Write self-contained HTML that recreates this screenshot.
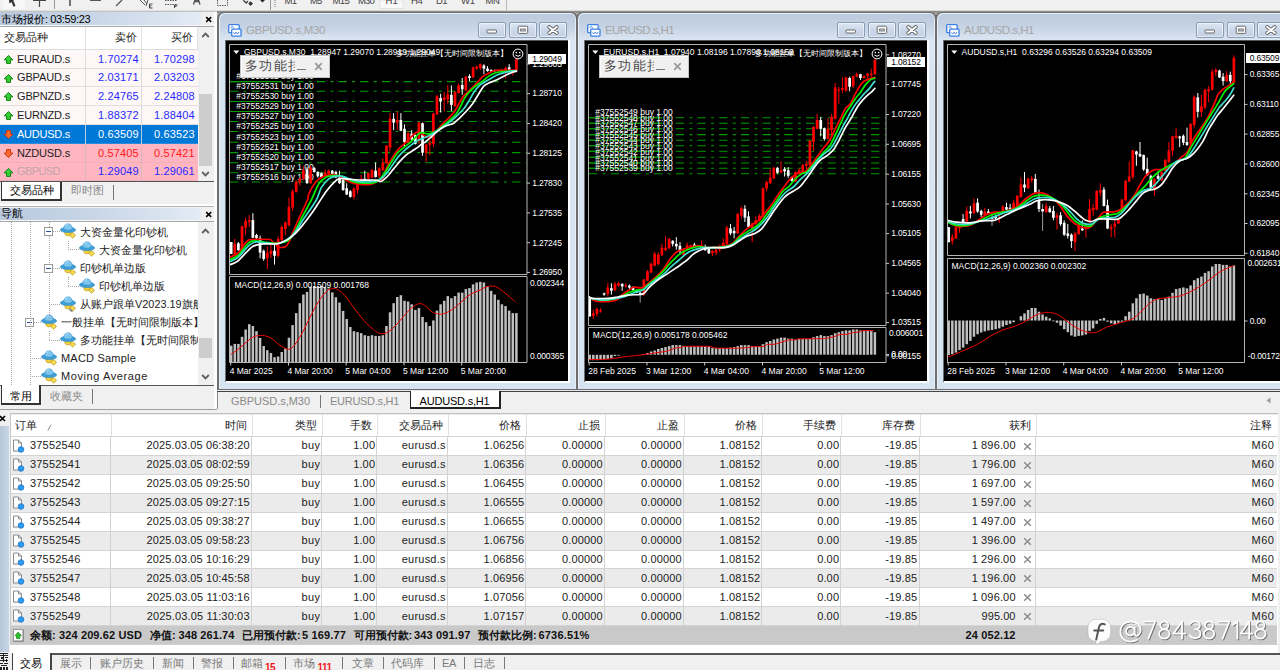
<!DOCTYPE html>
<html><head><meta charset="utf-8"><title>MT4</title>
<style>
html,body{margin:0;padding:0;background:#f0f0f0;}
#r{position:absolute;left:0;top:0;width:1280px;height:670px;overflow:hidden;background:#f0f0f0;font-family:"Liberation Sans",sans-serif;}
#r div,#r span.t,#r svg{position:absolute;}
#r span.t{white-space:pre;}
</style></head><body><div id="r">

<div style="left:0px;top:0px;width:1280px;height:11px;background:#f0f0f0;"></div>
<div style="left:0px;top:10px;width:217px;height:1px;background:#e0e0e0;"></div>
<div style="left:0px;top:11px;width:217px;height:1px;background:#c2c2c2;"></div>
<div style="left:217px;top:10px;width:1063px;height:1px;background:#d8d8d8;"></div>
<div style="left:217px;top:11px;width:1063px;height:2px;background:#8e8e8e;"></div>
<svg style="left:0;top:0" width="520" height="11" viewBox="0 0 520 11">
<rect x="3" y="0" width="22" height="9" fill="#f8f8f8"/>
<path d="M9 0 L13.5 0 L13.5 1 L15.5 6 L13.5 6.8 L11.5 2 L9.5 3.5 Z" fill="#333"/>
<path d="M39.5 0 V7 M33 0.5 H46" stroke="#444" stroke-width="1.2" fill="none"/>
<path d="M54.5 0 V9" stroke="#999" stroke-width="1"/>
<path d="M70 0 V6" stroke="#555" stroke-width="1.6"/>
<path d="M90 0.3 H101" stroke="#555" stroke-width="1.4"/>
<path d="M116 6 L122 0" stroke="#555" stroke-width="1.3"/>
<path d="M140 0 L145 5 M144 0 L147 4 M148 0 L146 6" stroke="#555" stroke-width="1" fill="none"/>
<path d="M149.5 4 V8 H152.5 M149.5 6 H151.5 M149.5 4 H152.5" stroke="#333" stroke-width="0.9" fill="none"/>
<path d="M165 0.5 H177 M165 4.5 H177" stroke="#555" stroke-width="1" stroke-dasharray="1.5 1"/>
<path d="M174.5 5 V8 M174.5 5 H177.5 M174.5 6.5 H176.5" stroke="#333" stroke-width="0.9" fill="none"/>
<path d="M193.5 4.5 L195 0 H198.5 L200 4.5 M194 1.5 H199.5" stroke="#555" stroke-width="1.4" fill="none"/>
<path d="M217.5 0 V5.5 H227.5 V0" stroke="#555" stroke-width="1" stroke-dasharray="1.5 1" fill="none"/>
<path d="M243.3 0.3 L246.2 3 L248 1" stroke="#444" stroke-width="1.3" fill="none"/><path d="M250.6 1.2 L253 3.6 L250.6 6 L248.2 3.6 Z" fill="#333"/>
<path d="M260 0 H265 L262.5 2.5 Z" fill="#222"/>
<path d="M270.5 0 V10" stroke="#999" stroke-width="1"/>
<path d="M275 0 V8" stroke="#bbb" stroke-width="2.5" stroke-dasharray="1 1"/>
<rect x="380" y="0" width="23" height="8.5" fill="#f9f9f9" stroke="#e2e2e2" stroke-width="1"/>
<path d="M506.5 0 V10" stroke="#b8b8b8" stroke-width="1"/>
</svg>
<span class="t" style="top:-5.24px;font-size:9.5px;line-height:11.5px;color:#444;letter-spacing:-0.60px;left:284.5px;">M1</span>
<span class="t" style="top:-5.24px;font-size:9.5px;line-height:11.5px;color:#444;letter-spacing:-0.85px;left:310px;">M5</span>
<span class="t" style="top:-5.24px;font-size:9.5px;line-height:11.5px;color:#444;letter-spacing:-0.66px;left:332.5px;">M15</span>
<span class="t" style="top:-5.24px;font-size:9.5px;line-height:11.5px;color:#444;letter-spacing:-0.83px;left:358px;">M30</span>
<span class="t" style="top:-5.24px;font-size:9.5px;line-height:11.5px;color:#444;letter-spacing:0.13px;left:385.6px;">H1</span>
<span class="t" style="top:-5.24px;font-size:9.5px;line-height:11.5px;color:#444;letter-spacing:-0.32px;left:411px;">H4</span>
<span class="t" style="top:-5.24px;font-size:9.5px;line-height:11.5px;color:#444;letter-spacing:-0.57px;left:436px;">D1</span>
<span class="t" style="top:-5.24px;font-size:9.5px;line-height:11.5px;color:#444;letter-spacing:-0.12px;left:461px;">W1</span>
<span class="t" style="top:-5.24px;font-size:9.5px;line-height:11.5px;color:#444;letter-spacing:-0.39px;left:485.6px;">MN</span>
<div style="left:0px;top:12px;width:217px;height:400px;background:#f0f0f0;"></div>
<div style="left:0px;top:12px;width:201px;height:14px;background:linear-gradient(90deg,#b9c9de 0%,#c9d7e8 50%,#e3ebf5 100%);"></div>
<span class="t" style="top:12.77px;font-size:10.9px;line-height:12.9px;color:#000;left:1px;">市场报价:</span>
<span class="t" style="top:12.69px;font-size:11px;line-height:13px;color:#000;letter-spacing:-0.35px;left:50.3px;">03:59:23</span>
<svg style="left:205px;top:16px" width="8" height="7" viewBox="0 0 8 7"><path d="M1.2 1.2 L6.2 5.8 M6.2 1.2 L1.2 5.8" stroke="#000" stroke-width="1.6"/></svg>
<div style="left:0px;top:25px;width:214px;height:1px;background:#f6f6f6;"></div>
<div style="left:0px;top:26px;width:214px;height:1px;background:#a8a8a8;"></div>
<div style="left:0px;top:27px;width:198px;height:155px;background:#fff;"></div>
<div style="left:0px;top:49px;width:198px;height:1px;background:#dcdcdc;"></div>
<div style="left:85px;top:27px;width:1px;height:22px;background:#e3e3e3;"></div>
<div style="left:141px;top:27px;width:1px;height:22px;background:#e3e3e3;"></div>
<div style="left:197px;top:27px;width:1px;height:22px;background:#e3e3e3;"></div>
<span class="t" style="top:30.77px;font-size:10.9px;line-height:12.9px;color:#222;left:4px;">交易品种</span>
<span class="t" style="top:30.77px;font-size:10.9px;line-height:12.9px;color:#222;right:1143.00px;">卖价</span>
<span class="t" style="top:30.77px;font-size:10.9px;line-height:12.9px;color:#222;right:1087.00px;">买价</span>
<div style="left:0px;top:49.6px;width:198px;height:19.5px;background:#fdf8f7;"></div>
<div style="left:0px;top:68.4px;width:198px;height:19.5px;background:#fdf8f7;"></div>
<div style="left:0px;top:87.2px;width:198px;height:19.5px;background:#fdf8f7;"></div>
<div style="left:0px;top:106.0px;width:198px;height:19.5px;background:#fdf8f7;"></div>
<div style="left:0px;top:124.8px;width:198px;height:19.5px;background:#0078d7;"></div>
<div style="left:0px;top:143.6px;width:198px;height:19.5px;background:#ffb6c1;"></div>
<div style="left:0px;top:162.4px;width:198px;height:18.8px;background:#ffb6c1;"></div>
<div style="left:0px;top:67.5px;width:198px;height:1px;background:#e2dede;"></div>
<div style="left:85px;top:49.6px;width:1px;height:18.8px;background:#dcdcdc;"></div>
<div style="left:141px;top:49.6px;width:1px;height:18.8px;background:#dcdcdc;"></div>
<svg style="left:2.7px;top:53.8px" width="11" height="11" viewBox="0 0 11 11"><path d="M5.5 1.4 L9.9 5.9 H7.5 V9.4 H3.5 V5.9 H1.1 Z" fill="#36cc36" stroke="#128612" stroke-width="1"/></svg>
<span class="t" style="top:52.69px;font-size:11px;line-height:13px;color:#222;letter-spacing:-0.25px;left:17px;">EURAUD.s</span>
<span class="t" style="top:52.69px;font-size:11px;line-height:13px;color:#2828ff;letter-spacing:0.11px;right:1141.39px;">1.70274</span>
<span class="t" style="top:52.69px;font-size:11px;line-height:13px;color:#2828ff;letter-spacing:0.11px;right:1085.39px;">1.70298</span>
<div style="left:0px;top:86.30000000000001px;width:198px;height:1px;background:#e2dede;"></div>
<div style="left:85px;top:68.4px;width:1px;height:18.8px;background:#dcdcdc;"></div>
<div style="left:141px;top:68.4px;width:1px;height:18.8px;background:#dcdcdc;"></div>
<svg style="left:2.7px;top:72.6px" width="11" height="11" viewBox="0 0 11 11"><path d="M5.5 1.4 L9.9 5.9 H7.5 V9.4 H3.5 V5.9 H1.1 Z" fill="#36cc36" stroke="#128612" stroke-width="1"/></svg>
<span class="t" style="top:71.49px;font-size:11px;line-height:13px;color:#222;letter-spacing:-0.15px;left:17px;">GBPAUD.s</span>
<span class="t" style="top:71.49px;font-size:11px;line-height:13px;color:#2828ff;letter-spacing:0.11px;right:1141.39px;">2.03171</span>
<span class="t" style="top:71.49px;font-size:11px;line-height:13px;color:#2828ff;letter-spacing:0.11px;right:1085.39px;">2.03203</span>
<div style="left:0px;top:105.1px;width:198px;height:1px;background:#e2dede;"></div>
<div style="left:85px;top:87.2px;width:1px;height:18.8px;background:#dcdcdc;"></div>
<div style="left:141px;top:87.2px;width:1px;height:18.8px;background:#dcdcdc;"></div>
<svg style="left:2.7px;top:91.4px" width="11" height="11" viewBox="0 0 11 11"><path d="M5.5 1.4 L9.9 5.9 H7.5 V9.4 H3.5 V5.9 H1.1 Z" fill="#36cc36" stroke="#128612" stroke-width="1"/></svg>
<span class="t" style="top:90.29px;font-size:11px;line-height:13px;color:#222;letter-spacing:-0.17px;left:17px;">GBPNZD.s</span>
<span class="t" style="top:90.29px;font-size:11px;line-height:13px;color:#2828ff;letter-spacing:0.11px;right:1141.39px;">2.24765</span>
<span class="t" style="top:90.29px;font-size:11px;line-height:13px;color:#2828ff;letter-spacing:0.11px;right:1085.39px;">2.24808</span>
<div style="left:0px;top:123.9px;width:198px;height:1px;background:#e2dede;"></div>
<div style="left:85px;top:106.0px;width:1px;height:18.8px;background:#dcdcdc;"></div>
<div style="left:141px;top:106.0px;width:1px;height:18.8px;background:#dcdcdc;"></div>
<svg style="left:2.7px;top:110.2px" width="11" height="11" viewBox="0 0 11 11"><path d="M5.5 1.4 L9.9 5.9 H7.5 V9.4 H3.5 V5.9 H1.1 Z" fill="#36cc36" stroke="#128612" stroke-width="1"/></svg>
<span class="t" style="top:109.09px;font-size:11px;line-height:13px;color:#222;letter-spacing:-0.17px;left:17px;">EURNZD.s</span>
<span class="t" style="top:109.09px;font-size:11px;line-height:13px;color:#2828ff;letter-spacing:0.11px;right:1141.39px;">1.88372</span>
<span class="t" style="top:109.09px;font-size:11px;line-height:13px;color:#2828ff;letter-spacing:0.11px;right:1085.39px;">1.88404</span>
<div style="left:0px;top:142.7px;width:198px;height:1px;background:#2a8ade;"></div>
<div style="left:85px;top:124.8px;width:1px;height:18.8px;background:#b8cde0;"></div>
<div style="left:141px;top:124.8px;width:1px;height:18.8px;background:#b8cde0;"></div>
<svg style="left:2.7px;top:129.0px" width="11" height="11" viewBox="0 0 11 11"><path d="M5.5 9.6 L9.9 5.1 H7.5 V1.6 H3.5 V5.1 H1.1 Z" fill="#ff6a30" stroke="#c8380c" stroke-width="1"/></svg>
<span class="t" style="top:127.89px;font-size:11px;line-height:13px;color:#fff;letter-spacing:-0.25px;left:17px;">AUDUSD.s</span>
<span class="t" style="top:127.89px;font-size:11px;line-height:13px;color:#fff;letter-spacing:0.11px;right:1141.39px;">0.63509</span>
<span class="t" style="top:127.89px;font-size:11px;line-height:13px;color:#fff;letter-spacing:0.11px;right:1085.39px;">0.63523</span>
<div style="left:0px;top:161.5px;width:198px;height:1px;background:#f2b0ba;"></div>
<div style="left:85px;top:143.6px;width:1px;height:18.8px;background:#dcb4bc;"></div>
<div style="left:141px;top:143.6px;width:1px;height:18.8px;background:#dcb4bc;"></div>
<svg style="left:2.7px;top:147.8px" width="11" height="11" viewBox="0 0 11 11"><path d="M5.5 9.6 L9.9 5.1 H7.5 V1.6 H3.5 V5.1 H1.1 Z" fill="#ff6a30" stroke="#c8380c" stroke-width="1"/></svg>
<span class="t" style="top:146.69px;font-size:11px;line-height:13px;color:#222;letter-spacing:-0.17px;left:17px;">NZDUSD.s</span>
<span class="t" style="top:146.69px;font-size:11px;line-height:13px;color:#ff1a1a;letter-spacing:0.11px;right:1141.39px;">0.57405</span>
<span class="t" style="top:146.69px;font-size:11px;line-height:13px;color:#ff1a1a;letter-spacing:0.11px;right:1085.39px;">0.57421</span>
<div style="left:0px;top:180.3px;width:198px;height:1px;background:#f2b0ba;"></div>
<div style="left:85px;top:162.4px;width:1px;height:18.8px;background:#dcb4bc;"></div>
<div style="left:141px;top:162.4px;width:1px;height:18.8px;background:#dcb4bc;"></div>
<svg style="left:2.7px;top:166.6px" width="11" height="11" viewBox="0 0 11 11"><path d="M5.5 1.4 L9.9 5.9 H7.5 V9.4 H3.5 V5.9 H1.1 Z" fill="#36cc36" stroke="#128612" stroke-width="1"/></svg>
<span class="t" style="top:165.49px;font-size:11px;line-height:13px;color:#bfa4ac;letter-spacing:-0.58px;left:17px;">GBPUSD</span>
<span class="t" style="top:165.49px;font-size:11px;line-height:13px;color:#2828ff;letter-spacing:0.11px;right:1141.39px;">1.29049</span>
<span class="t" style="top:165.49px;font-size:11px;line-height:13px;color:#2828ff;letter-spacing:0.11px;right:1085.39px;">1.29061</span>
<div style="left:198px;top:27px;width:17px;height:155px;background:#f0f0f0;"></div>
<svg style="left:201px;top:32px" width="9" height="6" viewBox="0 0 9 6"><path d="M1.2 5 L4.5 1.6 L7.8 5" stroke="#606060" stroke-width="1.8" fill="none"/></svg>
<svg style="left:201px;top:171px" width="9" height="6" viewBox="0 0 9 6"><path d="M1.2 1 L4.5 4.4 L7.8 1" stroke="#606060" stroke-width="1.8" fill="none"/></svg>
<div style="left:199px;top:94px;width:13px;height:72px;background:#cdcdcd;"></div>
<div style="left:0px;top:181px;width:214px;height:1px;background:#555;"></div>
<div style="left:1px;top:182px;width:61px;height:19px;background:#fff;border:1px solid #333;border-top:none;box-sizing:border-box;border-right:2px solid #333;border-bottom:2px solid #333;"></div>
<span class="t" style="top:184.37px;font-size:10.9px;line-height:12.9px;color:#000;left:10px;">交易品种</span>
<span class="t" style="top:184.37px;font-size:10.9px;line-height:12.9px;color:#8a8a8a;left:71px;">即时图</span>
<div style="left:113px;top:185px;width:1px;height:15px;background:#777;"></div>
<div style="left:0px;top:204px;width:217px;height:2px;background:#fff;"></div>
<div style="left:0px;top:206px;width:217px;height:1px;background:#b4b4b4;"></div>
<div style="left:0px;top:208px;width:201px;height:12px;background:linear-gradient(90deg,#b9c9de 0%,#c9d7e8 50%,#e3ebf5 100%);"></div>
<span class="t" style="top:207.27px;font-size:10.9px;line-height:12.9px;color:#000;left:1px;">导航</span>
<svg style="left:205px;top:211px" width="8" height="7" viewBox="0 0 8 7"><path d="M1.2 1.2 L6.2 5.8 M6.2 1.2 L1.2 5.8" stroke="#000" stroke-width="1.6"/></svg>
<div style="left:0px;top:220px;width:214px;height:1px;background:#f6f6f6;"></div>
<div style="left:0px;top:221px;width:214px;height:1px;background:#a8a8a8;"></div>
<div style="left:0px;top:222px;width:198px;height:163px;background:#fff;"></div>
<div style="left:198px;top:222px;width:17px;height:163px;background:#f0f0f0;"></div>
<svg style="left:201px;top:228px" width="9" height="6" viewBox="0 0 9 6"><path d="M1.2 5 L4.5 1.6 L7.8 5" stroke="#606060" stroke-width="1.8" fill="none"/></svg>
<svg style="left:201px;top:374px" width="9" height="6" viewBox="0 0 9 6"><path d="M1.2 1 L4.5 4.4 L7.8 1" stroke="#606060" stroke-width="1.8" fill="none"/></svg>
<div style="left:199px;top:338px;width:13px;height:20px;background:#cdcdcd;"></div>
<svg style="left:60px;top:223px" width="17" height="16" viewBox="0 0 17 16">
<circle cx="8" cy="9.6" r="3.3" fill="#f4d23e" stroke="#c39a14" stroke-width="0.7"/>
<path d="M12.4 9.3 L15.6 12.3 L12.6 15.2 L9.6 12.3 Z" fill="#f6da52" stroke="#b8921a" stroke-width="0.7"/>
<ellipse cx="8" cy="6.9" rx="7.6" ry="2.7" fill="#3f9fd8" stroke="#2a86c2" stroke-width="0.6"/>
<path d="M3.7 6.2 C3.9 2.4 5.6 0.9 8 0.9 C10.4 0.9 12.1 2.4 12.3 6.2 C10 7.6 6 7.6 3.7 6.2 Z" fill="#7fc6ee" stroke="#2f8fcb" stroke-width="0.7"/>
<path d="M5.2 3.2 C6 1.9 7.2 1.6 8.2 1.7" stroke="#c6e8fa" stroke-width="0.9" fill="none"/>
</svg>
<span class="t" style="top:225.67px;font-size:10.9px;line-height:12.9px;color:#222;left:80px;max-width:118px;overflow:hidden;">大资金量化印钞机</span>
<svg style="left:44px;top:227px" width="9" height="9" viewBox="0 0 9 9"><rect x="0.5" y="0.5" width="8" height="8" fill="#fff" stroke="#9a9a9a"/><path d="M2 4.5 H7" stroke="#3050a0" stroke-width="1"/></svg>
<svg style="left:79px;top:241px" width="17" height="16" viewBox="0 0 17 16">
<circle cx="8" cy="9.6" r="3.3" fill="#f4d23e" stroke="#c39a14" stroke-width="0.7"/>
<path d="M12.4 9.3 L15.6 12.3 L12.6 15.2 L9.6 12.3 Z" fill="#f6da52" stroke="#b8921a" stroke-width="0.7"/>
<ellipse cx="8" cy="6.9" rx="7.6" ry="2.7" fill="#3f9fd8" stroke="#2a86c2" stroke-width="0.6"/>
<path d="M3.7 6.2 C3.9 2.4 5.6 0.9 8 0.9 C10.4 0.9 12.1 2.4 12.3 6.2 C10 7.6 6 7.6 3.7 6.2 Z" fill="#7fc6ee" stroke="#2f8fcb" stroke-width="0.7"/>
<path d="M5.2 3.2 C6 1.9 7.2 1.6 8.2 1.7" stroke="#c6e8fa" stroke-width="0.9" fill="none"/>
</svg>
<span class="t" style="top:243.72px;font-size:10.9px;line-height:12.9px;color:#222;left:99px;max-width:99px;overflow:hidden;">大资金量化印钞机</span>
<svg style="left:60px;top:260px" width="17" height="16" viewBox="0 0 17 16">
<circle cx="8" cy="9.6" r="3.3" fill="#f4d23e" stroke="#c39a14" stroke-width="0.7"/>
<path d="M12.4 9.3 L15.6 12.3 L12.6 15.2 L9.6 12.3 Z" fill="#f6da52" stroke="#b8921a" stroke-width="0.7"/>
<ellipse cx="8" cy="6.9" rx="7.6" ry="2.7" fill="#3f9fd8" stroke="#2a86c2" stroke-width="0.6"/>
<path d="M3.7 6.2 C3.9 2.4 5.6 0.9 8 0.9 C10.4 0.9 12.1 2.4 12.3 6.2 C10 7.6 6 7.6 3.7 6.2 Z" fill="#7fc6ee" stroke="#2f8fcb" stroke-width="0.7"/>
<path d="M5.2 3.2 C6 1.9 7.2 1.6 8.2 1.7" stroke="#c6e8fa" stroke-width="0.9" fill="none"/>
</svg>
<span class="t" style="top:261.77px;font-size:10.9px;line-height:12.9px;color:#222;left:80px;max-width:118px;overflow:hidden;">印钞机单边版</span>
<svg style="left:44px;top:264px" width="9" height="9" viewBox="0 0 9 9"><rect x="0.5" y="0.5" width="8" height="8" fill="#fff" stroke="#9a9a9a"/><path d="M2 4.5 H7" stroke="#3050a0" stroke-width="1"/></svg>
<svg style="left:79px;top:278px" width="17" height="16" viewBox="0 0 17 16">
<circle cx="8" cy="9.6" r="3.3" fill="#f4d23e" stroke="#c39a14" stroke-width="0.7"/>
<path d="M12.4 9.3 L15.6 12.3 L12.6 15.2 L9.6 12.3 Z" fill="#f6da52" stroke="#b8921a" stroke-width="0.7"/>
<ellipse cx="8" cy="6.9" rx="7.6" ry="2.7" fill="#3f9fd8" stroke="#2a86c2" stroke-width="0.6"/>
<path d="M3.7 6.2 C3.9 2.4 5.6 0.9 8 0.9 C10.4 0.9 12.1 2.4 12.3 6.2 C10 7.6 6 7.6 3.7 6.2 Z" fill="#7fc6ee" stroke="#2f8fcb" stroke-width="0.7"/>
<path d="M5.2 3.2 C6 1.9 7.2 1.6 8.2 1.7" stroke="#c6e8fa" stroke-width="0.9" fill="none"/>
</svg>
<span class="t" style="top:279.82px;font-size:10.9px;line-height:12.9px;color:#222;left:99px;max-width:99px;overflow:hidden;">印钞机单边版</span>
<svg style="left:60px;top:296px" width="17" height="16" viewBox="0 0 17 16">
<circle cx="8" cy="9.6" r="3.3" fill="#f4d23e" stroke="#c39a14" stroke-width="0.7"/>
<path d="M12.4 9.3 L15.6 12.3 L12.6 15.2 L9.6 12.3 Z" fill="#f6da52" stroke="#b8921a" stroke-width="0.7"/>
<ellipse cx="8" cy="6.9" rx="7.6" ry="2.7" fill="#3f9fd8" stroke="#2a86c2" stroke-width="0.6"/>
<path d="M3.7 6.2 C3.9 2.4 5.6 0.9 8 0.9 C10.4 0.9 12.1 2.4 12.3 6.2 C10 7.6 6 7.6 3.7 6.2 Z" fill="#7fc6ee" stroke="#2f8fcb" stroke-width="0.7"/>
<path d="M5.2 3.2 C6 1.9 7.2 1.6 8.2 1.7" stroke="#c6e8fa" stroke-width="0.9" fill="none"/>
<path d="M10 12 L13 15 L11.5 16 L9 14 Z" fill="#888"/></svg>
<span class="t" style="top:297.87px;font-size:10.9px;line-height:12.9px;color:#222;left:80px;max-width:118px;overflow:hidden;">从账户跟单V2023.19旗舰</span>
<svg style="left:41px;top:314px" width="17" height="16" viewBox="0 0 17 16">
<circle cx="8" cy="9.6" r="3.3" fill="#f4d23e" stroke="#c39a14" stroke-width="0.7"/>
<path d="M12.4 9.3 L15.6 12.3 L12.6 15.2 L9.6 12.3 Z" fill="#f6da52" stroke="#b8921a" stroke-width="0.7"/>
<ellipse cx="8" cy="6.9" rx="7.6" ry="2.7" fill="#3f9fd8" stroke="#2a86c2" stroke-width="0.6"/>
<path d="M3.7 6.2 C3.9 2.4 5.6 0.9 8 0.9 C10.4 0.9 12.1 2.4 12.3 6.2 C10 7.6 6 7.6 3.7 6.2 Z" fill="#7fc6ee" stroke="#2f8fcb" stroke-width="0.7"/>
<path d="M5.2 3.2 C6 1.9 7.2 1.6 8.2 1.7" stroke="#c6e8fa" stroke-width="0.9" fill="none"/>
</svg>
<span class="t" style="top:315.92px;font-size:10.9px;line-height:12.9px;color:#222;left:61px;max-width:137px;overflow:hidden;">一般挂单【无时间限制版本】</span>
<svg style="left:25px;top:318px" width="9" height="9" viewBox="0 0 9 9"><rect x="0.5" y="0.5" width="8" height="8" fill="#fff" stroke="#9a9a9a"/><path d="M2 4.5 H7" stroke="#3050a0" stroke-width="1"/></svg>
<svg style="left:60px;top:332px" width="17" height="16" viewBox="0 0 17 16">
<circle cx="8" cy="9.6" r="3.3" fill="#f4d23e" stroke="#c39a14" stroke-width="0.7"/>
<path d="M12.4 9.3 L15.6 12.3 L12.6 15.2 L9.6 12.3 Z" fill="#f6da52" stroke="#b8921a" stroke-width="0.7"/>
<ellipse cx="8" cy="6.9" rx="7.6" ry="2.7" fill="#3f9fd8" stroke="#2a86c2" stroke-width="0.6"/>
<path d="M3.7 6.2 C3.9 2.4 5.6 0.9 8 0.9 C10.4 0.9 12.1 2.4 12.3 6.2 C10 7.6 6 7.6 3.7 6.2 Z" fill="#7fc6ee" stroke="#2f8fcb" stroke-width="0.7"/>
<path d="M5.2 3.2 C6 1.9 7.2 1.6 8.2 1.7" stroke="#c6e8fa" stroke-width="0.9" fill="none"/>
</svg>
<span class="t" style="top:333.97px;font-size:10.9px;line-height:12.9px;color:#222;left:80px;max-width:118px;overflow:hidden;">多功能挂单【无时间限制</span>
<svg style="left:41px;top:350px" width="17" height="16" viewBox="0 0 17 16">
<circle cx="8" cy="9.6" r="3.3" fill="#f4d23e" stroke="#c39a14" stroke-width="0.7"/>
<path d="M12.4 9.3 L15.6 12.3 L12.6 15.2 L9.6 12.3 Z" fill="#f6da52" stroke="#b8921a" stroke-width="0.7"/>
<ellipse cx="8" cy="6.9" rx="7.6" ry="2.7" fill="#3f9fd8" stroke="#2a86c2" stroke-width="0.6"/>
<path d="M3.7 6.2 C3.9 2.4 5.6 0.9 8 0.9 C10.4 0.9 12.1 2.4 12.3 6.2 C10 7.6 6 7.6 3.7 6.2 Z" fill="#7fc6ee" stroke="#2f8fcb" stroke-width="0.7"/>
<path d="M5.2 3.2 C6 1.9 7.2 1.6 8.2 1.7" stroke="#c6e8fa" stroke-width="0.9" fill="none"/>
</svg>
<span class="t" style="top:351.94px;font-size:11px;line-height:13px;color:#222;letter-spacing:0.21px;left:61px;">MACD Sample</span>
<svg style="left:41px;top:368px" width="17" height="16" viewBox="0 0 17 16">
<circle cx="8" cy="9.6" r="3.3" fill="#f4d23e" stroke="#c39a14" stroke-width="0.7"/>
<path d="M12.4 9.3 L15.6 12.3 L12.6 15.2 L9.6 12.3 Z" fill="#f6da52" stroke="#b8921a" stroke-width="0.7"/>
<ellipse cx="8" cy="6.9" rx="7.6" ry="2.7" fill="#3f9fd8" stroke="#2a86c2" stroke-width="0.6"/>
<path d="M3.7 6.2 C3.9 2.4 5.6 0.9 8 0.9 C10.4 0.9 12.1 2.4 12.3 6.2 C10 7.6 6 7.6 3.7 6.2 Z" fill="#7fc6ee" stroke="#2f8fcb" stroke-width="0.7"/>
<path d="M5.2 3.2 C6 1.9 7.2 1.6 8.2 1.7" stroke="#c6e8fa" stroke-width="0.9" fill="none"/>
</svg>
<span class="t" style="top:369.99px;font-size:11px;line-height:13px;color:#222;letter-spacing:0.59px;left:61px;">Moving Average</span>
<svg style="left:0;top:0" width="200" height="400" viewBox="0 0 200 400" stroke="#a8a8a8" stroke-width="1" stroke-dasharray="1 1" fill="none"><path d="M53 231.5 H60" /><path d="M68 249.5 H79" /><path d="M53 268.5 H60" /><path d="M68 286.5 H79" /><path d="M49 304.5 H60" /><path d="M34 322.5 H41" /><path d="M49 340.5 H60" /><path d="M30 358.5 H41" /><path d="M30 376.5 H41" /><path d="M11.5 222 V385" /><path d="M30.5 222 V385" /><path d="M49.5 222 V227" /><path d="M49.5 236 V263" /><path d="M49.5 272 V322" /><path d="M68.5 241 V250" /><path d="M68.5 277 V286" /><path d="M49.5 331 V340" /></svg>
<div style="left:0px;top:385px;width:214px;height:1px;background:#555;"></div>
<div style="left:1px;top:385px;width:40px;height:20px;background:#fff;border:1px solid #333;border-top:none;box-sizing:border-box;border-right:2px solid #333;border-bottom:2px solid #333;"></div>
<span class="t" style="top:389.77px;font-size:10.9px;line-height:12.9px;color:#000;left:10px;">常用</span>
<span class="t" style="top:389.77px;font-size:10.9px;line-height:12.9px;color:#8a8a8a;left:50px;">收藏夹</span>
<div style="left:92px;top:389px;width:1px;height:15px;background:#777;"></div>
<div style="left:214px;top:12px;width:3px;height:398px;background:#fdfdfd;"></div>
<div style="left:217px;top:13px;width:1063px;height:379px;background:#ababab;"></div>
<div style="left:217px;top:12px;width:361px;height:378px;box-sizing:border-box;border:2px solid #6e6e6e;border-bottom-width:1px;border-top-width:1px;border-radius:7px 7px 0 0;background:linear-gradient(180deg,#bac9dc 0px,#bfcee0 7px,#c8d5e6 16px,#d6e1ef 24px,#dee8f4 29px,#d8e4f2 60px,#d6e3f1 100%);box-shadow:inset 1px 1px 0 #e6eef8,inset -1px 0 0 #e6eef8;"></div>
<svg style="left:228px;top:24px" width="15" height="14" viewBox="0 0 15 14"><rect x="0.7" y="0.7" width="10.5" height="8" rx="1" fill="#fff" stroke="#3c7fe6" stroke-width="1.3"/><path d="M2.5 3.5 L4.5 2.5 L6 4.5" stroke="#3c7fe6" fill="none" stroke-width="0.9"/>
<rect x="3.7" y="5.2" width="9.3" height="7" rx="0.8" fill="#fff" stroke="#3c7fe6" stroke-width="1.3"/><path d="M5.3 8.4 L6.8 10 L8.2 8 L9.6 10 L11 8" stroke="#3c7fe6" fill="none" stroke-width="0.9"/></svg>
<span class="t" style="top:24.47px;font-size:11.5px;line-height:13.5px;color:#a6a6a6;letter-spacing:-0.34px;left:246px;">GBPUSD.s,M30</span>
<div style="left:478px;top:22px;width:28.2px;height:16px;box-sizing:border-box;border:1px solid #8b9cb6;border-radius:2px;background:linear-gradient(180deg,#dde7f3,#cbd8e9 50%,#c3d1e3);box-shadow:inset 0 0 0 1px rgba(255,255,255,.55);"></div>
<svg style="left:486px;top:29px" width="12" height="6" viewBox="0 0 12 6"><rect x="1" y="1" width="9.5" height="3" rx="0.8" fill="#fff" stroke="#5a5a5a" stroke-width="0.9"/></svg>
<div style="left:508.5px;top:22px;width:28.2px;height:16px;box-sizing:border-box;border:1px solid #8b9cb6;border-radius:2px;background:linear-gradient(180deg,#dde7f3,#cbd8e9 50%,#c3d1e3);box-shadow:inset 0 0 0 1px rgba(255,255,255,.55);"></div>
<svg style="left:516.5px;top:25px" width="12" height="10" viewBox="0 0 12 10"><rect x="1.2" y="1.2" width="9.5" height="7.2" rx="1" fill="#fff" stroke="#5a5a5a" stroke-width="0.9"/><rect x="3.6" y="4" width="4.7" height="2" fill="#c9d6e8" stroke="#5a5a5a" stroke-width="0.8"/></svg>
<div style="left:539px;top:22px;width:28.2px;height:16px;box-sizing:border-box;border:1px solid #8b9cb6;border-radius:2px;background:linear-gradient(180deg,#dde7f3,#cbd8e9 50%,#c3d1e3);box-shadow:inset 0 0 0 1px rgba(255,255,255,.55);"></div>
<svg style="left:547px;top:25px" width="12" height="10" viewBox="0 0 12 10"><path d="M2.2 2 L9.8 8 M9.8 2 L2.2 8" stroke="#555" stroke-width="3.6" stroke-linecap="round"/><path d="M2.2 2 L9.8 8 M9.8 2 L2.2 8" stroke="#fff" stroke-width="2.1" stroke-linecap="round"/></svg>
<div style="left:226px;top:40px;width:344px;height:343px;background:#fff;"></div>
<div style="left:225px;top:40px;width:1px;height:342px;background:#6a7078;"></div>
<div style="left:226px;top:40px;width:342px;height:341px;background:#000;"></div>
<div style="left:226px;top:40px;width:342px;height:1px;background:#50555c;"></div>
<svg style="left:226px;top:41px" width="343" height="340" viewBox="226 41 343 340"><g stroke="#009c00" stroke-width="1.05" stroke-dasharray="8.2 5.4 3 5.1" fill="none"><path d="M230 81.6 H527"/><path d="M230 91.2 H527"/><path d="M230 101.4 H527"/><path d="M230 111.5 H527"/><path d="M230 121.5 H527"/><path d="M230 131.5 H527"/><path d="M230 142.2 H527"/><path d="M230 152.6 H527"/><path d="M230 162.8 H527"/><path d="M230 172.7 H527"/><path d="M230 181.9 H527"/></g><g stroke="#009c00" stroke-width="1.05" fill="none"><path d="M230 81.6 H282"/><path d="M230 101.4 H282"/><path d="M230 111.5 H282"/></g>
</svg>
<span class="t" style="top:71.20px;font-size:8.5px;line-height:10.5px;color:#fff;left:236.3px;">#37552532 buy 1.00</span>
<span class="t" style="top:80.80px;font-size:8.5px;line-height:10.5px;color:#fff;left:236.3px;">#37552531 buy 1.00</span>
<span class="t" style="top:91.00px;font-size:8.5px;line-height:10.5px;color:#fff;left:236.3px;">#37552530 buy 1.00</span>
<span class="t" style="top:101.10px;font-size:8.5px;line-height:10.5px;color:#fff;left:236.3px;">#37552529 buy 1.00</span>
<span class="t" style="top:111.10px;font-size:8.5px;line-height:10.5px;color:#fff;left:236.3px;">#37552527 buy 1.00</span>
<span class="t" style="top:121.10px;font-size:8.5px;line-height:10.5px;color:#fff;left:236.3px;">#37552525 buy 1.00</span>
<span class="t" style="top:131.80px;font-size:8.5px;line-height:10.5px;color:#fff;left:236.3px;">#37552523 buy 1.00</span>
<span class="t" style="top:142.20px;font-size:8.5px;line-height:10.5px;color:#fff;left:236.3px;">#37552521 buy 1.00</span>
<span class="t" style="top:152.40px;font-size:8.5px;line-height:10.5px;color:#fff;left:236.3px;">#37552520 buy 1.00</span>
<span class="t" style="top:162.30px;font-size:8.5px;line-height:10.5px;color:#fff;left:236.3px;">#37552517 buy 1.00</span>
<span class="t" style="top:171.50px;font-size:8.5px;line-height:10.5px;color:#fff;left:236.3px;">#37552516 buy 1.00</span>
<svg style="left:226px;top:41px" width="343" height="340" viewBox="226 41 343 340"><g stroke-width="1" fill="none"><path d="M231.2 242.0 V253.9" stroke="#ffffff"/><path d="M234.8 238.9 V255.8" stroke="#ff0000"/><path d="M238.4 242.0 V250.8" stroke="#ffffff"/><path d="M242.0 225.7 V250.2" stroke="#ff0000"/><path d="M245.6 217.6 V234.5" stroke="#ff0000"/><path d="M249.2 215.0 V227.0" stroke="#ff0000"/><path d="M252.9 213.2 V238.2" stroke="#ffffff"/><path d="M256.5 233.9 V240.1" stroke="#ffffff"/><path d="M260.1 235.7 V258.3" stroke="#ffffff"/><path d="M263.7 249.5 V260.8" stroke="#ffffff"/><path d="M267.3 246.4 V269.0" stroke="#ff0000"/><path d="M270.9 243.3 V258.3" stroke="#ff0000"/><path d="M274.5 244.5 V264.6" stroke="#ffffff"/><path d="M278.1 236.4 V257.7" stroke="#ff0000"/><path d="M281.7 225.1 V241.4" stroke="#ff0000"/><path d="M285.3 221.3 V235.1" stroke="#ff0000"/><path d="M289.0 197.6 V226.5" stroke="#ff0000"/><path d="M292.6 189.5 V210.8" stroke="#ff0000"/><path d="M296.2 180.1 V192.6" stroke="#ff0000"/><path d="M299.8 177.6 V185.7" stroke="#ff0000"/><path d="M303.4 166.3 V180.1" stroke="#ff0000"/><path d="M307.0 166.9 V183.8" stroke="#ffffff"/><path d="M310.6 165.6 V183.8" stroke="#ff0000"/><path d="M314.2 166.9 V172.5" stroke="#ffffff"/><path d="M317.8 171.3 V177.6" stroke="#ffffff"/><path d="M321.4 172.5 V177.6" stroke="#ffffff"/><path d="M325.1 169.4 V176.3" stroke="#ff0000"/><path d="M328.7 169.4 V175.0" stroke="#ff0000"/><path d="M332.3 170.0 V174.4" stroke="#ffffff"/><path d="M335.9 170.7 V178.2" stroke="#ffffff"/><path d="M339.5 170.7 V183.8" stroke="#ffffff"/><path d="M343.1 178.8 V190.7" stroke="#ffffff"/><path d="M346.7 183.2 V195.1" stroke="#ffffff"/><path d="M350.3 190.1 V197.6" stroke="#ffffff"/><path d="M353.9 187.6 V199.5" stroke="#ff0000"/><path d="M357.5 183.8 V193.9" stroke="#ff0000"/><path d="M361.2 175.0 V183.2" stroke="#ff0000"/><path d="M364.8 170.7 V181.3" stroke="#ffffff"/><path d="M368.4 172.5 V179.4" stroke="#ff0000"/><path d="M372.0 168.8 V178.2" stroke="#ff0000"/><path d="M375.6 162.5 V177.6" stroke="#ffffff"/><path d="M379.2 167.1 V179.0" stroke="#ff0000"/><path d="M382.8 158.3 V170.8" stroke="#ff0000"/><path d="M386.4 145.1 V163.9" stroke="#ff0000"/><path d="M390.0 113.1 V151.4" stroke="#ff0000"/><path d="M393.6 113.1 V130.1" stroke="#ffffff"/><path d="M397.3 111.3 V130.1" stroke="#ff0000"/><path d="M400.9 113.1 V131.3" stroke="#ffffff"/><path d="M404.5 124.4 V147.6" stroke="#ffffff"/><path d="M408.1 131.3 V143.2" stroke="#ff0000"/><path d="M411.7 130.1 V141.3" stroke="#ffffff"/><path d="M415.3 134.5 V144.5" stroke="#ffffff"/><path d="M418.9 121.9 V143.9" stroke="#ff0000"/><path d="M422.5 122.5 V155.8" stroke="#ffffff"/><path d="M426.1 143.9 V162.0" stroke="#ff0000"/><path d="M429.8 140.1 V155.1" stroke="#ff0000"/><path d="M433.4 112.5 V147.0" stroke="#ff0000"/><path d="M437.0 94.9 V115.0" stroke="#ff0000"/><path d="M440.6 93.7 V112.5" stroke="#ffffff"/><path d="M444.2 91.8 V111.2" stroke="#ff0000"/><path d="M447.8 84.9 V104.3" stroke="#ff0000"/><path d="M451.4 85.5 V111.2" stroke="#ffffff"/><path d="M455.0 91.2 V106.8" stroke="#ff0000"/><path d="M458.6 83.6 V93.7" stroke="#ff0000"/><path d="M462.2 78.0 V94.9" stroke="#ffffff"/><path d="M465.9 76.1 V91.2" stroke="#ff0000"/><path d="M469.5 74.2 V81.1" stroke="#ffffff"/><path d="M473.1 66.7 V78.0" stroke="#ff0000"/><path d="M476.7 65.5 V69.8" stroke="#ff0000"/><path d="M480.3 63.6 V69.8" stroke="#ff0000"/><path d="M483.9 64.2 V74.2" stroke="#ffffff"/><path d="M487.5 66.1 V71.7" stroke="#ffffff"/><path d="M491.1 69.2 V71.7" stroke="#ffffff"/><path d="M494.7 69.6 V71.7" stroke="#ffffff"/><path d="M498.3 69.2 V71.7" stroke="#ff0000"/><path d="M501.9 68.8 V71.7" stroke="#ff0000"/><path d="M505.6 66.7 V78.6" stroke="#ff0000"/><path d="M509.2 64.2 V70.5" stroke="#ffffff"/><path d="M512.8 69.2 V75.5" stroke="#ff0000"/><path d="M516.4 58.6 V72.3" stroke="#ff0000"/></g><rect x="229.85" y="242.0" width="2.7" height="11.9" fill="#ffffff"/><rect x="233.46" y="243.9" width="2.7" height="11.3" fill="#ff0000"/><rect x="237.07" y="243.3" width="2.7" height="6.9" fill="#ffffff"/><rect x="240.68" y="226.3" width="2.7" height="23.8" fill="#ff0000"/><rect x="244.29" y="220.7" width="2.7" height="6.9" fill="#ff0000"/><rect x="247.90" y="220.1" width="2.7" height="1.9" fill="#ff0000"/><rect x="251.51" y="220.1" width="2.7" height="17.6" fill="#ffffff"/><rect x="255.12" y="235.1" width="2.7" height="3.1" fill="#ffffff"/><rect x="258.73" y="238.2" width="2.7" height="14.4" fill="#ffffff"/><rect x="262.34" y="250.8" width="2.7" height="8.2" fill="#ffffff"/><rect x="265.95" y="252.7" width="2.7" height="5.6" fill="#ff0000"/><rect x="269.56" y="250.8" width="2.7" height="3.1" fill="#ff0000"/><rect x="273.17" y="250.8" width="2.7" height="5.0" fill="#ffffff"/><rect x="276.78" y="238.9" width="2.7" height="16.9" fill="#ff0000"/><rect x="280.39" y="227.0" width="2.7" height="13.2" fill="#ff0000"/><rect x="284.00" y="222.6" width="2.7" height="6.3" fill="#ff0000"/><rect x="287.61" y="207.0" width="2.7" height="18.2" fill="#ff0000"/><rect x="291.22" y="191.3" width="2.7" height="16.3" fill="#ff0000"/><rect x="294.83" y="181.9" width="2.7" height="10.0" fill="#ff0000"/><rect x="298.44" y="178.8" width="2.7" height="3.8" fill="#ff0000"/><rect x="302.05" y="170.0" width="2.7" height="8.8" fill="#ff0000"/><rect x="305.66" y="170.0" width="2.7" height="13.2" fill="#ffffff"/><rect x="309.27" y="167.5" width="2.7" height="15.7" fill="#ff0000"/><rect x="312.88" y="168.2" width="2.7" height="3.8" fill="#ffffff"/><rect x="316.49" y="171.9" width="2.7" height="4.4" fill="#ffffff"/><rect x="320.10" y="173.2" width="2.7" height="3.8" fill="#ffffff"/><rect x="323.71" y="172.5" width="2.7" height="3.1" fill="#ff0000"/><rect x="327.32" y="170.7" width="2.7" height="3.8" fill="#ff0000"/><rect x="330.93" y="170.7" width="2.7" height="3.1" fill="#ffffff"/><rect x="334.54" y="171.9" width="2.7" height="5.6" fill="#ffffff"/><rect x="338.15" y="177.6" width="2.7" height="5.6" fill="#ffffff"/><rect x="341.76" y="180.1" width="2.7" height="10.0" fill="#ffffff"/><rect x="345.37" y="188.2" width="2.7" height="6.3" fill="#ffffff"/><rect x="348.98" y="191.3" width="2.7" height="5.6" fill="#ffffff"/><rect x="352.59" y="188.2" width="2.7" height="8.8" fill="#ff0000"/><rect x="356.20" y="184.5" width="2.7" height="5.6" fill="#ff0000"/><rect x="359.81" y="178.8" width="2.7" height="3.8" fill="#ff0000"/><rect x="363.42" y="178.8" width="2.7" height="1.9" fill="#ffffff"/><rect x="367.03" y="173.2" width="2.7" height="5.6" fill="#ff0000"/><rect x="370.64" y="170.0" width="2.7" height="7.5" fill="#ff0000"/><rect x="374.25" y="170.7" width="2.7" height="6.3" fill="#ffffff"/><rect x="377.86" y="168.3" width="2.7" height="7.5" fill="#ff0000"/><rect x="381.47" y="162.7" width="2.7" height="7.5" fill="#ff0000"/><rect x="385.08" y="145.7" width="2.7" height="17.6" fill="#ff0000"/><rect x="388.69" y="118.8" width="2.7" height="28.8" fill="#ff0000"/><rect x="392.30" y="118.8" width="2.7" height="3.8" fill="#ffffff"/><rect x="395.91" y="120.0" width="2.7" height="2.5" fill="#ff0000"/><rect x="399.52" y="120.0" width="2.7" height="10.7" fill="#ffffff"/><rect x="403.13" y="128.8" width="2.7" height="13.2" fill="#ffffff"/><rect x="406.74" y="133.2" width="2.7" height="9.4" fill="#ff0000"/><rect x="410.35" y="133.8" width="2.7" height="5.6" fill="#ffffff"/><rect x="413.96" y="135.1" width="2.7" height="8.8" fill="#ffffff"/><rect x="417.57" y="122.5" width="2.7" height="18.8" fill="#ff0000"/><rect x="421.18" y="123.2" width="2.7" height="29.5" fill="#ffffff"/><rect x="424.79" y="144.5" width="2.7" height="8.2" fill="#ff0000"/><rect x="428.40" y="142.6" width="2.7" height="2.5" fill="#ff0000"/><rect x="432.01" y="113.8" width="2.7" height="30.1" fill="#ff0000"/><rect x="435.62" y="96.2" width="2.7" height="18.2" fill="#ff0000"/><rect x="439.23" y="98.1" width="2.7" height="3.1" fill="#ffffff"/><rect x="442.84" y="97.4" width="2.7" height="2.5" fill="#ff0000"/><rect x="446.45" y="94.3" width="2.7" height="5.0" fill="#ff0000"/><rect x="450.06" y="94.9" width="2.7" height="10.0" fill="#ffffff"/><rect x="453.67" y="91.8" width="2.7" height="14.4" fill="#ff0000"/><rect x="457.28" y="85.5" width="2.7" height="7.5" fill="#ff0000"/><rect x="460.89" y="84.9" width="2.7" height="4.4" fill="#ffffff"/><rect x="464.50" y="76.7" width="2.7" height="13.8" fill="#ff0000"/><rect x="468.11" y="76.1" width="2.7" height="1.9" fill="#ffffff"/><rect x="471.72" y="67.3" width="2.7" height="10.0" fill="#ff0000"/><rect x="475.33" y="66.7" width="2.7" height="1.9" fill="#ff0000"/><rect x="478.94" y="64.2" width="2.7" height="3.8" fill="#ff0000"/><rect x="482.55" y="65.5" width="2.7" height="3.1" fill="#ffffff"/><rect x="486.16" y="68.6" width="2.7" height="2.5" fill="#ffffff"/><rect x="489.77" y="70.1" width="2.7" height="1.3" fill="#ffffff"/><rect x="493.38" y="70.2" width="2.7" height="1.0" fill="#ffffff"/><rect x="496.99" y="69.8" width="2.7" height="1.3" fill="#ff0000"/><rect x="500.60" y="69.6" width="2.7" height="1.3" fill="#ff0000"/><rect x="504.21" y="68.0" width="2.7" height="2.5" fill="#ff0000"/><rect x="507.82" y="67.3" width="2.7" height="2.5" fill="#ffffff"/><rect x="511.43" y="70.5" width="2.7" height="1.3" fill="#ff0000"/><rect x="515.04" y="59.2" width="2.7" height="11.3" fill="#ff0000"/><path d="M230.4 257.1 C231.7 256.4 236.4 254.6 238.5 252.7 C240.6 250.8 241.9 247.1 243.6 245.1 C245.2 243.1 247.0 241.0 248.6 240.1 C250.2 239.2 250.2 239.6 253.6 239.5 C257.0 239.4 266.8 239.0 269.9 239.5 C273.0 240.0 272.0 242.0 273.0 242.6 C274.0 243.2 275.5 242.6 276.2 243.3 C276.9 244.0 276.0 246.4 277.4 247.0 C278.8 247.6 283.1 247.7 284.9 247.0 C286.7 246.3 287.5 244.8 288.7 242.6 C289.9 240.4 290.9 237.0 292.5 233.2 C294.1 229.4 296.3 224.1 298.7 218.8 C301.1 213.5 305.9 204.0 307.5 200.0 C309.1 196.0 307.4 196.8 308.8 193.9 C310.2 190.9 313.9 184.1 316.3 181.3 C318.7 178.5 321.6 177.3 323.8 176.3 C326.0 175.3 328.1 175.2 330.1 175.0 C332.1 174.8 334.1 174.4 336.3 175.0 C338.6 175.6 341.5 177.6 343.9 178.8 C346.3 180.0 348.6 181.7 351.4 182.6 C354.2 183.5 358.4 184.2 361.4 184.5 C364.4 184.8 367.8 184.9 370.2 184.5 C372.6 184.1 374.5 182.8 376.5 181.9 C378.5 181.0 381.2 180.9 382.7 178.8 C384.3 176.7 384.5 172.3 386.0 168.9 C387.6 165.5 390.3 160.9 392.3 157.6 C394.3 154.4 396.8 151.0 398.6 148.9 C400.4 146.8 401.8 146.2 403.6 144.5 C405.4 142.8 407.8 140.1 409.9 138.2 C411.9 136.3 414.5 133.5 416.1 132.6 C417.7 131.7 418.7 132.2 419.9 132.6 C421.1 133.0 422.4 134.4 423.6 135.1 C424.9 135.8 426.2 137.0 427.4 137.0 C428.6 137.0 429.8 136.0 431.2 135.1 C432.6 134.2 434.4 133.1 436.2 131.3 C438.0 129.5 440.5 125.9 442.5 123.8 C444.5 121.7 446.9 120.0 448.7 118.2 C450.5 116.3 452.5 114.0 453.7 112.5 C454.9 111.0 454.8 111.1 456.3 108.7 C457.7 106.3 460.5 100.2 462.5 97.4 C464.5 94.6 466.6 93.4 468.8 91.2 C471.0 88.9 474.1 85.9 476.3 83.6 C478.5 81.3 480.6 78.4 482.6 76.7 C484.6 75.0 486.8 74.0 488.9 73.0 C490.9 72.0 492.5 70.9 495.1 70.5 C497.7 70.1 502.5 70.5 505.2 70.5 C507.8 70.4 509.6 70.1 511.4 70.1 C513.2 70.1 515.6 70.4 516.4 70.5" stroke="#ff0000" stroke-width="1.7" fill="none" stroke-linejoin="round" stroke-linecap="round"/><path d="M230.4 259.6 C231.7 258.9 236.2 257.2 238.5 255.2 C240.8 253.2 243.0 249.1 244.8 247.0 C246.6 244.9 248.2 243.0 249.8 242.0 C251.4 241.0 252.6 240.8 254.8 240.8 C257.0 240.8 260.2 241.6 263.6 242.0 C267.0 242.4 272.7 243.3 276.2 243.3 C279.6 243.3 282.7 242.7 284.9 242.0 C287.1 241.3 288.3 240.6 289.9 238.9 C291.6 237.2 293.2 234.6 295.0 231.3 C296.8 228.1 298.6 223.8 301.2 218.8 C303.8 213.8 308.5 205.6 311.3 200.0 C314.1 194.4 316.4 187.5 318.8 183.8 C321.2 180.1 324.1 178.2 326.3 176.9 C328.5 175.6 330.6 175.9 332.6 175.7 C334.6 175.5 336.6 175.3 338.9 175.7 C341.1 176.1 344.0 177.2 346.4 178.2 C348.8 179.2 351.1 181.1 353.9 181.9 C356.7 182.7 360.3 183.2 363.9 183.2 C367.5 183.2 373.1 183.6 376.5 181.9 C379.8 180.3 382.4 175.8 384.8 172.7 C387.1 169.6 389.0 165.8 391.0 162.7 C393.1 159.6 395.3 155.7 397.3 153.3 C399.3 150.9 401.6 149.3 403.6 147.6 C405.6 145.9 408.1 144.1 409.9 142.6 C411.7 141.1 413.5 139.6 414.9 138.2 C416.3 136.8 417.4 134.7 418.6 133.8 C419.8 132.9 421.0 132.6 422.4 132.6 C423.8 132.6 426.0 133.7 427.4 133.8 C428.8 133.9 429.6 133.8 431.2 133.2 C432.8 132.6 435.4 131.4 437.4 130.1 C439.4 128.8 441.7 126.7 443.7 125.0 C445.7 123.4 448.0 121.8 450.0 120.0 C452.0 118.2 454.6 115.8 456.3 113.8 C457.9 111.7 458.6 110.1 460.0 107.5 C461.4 104.8 463.4 100.0 465.0 97.4 C466.6 94.8 468.2 93.1 470.0 91.2 C471.8 89.3 474.3 87.1 476.3 85.5 C478.3 83.9 480.6 82.6 482.6 81.1 C484.6 79.6 486.8 77.4 488.9 76.1 C490.9 74.8 493.1 73.7 495.1 73.0 C497.1 72.3 499.2 72.0 501.4 71.7 C503.6 71.4 506.5 71.3 508.9 71.1 C511.3 70.9 515.2 70.8 516.4 70.7" stroke="#00f000" stroke-width="1.7" fill="none" stroke-linejoin="round" stroke-linecap="round"/><path d="M230.4 261.4 C231.7 260.7 236.0 259.2 238.5 257.1 C241.0 254.9 244.1 250.4 246.1 248.3 C248.1 246.2 249.5 244.9 251.1 243.9 C252.7 242.9 254.1 242.2 256.1 242.0 C258.1 241.8 260.4 242.3 263.6 242.6 C266.8 242.9 272.9 244.1 276.2 243.9 C279.4 243.7 281.3 242.6 283.7 241.4 C286.1 240.2 289.0 238.4 291.2 236.4 C293.4 234.4 295.5 231.6 297.5 228.8 C299.5 226.0 300.7 223.4 303.7 218.8 C306.8 214.2 313.5 205.0 316.3 200.0 C319.1 195.0 319.3 191.0 321.3 187.6 C323.3 184.2 326.6 180.6 328.8 178.8 C331.0 177.0 332.9 176.7 335.1 176.3 C337.3 175.9 340.4 175.9 342.6 176.3 C344.8 176.7 346.5 178.0 348.9 178.8 C351.3 179.6 354.3 180.8 357.7 181.3 C361.1 181.8 366.8 182.1 370.2 181.9 C373.6 181.7 376.4 181.3 379.0 180.1 C381.5 178.8 383.9 176.3 386.0 173.9 C388.2 171.6 390.3 168.0 392.3 165.2 C394.3 162.4 396.6 158.8 398.6 156.4 C400.6 154.0 402.8 151.9 404.8 150.1 C406.8 148.3 409.3 146.5 411.1 145.1 C412.9 143.7 414.7 142.3 416.1 141.3 C417.5 140.4 418.3 140.2 419.9 139.5 C421.5 138.8 424.4 137.8 426.2 137.0 C428.0 136.2 429.4 135.5 431.2 134.5 C433.0 133.4 435.4 132.0 437.4 130.7 C439.4 129.4 441.7 127.7 443.7 126.3 C445.7 124.9 448.0 123.5 450.0 121.9 C452.0 120.3 454.0 118.4 456.3 116.3 C458.5 114.2 461.8 111.1 463.8 108.7 C465.8 106.3 467.2 103.8 468.8 101.2 C470.4 98.6 472.0 95.0 473.8 92.4 C475.6 89.8 478.1 86.7 480.1 84.9 C482.1 83.1 484.3 82.3 486.3 81.1 C488.4 79.9 490.6 78.5 492.6 77.4 C494.6 76.3 496.9 75.0 498.9 74.2 C500.9 73.4 503.1 72.8 505.2 72.3 C507.2 71.8 509.6 71.3 511.4 71.1 C513.2 70.9 515.6 70.9 516.4 70.8" stroke="#40e0d0" stroke-width="1.7" fill="none" stroke-linejoin="round" stroke-linecap="round"/><path d="M230.4 264.6 C231.5 264.1 235.0 263.1 237.3 261.4 C239.6 259.7 242.6 256.1 244.8 253.9 C247.0 251.7 249.3 249.1 251.1 247.6 C252.9 246.2 254.1 245.7 256.1 245.1 C258.1 244.5 260.4 244.1 263.6 243.9 C266.8 243.7 273.1 244.2 276.2 243.9 C279.2 243.6 280.4 242.8 282.4 242.0 C284.4 241.2 286.5 240.4 288.7 238.9 C290.9 237.4 293.8 235.0 296.2 232.6 C298.6 230.2 301.3 226.8 303.7 223.8 C306.2 220.8 308.9 217.2 311.3 213.8 C313.7 210.4 316.4 206.2 318.8 202.6 C321.2 199.0 323.9 194.6 326.3 191.3 C328.7 188.1 331.8 184.6 333.8 182.6 C335.8 180.6 337.0 179.4 338.9 178.8 C340.7 178.2 343.1 178.7 345.1 178.8 C347.1 178.9 348.4 179.2 351.4 179.4 C354.4 179.6 359.9 180.0 363.9 180.1 C367.9 180.2 373.7 179.8 376.5 180.1 C379.2 180.3 379.3 182.1 381.0 181.5 C382.7 180.9 385.3 178.5 387.3 176.5 C389.3 174.5 391.5 171.3 393.6 168.9 C395.6 166.5 397.8 163.6 399.8 161.4 C401.8 159.2 404.1 156.8 406.1 155.1 C408.1 153.4 410.6 152.0 412.4 150.8 C414.2 149.5 416.0 148.6 417.4 147.6 C418.8 146.6 419.7 145.5 421.1 144.5 C422.5 143.5 424.6 142.6 426.2 141.3 C427.8 140.1 429.4 138.6 431.2 137.0 C433.0 135.4 435.4 132.9 437.4 131.3 C439.4 129.7 441.9 127.9 443.7 126.9 C445.5 125.9 447.1 125.6 448.7 125.0 C450.3 124.4 452.1 124.2 453.7 123.2 C455.3 122.2 456.8 120.7 458.8 118.8 C460.8 116.9 464.1 113.6 466.3 111.2 C468.5 108.8 470.5 106.5 472.6 103.7 C474.6 100.9 477.0 96.5 478.8 93.7 C480.6 90.9 482.2 87.8 483.8 86.1 C485.4 84.4 487.0 83.9 488.9 83.0 C490.7 82.1 493.1 81.4 495.1 80.5 C497.1 79.6 499.4 78.4 501.4 77.4 C503.4 76.4 505.9 75.0 507.7 74.2 C509.5 73.4 511.3 72.8 512.7 72.3 C514.1 71.8 515.8 71.3 516.4 71.1" stroke="#ffffff" stroke-width="1.7" fill="none" stroke-linejoin="round" stroke-linecap="round"/><g fill="#c0c0c0"><rect x="229.95" y="345.7" width="2.5" height="16.3"/><rect x="233.56" y="343.9" width="2.5" height="18.1"/><rect x="237.17" y="343.9" width="2.5" height="18.1"/><rect x="240.78" y="336.8" width="2.5" height="25.2"/><rect x="244.39" y="329.5" width="2.5" height="32.5"/><rect x="248.00" y="324.2" width="2.5" height="37.8"/><rect x="251.61" y="326.0" width="2.5" height="36.0"/><rect x="255.22" y="331.2" width="2.5" height="30.8"/><rect x="258.83" y="338.0" width="2.5" height="24.0"/><rect x="262.44" y="346.0" width="2.5" height="16.0"/><rect x="266.05" y="350.2" width="2.5" height="11.8"/><rect x="269.66" y="353.1" width="2.5" height="8.9"/><rect x="273.27" y="357.2" width="2.5" height="4.8"/><rect x="276.88" y="356.5" width="2.5" height="5.5"/><rect x="280.49" y="352.0" width="2.5" height="10.0"/><rect x="284.10" y="348.5" width="2.5" height="13.5"/><rect x="287.71" y="337.7" width="2.5" height="24.3"/><rect x="291.32" y="325.1" width="2.5" height="36.9"/><rect x="294.93" y="313.1" width="2.5" height="48.9"/><rect x="298.54" y="303.2" width="2.5" height="58.8"/><rect x="302.15" y="294.5" width="2.5" height="67.5"/><rect x="305.76" y="291.9" width="2.5" height="70.1"/><rect x="309.37" y="286.7" width="2.5" height="75.3"/><rect x="312.98" y="286.0" width="2.5" height="76.0"/><rect x="316.59" y="286.0" width="2.5" height="76.0"/><rect x="320.20" y="286.0" width="2.5" height="76.0"/><rect x="323.81" y="287.2" width="2.5" height="74.8"/><rect x="327.42" y="288.6" width="2.5" height="73.4"/><rect x="331.03" y="292.4" width="2.5" height="69.6"/><rect x="334.64" y="297.3" width="2.5" height="64.7"/><rect x="338.25" y="302.5" width="2.5" height="59.5"/><rect x="341.86" y="310.9" width="2.5" height="51.1"/><rect x="345.47" y="319.0" width="2.5" height="43.0"/><rect x="349.08" y="327.0" width="2.5" height="35.0"/><rect x="352.69" y="331.2" width="2.5" height="30.8"/><rect x="356.30" y="332.1" width="2.5" height="29.9"/><rect x="359.91" y="333.1" width="2.5" height="28.9"/><rect x="363.52" y="335.2" width="2.5" height="26.8"/><rect x="367.13" y="335.9" width="2.5" height="26.1"/><rect x="370.74" y="335.2" width="2.5" height="26.8"/><rect x="374.35" y="335.9" width="2.5" height="26.1"/><rect x="377.96" y="335.9" width="2.5" height="26.1"/><rect x="381.57" y="335.2" width="2.5" height="26.8"/><rect x="385.18" y="326.0" width="2.5" height="36.0"/><rect x="388.79" y="312.3" width="2.5" height="49.7"/><rect x="392.40" y="303.2" width="2.5" height="58.8"/><rect x="396.01" y="297.0" width="2.5" height="65.0"/><rect x="399.62" y="295.2" width="2.5" height="66.8"/><rect x="403.23" y="300.8" width="2.5" height="61.2"/><rect x="406.84" y="301.5" width="2.5" height="60.5"/><rect x="410.45" y="304.3" width="2.5" height="57.7"/><rect x="414.06" y="309.9" width="2.5" height="52.1"/><rect x="417.67" y="308.1" width="2.5" height="53.9"/><rect x="421.28" y="316.9" width="2.5" height="45.1"/><rect x="424.89" y="322.2" width="2.5" height="39.8"/><rect x="428.50" y="326.0" width="2.5" height="36.0"/><rect x="432.11" y="320.4" width="2.5" height="41.6"/><rect x="435.72" y="310.6" width="2.5" height="51.4"/><rect x="439.33" y="304.3" width="2.5" height="57.7"/><rect x="442.94" y="300.8" width="2.5" height="61.2"/><rect x="446.55" y="296.1" width="2.5" height="65.9"/><rect x="450.16" y="298.2" width="2.5" height="63.8"/><rect x="453.77" y="296.1" width="2.5" height="65.9"/><rect x="457.38" y="292.6" width="2.5" height="69.4"/><rect x="460.99" y="292.6" width="2.5" height="69.4"/><rect x="464.60" y="289.1" width="2.5" height="72.9"/><rect x="468.21" y="288.1" width="2.5" height="73.9"/><rect x="471.82" y="284.4" width="2.5" height="77.6"/><rect x="475.43" y="282.5" width="2.5" height="79.5"/><rect x="479.04" y="281.8" width="2.5" height="80.2"/><rect x="482.65" y="282.5" width="2.5" height="79.5"/><rect x="486.26" y="286.7" width="2.5" height="75.3"/><rect x="489.87" y="290.9" width="2.5" height="71.1"/><rect x="493.48" y="294.5" width="2.5" height="67.5"/><rect x="497.09" y="299.8" width="2.5" height="62.2"/><rect x="500.70" y="304.3" width="2.5" height="57.7"/><rect x="504.31" y="306.1" width="2.5" height="55.9"/><rect x="507.92" y="310.6" width="2.5" height="51.4"/><rect x="511.53" y="313.1" width="2.5" height="48.9"/><rect x="515.14" y="313.1" width="2.5" height="48.9"/></g><path d="M230.9 354.5 C232.4 353.4 237.5 349.9 240.0 347.8 C242.6 345.7 244.8 343.3 247.1 341.5 C249.3 339.7 251.6 337.5 254.1 336.6 C256.5 335.6 259.8 335.2 262.5 335.4 C265.2 335.7 268.2 336.4 270.9 338.0 C273.6 339.5 276.6 343.2 279.3 345.0 C282.0 346.8 285.5 349.0 287.8 349.2 C290.0 349.4 291.1 348.9 293.4 346.4 C295.6 343.9 299.1 338.5 301.8 333.8 C304.5 329.0 307.5 322.1 310.2 316.9 C312.9 311.7 315.9 305.6 318.6 301.5 C321.3 297.3 324.8 293.0 327.1 290.9 C329.3 288.9 330.9 288.7 332.7 288.6 C334.5 288.4 336.3 288.8 338.3 290.0 C340.3 291.1 343.1 293.3 345.3 295.9 C347.5 298.4 350.1 302.7 352.3 305.7 C354.6 308.7 357.1 312.0 359.3 314.8 C361.6 317.6 364.1 320.9 366.4 323.2 C368.6 325.6 371.8 328.2 373.4 329.5 C374.9 330.9 374.7 331.0 376.0 331.6 C377.3 332.3 379.6 333.8 381.6 333.8 C383.6 333.8 386.2 333.2 388.6 331.6 C391.1 330.1 394.4 326.7 397.1 323.9 C399.7 321.1 403.0 316.8 405.5 314.1 C407.9 311.4 410.2 308.8 412.5 307.1 C414.7 305.4 417.5 303.8 419.5 303.6 C421.5 303.4 423.1 304.3 425.1 305.7 C427.1 307.0 430.1 310.7 432.1 312.0 C434.2 313.3 436.0 313.5 437.8 313.8 C439.6 314.1 441.1 314.5 443.4 313.8 C445.6 313.2 449.1 311.6 451.8 309.9 C454.5 308.1 457.7 305.0 460.2 302.9 C462.7 300.7 465.0 298.2 467.2 296.6 C469.5 294.9 472.0 293.5 474.2 292.4 C476.5 291.2 479.2 290.5 481.3 289.5 C483.3 288.6 484.6 287.0 486.9 286.5 C489.1 286.0 492.8 285.7 495.3 286.5 C497.8 287.2 500.1 289.3 502.3 290.9 C504.6 292.6 507.2 294.8 509.3 296.6 C511.5 298.4 514.6 301.3 515.6 302.2" stroke="#f00000" stroke-width="1" fill="none"/><g stroke="#b4b4b4" stroke-width="1" fill="none"><path d="M229.5 274.5 V44.5 H527 V274.5 Z"/><path d="M229.5 362.5 V276.5 H527 V362.5 Z"/></g><path d="M230.7 362 V365.5 M288.5 362 V365.5 M346.2 362 V365.5 M404.0 362 V365.5 M461.7 362 V365.5 " stroke="#c8c8c8" stroke-width="1"/></svg>
<span class="t" style="top:58.80px;font-size:8.5px;line-height:10.5px;color:#fff;letter-spacing:-0.19px;left:532.3px;">1.29005</span>
<span class="t" style="top:88.40px;font-size:8.5px;line-height:10.5px;color:#fff;letter-spacing:-0.19px;left:532.3px;">1.28710</span>
<span class="t" style="top:118.20px;font-size:8.5px;line-height:10.5px;color:#fff;letter-spacing:-0.19px;left:532.3px;">1.28420</span>
<span class="t" style="top:148.10px;font-size:8.5px;line-height:10.5px;color:#fff;letter-spacing:-0.19px;left:532.3px;">1.28125</span>
<span class="t" style="top:177.90px;font-size:8.5px;line-height:10.5px;color:#fff;letter-spacing:-0.19px;left:532.3px;">1.27830</span>
<span class="t" style="top:207.70px;font-size:8.5px;line-height:10.5px;color:#fff;letter-spacing:-0.19px;left:532.3px;">1.27535</span>
<span class="t" style="top:237.50px;font-size:8.5px;line-height:10.5px;color:#fff;letter-spacing:-0.19px;left:532.3px;">1.27245</span>
<span class="t" style="top:267.20px;font-size:8.5px;line-height:10.5px;color:#fff;letter-spacing:-0.19px;left:532.3px;">1.26950</span>
<span class="t" style="top:278.00px;font-size:8.5px;line-height:10.5px;color:#fff;letter-spacing:-0.19px;left:530px;">0.002344</span>
<span class="t" style="top:351.00px;font-size:8.5px;line-height:10.5px;color:#fff;letter-spacing:-0.19px;left:530px;">0.000365</span>
<svg style="left:226px;top:41px" width="343" height="340" viewBox="226 41 343 340"><path d="M527 64.0 h3 M527 93.6 h3 M527 123.4 h3 M527 153.3 h3 M527 183.1 h3 M527 212.9 h3 M527 242.7 h3 M527 272.4 h3 " stroke="#c8c8c8" stroke-width="1"/></svg>
<div style="left:528px;top:54.3px;width:37.7px;height:9.8px;background:#fff;"></div>
<span class="t" style="top:54.30px;font-size:8.5px;line-height:10.5px;color:#000;letter-spacing:-0.19px;left:532.3px;">1.29049</span>
<span class="t" style="top:365.60px;font-size:8.5px;line-height:10.5px;color:#fff;left:229.7px;">4 Mar 2025</span>
<span class="t" style="top:365.60px;font-size:8.5px;line-height:10.5px;color:#fff;left:287.46px;">4 Mar 20:00</span>
<span class="t" style="top:365.60px;font-size:8.5px;line-height:10.5px;color:#fff;left:345.21999999999997px;">5 Mar 04:00</span>
<span class="t" style="top:365.60px;font-size:8.5px;line-height:10.5px;color:#fff;left:402.98px;">5 Mar 12:00</span>
<span class="t" style="top:365.60px;font-size:8.5px;line-height:10.5px;color:#fff;left:460.74px;">5 Mar 20:00</span>
<svg style="left:233px;top:50px" width="7" height="5" viewBox="0 0 7 5"><path d="M0.3 0.5 H6.3 L3.3 4 Z" fill="#fff"/></svg>
<span class="t" style="top:46.60px;font-size:8.5px;line-height:10.5px;color:#fff;left:244px;">GBPUSD.s,M30  1.28947 1.29070 1.28919 1.29049</span>
<span class="t" style="top:48.91px;font-size:7.9px;line-height:9.9px;color:#fff;right:772.00px;">多功能挂单【无时间限制版本】</span>
<svg style="left:511.5px;top:47.5px" width="12" height="12" viewBox="0 0 12 12"><circle cx="6" cy="6" r="4.9" fill="none" stroke="#fff" stroke-width="1"/><circle cx="4.3" cy="4.6" r="0.8" fill="#fff"/><circle cx="7.7" cy="4.6" r="0.8" fill="#fff"/><path d="M3.4 7 Q6 9.6 8.6 7" stroke="#fff" stroke-width="1" fill="none"/></svg>
<div style="left:239.5px;top:54.5px;width:90px;height:23px;box-sizing:border-box;background:#f0f0f0;border:1px solid #c4c4c4;box-shadow:inset 1px 1px 0 #fcfcfc;"></div>
<span class="t" style="left:245.0px;top:57.0px;width:49.5px;overflow:hidden;font-size:13px;line-height:18px;letter-spacing:1.4px;color:#4a4a4a;">多功能挂</span>
<div style="left:296.5px;top:69.0px;width:9px;height:1px;background:#777;"></div>
<svg style="left:313.5px;top:61.5px" width="9" height="9" viewBox="0 0 9 9"><path d="M1.2 1.2 L7.8 7.8 M7.8 1.2 L1.2 7.8" stroke="#9a9a9a" stroke-width="1.8"/></svg>
<span class="t" style="top:279.50px;font-size:8.5px;line-height:10.5px;color:#fff;left:234.4px;">MACD(12,26,9) 0.001509 0.001768</span>
<div style="left:576px;top:12px;width:361px;height:378px;box-sizing:border-box;border:2px solid #6e6e6e;border-bottom-width:1px;border-top-width:1px;border-radius:7px 7px 0 0;background:linear-gradient(180deg,#bac9dc 0px,#bfcee0 7px,#c8d5e6 16px,#d6e1ef 24px,#dee8f4 29px,#d8e4f2 60px,#d6e3f1 100%);box-shadow:inset 1px 1px 0 #e6eef8,inset -1px 0 0 #e6eef8;"></div>
<svg style="left:587px;top:24px" width="15" height="14" viewBox="0 0 15 14"><rect x="0.7" y="0.7" width="10.5" height="8" rx="1" fill="#fff" stroke="#3c7fe6" stroke-width="1.3"/><path d="M2.5 3.5 L4.5 2.5 L6 4.5" stroke="#3c7fe6" fill="none" stroke-width="0.9"/>
<rect x="3.7" y="5.2" width="9.3" height="7" rx="0.8" fill="#fff" stroke="#3c7fe6" stroke-width="1.3"/><path d="M5.3 8.4 L6.8 10 L8.2 8 L9.6 10 L11 8" stroke="#3c7fe6" fill="none" stroke-width="0.9"/></svg>
<span class="t" style="top:24.47px;font-size:11.5px;line-height:13.5px;color:#a6a6a6;letter-spacing:-0.58px;left:605px;">EURUSD.s,H1</span>
<div style="left:837px;top:22px;width:28.2px;height:16px;box-sizing:border-box;border:1px solid #8b9cb6;border-radius:2px;background:linear-gradient(180deg,#dde7f3,#cbd8e9 50%,#c3d1e3);box-shadow:inset 0 0 0 1px rgba(255,255,255,.55);"></div>
<svg style="left:845px;top:29px" width="12" height="6" viewBox="0 0 12 6"><rect x="1" y="1" width="9.5" height="3" rx="0.8" fill="#fff" stroke="#5a5a5a" stroke-width="0.9"/></svg>
<div style="left:867.5px;top:22px;width:28.2px;height:16px;box-sizing:border-box;border:1px solid #8b9cb6;border-radius:2px;background:linear-gradient(180deg,#dde7f3,#cbd8e9 50%,#c3d1e3);box-shadow:inset 0 0 0 1px rgba(255,255,255,.55);"></div>
<svg style="left:875.5px;top:25px" width="12" height="10" viewBox="0 0 12 10"><rect x="1.2" y="1.2" width="9.5" height="7.2" rx="1" fill="#fff" stroke="#5a5a5a" stroke-width="0.9"/><rect x="3.6" y="4" width="4.7" height="2" fill="#c9d6e8" stroke="#5a5a5a" stroke-width="0.8"/></svg>
<div style="left:898px;top:22px;width:28.2px;height:16px;box-sizing:border-box;border:1px solid #8b9cb6;border-radius:2px;background:linear-gradient(180deg,#dde7f3,#cbd8e9 50%,#c3d1e3);box-shadow:inset 0 0 0 1px rgba(255,255,255,.55);"></div>
<svg style="left:906px;top:25px" width="12" height="10" viewBox="0 0 12 10"><path d="M2.2 2 L9.8 8 M9.8 2 L2.2 8" stroke="#555" stroke-width="3.6" stroke-linecap="round"/><path d="M2.2 2 L9.8 8 M9.8 2 L2.2 8" stroke="#fff" stroke-width="2.1" stroke-linecap="round"/></svg>
<div style="left:585px;top:40px;width:344px;height:343px;background:#fff;"></div>
<div style="left:584px;top:40px;width:1px;height:342px;background:#6a7078;"></div>
<div style="left:585px;top:40px;width:342px;height:341px;background:#000;"></div>
<div style="left:585px;top:40px;width:342px;height:1px;background:#50555c;"></div>
<svg style="left:585px;top:41px" width="343" height="340" viewBox="585 41 343 340"><g stroke="#009c00" stroke-width="1.05" stroke-dasharray="8.2 5.4 3 5.1" fill="none"><path d="M589 117.7 H886"/><path d="M589 123.2 H886"/><path d="M589 128.8 H886"/><path d="M589 134.6 H886"/><path d="M589 140.2 H886"/><path d="M589 145.7 H886"/><path d="M589 151.3 H886"/><path d="M589 157.3 H886"/><path d="M589 162.9 H886"/><path d="M589 168.3 H886"/><path d="M589 173.8 H886"/></g><g stroke="#009c00" stroke-width="1.05" fill="none"><path d="M589 117.7 H661.4"/><path d="M589 123.2 H661.4"/><path d="M589 128.8 H661.4"/><path d="M589 134.6 H661.4"/><path d="M589 140.2 H661.4"/><path d="M589 145.7 H661.4"/><path d="M589 151.3 H661.4"/><path d="M589 157.3 H661.4"/><path d="M589 162.9 H661.4"/><path d="M589 168.3 H661.4"/></g>
</svg>
<span class="t" style="top:107.30px;font-size:8.5px;line-height:10.5px;color:#fff;left:595.3px;">#37552549 buy 1.00</span>
<span class="t" style="top:112.80px;font-size:8.5px;line-height:10.5px;color:#fff;left:595.3px;">#37552548 buy 1.00</span>
<span class="t" style="top:118.40px;font-size:8.5px;line-height:10.5px;color:#fff;left:595.3px;">#37552547 buy 1.00</span>
<span class="t" style="top:124.20px;font-size:8.5px;line-height:10.5px;color:#fff;left:595.3px;">#37552546 buy 1.00</span>
<span class="t" style="top:129.80px;font-size:8.5px;line-height:10.5px;color:#fff;left:595.3px;">#37552545 buy 1.00</span>
<span class="t" style="top:135.30px;font-size:8.5px;line-height:10.5px;color:#fff;left:595.3px;">#37552544 buy 1.00</span>
<span class="t" style="top:140.90px;font-size:8.5px;line-height:10.5px;color:#fff;left:595.3px;">#37552543 buy 1.00</span>
<span class="t" style="top:146.90px;font-size:8.5px;line-height:10.5px;color:#fff;left:595.3px;">#37552542 buy 1.00</span>
<span class="t" style="top:152.50px;font-size:8.5px;line-height:10.5px;color:#fff;left:595.3px;">#37552541 buy 1.00</span>
<span class="t" style="top:157.90px;font-size:8.5px;line-height:10.5px;color:#fff;left:595.3px;">#37552540 buy 1.00</span>
<span class="t" style="top:163.40px;font-size:8.5px;line-height:10.5px;color:#fff;left:595.3px;">#37552539 buy 1.00</span>
<svg style="left:585px;top:41px" width="343" height="340" viewBox="585 41 343 340"><g stroke-width="1" fill="none"><path d="M589.7 297.6 V316.5" stroke="#ffffff"/><path d="M593.3 309.6 V319.0" stroke="#ff0000"/><path d="M596.9 307.7 V316.5" stroke="#ff0000"/><path d="M600.5 308.3 V312.7" stroke="#ff0000"/><path d="M604.1 292.6 V295.8" stroke="#ffffff"/><path d="M607.8 283.2 V296.4" stroke="#ff0000"/><path d="M611.4 283.2 V294.5" stroke="#ffffff"/><path d="M615.0 282.0 V291.4" stroke="#ff0000"/><path d="M618.6 282.0 V287.0" stroke="#ff0000"/><path d="M622.2 283.2 V290.8" stroke="#ffffff"/><path d="M625.8 283.2 V287.6" stroke="#ff0000"/><path d="M629.4 284.5 V288.9" stroke="#ffffff"/><path d="M633.0 286.4 V290.8" stroke="#ffffff"/><path d="M636.6 289.5 V293.3" stroke="#ffffff"/><path d="M640.2 291.4 V302.7" stroke="#9a9a9a"/><path d="M643.9 278.8 V295.8" stroke="#ff0000"/><path d="M647.5 270.1 V281.3" stroke="#ff0000"/><path d="M651.1 262.5 V273.2" stroke="#ff0000"/><path d="M654.7 251.9 V266.3" stroke="#ff0000"/><path d="M658.3 252.1 V265.3" stroke="#ff0000"/><path d="M661.9 243.9 V255.9" stroke="#ff0000"/><path d="M665.5 236.4 V250.8" stroke="#ff0000"/><path d="M669.1 237.7 V249.0" stroke="#ff0000"/><path d="M672.7 240.2 V246.5" stroke="#ffffff"/><path d="M676.3 237.1 V249.6" stroke="#ffffff"/><path d="M680.0 242.1 V254.6" stroke="#ffffff"/><path d="M683.6 248.3 V255.9" stroke="#ff0000"/><path d="M687.2 242.7 V249.0" stroke="#ff0000"/><path d="M690.8 244.6 V248.3" stroke="#ff0000"/><path d="M694.4 242.7 V247.1" stroke="#ffffff"/><path d="M698.0 244.6 V247.7" stroke="#ff0000"/><path d="M701.6 240.8 V247.7" stroke="#ff0000"/><path d="M705.2 244.6 V250.8" stroke="#ffffff"/><path d="M708.8 247.7 V254.0" stroke="#ffffff"/><path d="M712.4 250.2 V255.9" stroke="#ff0000"/><path d="M716.1 249.0 V255.2" stroke="#ff0000"/><path d="M719.7 244.6 V252.1" stroke="#ff0000"/><path d="M723.3 238.3 V249.0" stroke="#ff0000"/><path d="M726.9 225.8 V244.6" stroke="#ff0000"/><path d="M730.5 223.9 V235.2" stroke="#ffffff"/><path d="M734.1 227.0 V238.3" stroke="#ffffff"/><path d="M737.7 213.2 V233.9" stroke="#ff0000"/><path d="M741.3 206.3 V218.9" stroke="#ff0000"/><path d="M744.9 205.1 V222.0" stroke="#ffffff"/><path d="M748.5 211.3 V227.6" stroke="#ffffff"/><path d="M752.2 222.6 V242.1" stroke="#ff0000"/><path d="M755.8 216.4 V224.5" stroke="#ff0000"/><path d="M759.4 213.9 V221.4" stroke="#ff0000"/><path d="M763.0 187.5 V217.8" stroke="#ff0000"/><path d="M766.6 180.8 V190.9" stroke="#ff0000"/><path d="M770.2 168.9 V184.0" stroke="#ff0000"/><path d="M773.8 167.1 V179.0" stroke="#ff0000"/><path d="M777.4 167.1 V173.9" stroke="#ffffff"/><path d="M781.0 161.4 V172.7" stroke="#ff0000"/><path d="M784.6 167.1 V176.5" stroke="#ffffff"/><path d="M788.2 167.1 V177.7" stroke="#ffffff"/><path d="M791.9 176.5 V181.5" stroke="#ffffff"/><path d="M795.5 171.4 V182.1" stroke="#ff0000"/><path d="M799.1 168.3 V174.6" stroke="#ff0000"/><path d="M802.7 163.9 V172.1" stroke="#ff0000"/><path d="M806.3 160.8 V168.9" stroke="#ff0000"/><path d="M809.9 140.1 V165.8" stroke="#ff0000"/><path d="M813.5 126.3 V150.8" stroke="#ff0000"/><path d="M817.1 113.8 V129.4" stroke="#ff0000"/><path d="M820.7 116.9 V136.3" stroke="#ffffff"/><path d="M824.4 127.6 V140.7" stroke="#ffffff"/><path d="M828.0 118.2 V139.5" stroke="#ff0000"/><path d="M831.6 113.8 V135.1" stroke="#ff0000"/><path d="M835.2 83.0 V119.4" stroke="#ff0000"/><path d="M838.8 86.8 V103.7" stroke="#ff0000"/><path d="M842.4 77.4 V93.0" stroke="#ff0000"/><path d="M846.0 76.7 V91.8" stroke="#ff0000"/><path d="M849.6 76.7 V91.2" stroke="#ffffff"/><path d="M853.2 75.5 V88.0" stroke="#ff0000"/><path d="M856.8 72.3 V77.4" stroke="#ff0000"/><path d="M860.5 73.9 V79.9" stroke="#ffffff"/><path d="M864.1 75.5 V78.6" stroke="#ff0000"/><path d="M867.7 73.0 V78.6" stroke="#ff0000"/><path d="M871.3 68.6 V77.4" stroke="#ff0000"/><path d="M874.9 59.2 V74.9" stroke="#ff0000"/></g><rect x="588.35" y="297.6" width="2.7" height="18.8" fill="#ffffff"/><rect x="591.96" y="313.3" width="2.7" height="2.5" fill="#ff0000"/><rect x="595.57" y="308.9" width="2.7" height="5.0" fill="#ff0000"/><rect x="599.18" y="310.2" width="2.7" height="1.3" fill="#ff0000"/><rect x="602.79" y="293.3" width="2.7" height="1.3" fill="#ffffff"/><rect x="606.40" y="287.6" width="2.7" height="6.3" fill="#ff0000"/><rect x="610.01" y="288.2" width="2.7" height="2.5" fill="#ffffff"/><rect x="613.62" y="283.9" width="2.7" height="6.3" fill="#ff0000"/><rect x="617.23" y="283.2" width="2.7" height="2.5" fill="#ff0000"/><rect x="620.84" y="283.9" width="2.7" height="2.5" fill="#ffffff"/><rect x="624.45" y="285.1" width="2.7" height="1.3" fill="#ff0000"/><rect x="628.06" y="285.7" width="2.7" height="1.9" fill="#ffffff"/><rect x="631.67" y="287.0" width="2.7" height="3.1" fill="#ffffff"/><rect x="635.28" y="290.1" width="2.7" height="2.5" fill="#ffffff"/><rect x="638.89" y="292.6" width="2.7" height="1.9" fill="#fff"/><rect x="642.50" y="279.5" width="2.7" height="15.0" fill="#ff0000"/><rect x="646.11" y="271.3" width="2.7" height="9.4" fill="#ff0000"/><rect x="649.72" y="263.8" width="2.7" height="8.8" fill="#ff0000"/><rect x="653.33" y="253.8" width="2.7" height="11.9" fill="#ff0000"/><rect x="656.94" y="254.6" width="2.7" height="9.4" fill="#ff0000"/><rect x="660.55" y="247.7" width="2.7" height="7.5" fill="#ff0000"/><rect x="664.16" y="247.7" width="2.7" height="2.5" fill="#ff0000"/><rect x="667.77" y="238.9" width="2.7" height="9.4" fill="#ff0000"/><rect x="671.38" y="240.8" width="2.7" height="3.1" fill="#ffffff"/><rect x="674.99" y="243.9" width="2.7" height="2.5" fill="#ffffff"/><rect x="678.60" y="245.8" width="2.7" height="5.6" fill="#ffffff"/><rect x="682.21" y="250.2" width="2.7" height="5.0" fill="#ff0000"/><rect x="685.82" y="245.2" width="2.7" height="3.1" fill="#ff0000"/><rect x="689.43" y="245.2" width="2.7" height="2.5" fill="#ff0000"/><rect x="693.04" y="244.6" width="2.7" height="1.9" fill="#ffffff"/><rect x="696.65" y="245.2" width="2.7" height="1.9" fill="#ff0000"/><rect x="700.26" y="245.2" width="2.7" height="1.9" fill="#ff0000"/><rect x="703.87" y="246.5" width="2.7" height="3.8" fill="#ffffff"/><rect x="707.48" y="248.3" width="2.7" height="5.0" fill="#ffffff"/><rect x="711.09" y="250.8" width="2.7" height="2.5" fill="#ff0000"/><rect x="714.70" y="249.6" width="2.7" height="3.1" fill="#ff0000"/><rect x="718.31" y="247.7" width="2.7" height="1.9" fill="#ff0000"/><rect x="721.92" y="242.7" width="2.7" height="5.6" fill="#ff0000"/><rect x="725.53" y="227.6" width="2.7" height="16.3" fill="#ff0000"/><rect x="729.14" y="228.3" width="2.7" height="5.0" fill="#ffffff"/><rect x="732.75" y="230.8" width="2.7" height="2.5" fill="#ffffff"/><rect x="736.36" y="213.9" width="2.7" height="19.4" fill="#ff0000"/><rect x="739.97" y="208.2" width="2.7" height="7.5" fill="#ff0000"/><rect x="743.58" y="208.8" width="2.7" height="8.8" fill="#ffffff"/><rect x="747.19" y="216.4" width="2.7" height="10.7" fill="#ffffff"/><rect x="750.80" y="223.3" width="2.7" height="5.0" fill="#ff0000"/><rect x="754.41" y="220.1" width="2.7" height="3.8" fill="#ff0000"/><rect x="758.02" y="215.7" width="2.7" height="5.0" fill="#ff0000"/><rect x="761.63" y="188.1" width="2.7" height="28.8" fill="#ff0000"/><rect x="765.24" y="182.1" width="2.7" height="6.3" fill="#ff0000"/><rect x="768.85" y="177.7" width="2.7" height="5.6" fill="#ff0000"/><rect x="772.46" y="167.7" width="2.7" height="10.7" fill="#ff0000"/><rect x="776.07" y="167.9" width="2.7" height="4.8" fill="#ffffff"/><rect x="779.68" y="170.2" width="2.7" height="2.3" fill="#ff0000"/><rect x="783.29" y="168.9" width="2.7" height="2.5" fill="#ffffff"/><rect x="786.90" y="170.2" width="2.7" height="5.6" fill="#ffffff"/><rect x="790.51" y="177.1" width="2.7" height="3.8" fill="#ffffff"/><rect x="794.12" y="172.1" width="2.7" height="9.4" fill="#ff0000"/><rect x="797.73" y="170.2" width="2.7" height="3.8" fill="#ff0000"/><rect x="801.34" y="165.2" width="2.7" height="6.3" fill="#ff0000"/><rect x="804.95" y="163.9" width="2.7" height="1.9" fill="#ff0000"/><rect x="808.56" y="140.7" width="2.7" height="24.5" fill="#ff0000"/><rect x="812.17" y="126.9" width="2.7" height="15.0" fill="#ff0000"/><rect x="815.78" y="120.0" width="2.7" height="8.8" fill="#ff0000"/><rect x="819.39" y="120.0" width="2.7" height="8.8" fill="#ffffff"/><rect x="823.00" y="128.2" width="2.7" height="10.7" fill="#ffffff"/><rect x="826.61" y="128.8" width="2.7" height="10.0" fill="#ff0000"/><rect x="830.22" y="116.9" width="2.7" height="13.2" fill="#ff0000"/><rect x="833.83" y="87.4" width="2.7" height="31.3" fill="#ff0000"/><rect x="837.44" y="89.3" width="2.7" height="1.3" fill="#ff0000"/><rect x="841.05" y="88.0" width="2.7" height="1.9" fill="#ff0000"/><rect x="844.66" y="77.4" width="2.7" height="13.2" fill="#ff0000"/><rect x="848.27" y="78.0" width="2.7" height="8.8" fill="#ffffff"/><rect x="851.88" y="76.1" width="2.7" height="10.0" fill="#ff0000"/><rect x="855.49" y="74.2" width="2.7" height="2.5" fill="#ff0000"/><rect x="859.10" y="74.2" width="2.7" height="3.8" fill="#ffffff"/><rect x="862.71" y="76.1" width="2.7" height="1.9" fill="#ff0000"/><rect x="866.32" y="73.6" width="2.7" height="2.5" fill="#ff0000"/><rect x="869.93" y="73.6" width="2.7" height="1.5" fill="#ff0000"/><rect x="873.54" y="59.8" width="2.7" height="14.4" fill="#ff0000"/><path d="M589.4 297.0 C589.9 297.4 591.2 298.8 592.5 299.5 C593.8 300.2 594.7 301.1 597.5 301.4 C600.3 301.7 606.9 301.7 610.1 301.4 C613.3 301.1 615.6 300.6 617.6 299.5 C619.6 298.4 620.8 296.0 622.6 294.5 C624.4 293.0 627.1 291.3 628.9 290.1 C630.7 288.9 632.5 287.4 633.9 287.0 C635.3 286.6 636.3 287.5 637.7 287.6 C639.1 287.7 641.1 288.2 642.7 287.6 C644.3 287.0 645.7 285.5 647.7 283.9 C649.7 282.3 652.8 279.8 655.2 277.6 C657.6 275.4 660.3 273.1 662.7 270.1 C665.2 267.1 668.3 261.5 670.3 258.8 C672.3 256.1 673.9 254.4 675.3 253.1 C676.7 251.9 677.1 251.6 678.8 250.8 C680.6 250.1 684.1 249.0 686.3 248.3 C688.6 247.6 690.4 246.9 692.6 246.5 C694.8 246.1 697.7 245.7 700.1 245.8 C702.5 246.0 703.7 247.5 707.7 247.5 C711.7 247.5 721.2 246.5 725.2 245.8 C729.2 245.2 730.7 244.6 732.7 243.3 C734.7 242.0 735.8 239.8 737.8 237.7 C739.8 235.6 742.9 232.3 745.3 230.2 C747.7 228.1 750.6 226.1 752.8 224.5 C755.0 222.9 757.3 221.8 759.1 220.1 C760.9 218.4 762.3 216.1 764.1 213.9 C765.9 211.6 768.2 209.3 770.4 206.3 C772.6 203.3 775.5 198.4 777.9 195.0 C780.3 191.7 783.0 188.0 785.2 185.2 C787.3 182.5 789.4 179.6 791.4 177.7 C793.4 175.8 795.5 174.3 797.7 173.3 C799.9 172.3 803.2 172.5 805.2 171.4 C807.2 170.3 808.4 168.6 810.2 166.4 C812.0 164.2 814.5 160.5 816.5 157.6 C818.5 154.8 820.8 151.5 822.8 148.9 C824.8 146.3 827.0 144.6 829.0 141.3 C831.1 138.1 833.3 132.8 835.3 128.8 C837.3 124.8 840.0 119.5 841.6 116.3 C843.2 113.1 843.9 110.7 845.3 108.7 C846.7 106.7 848.8 106.1 850.4 103.7 C852.0 101.3 853.8 96.7 855.4 93.7 C857.0 90.7 859.0 86.9 860.4 84.9 C861.8 82.9 862.5 82.1 864.2 81.1 C865.8 80.1 868.7 79.2 870.4 78.6 C872.1 78.0 874.1 77.6 874.8 77.4" stroke="#ff0000" stroke-width="1.7" fill="none" stroke-linejoin="round" stroke-linecap="round"/><path d="M589.4 297.4 C589.9 297.6 590.2 298.2 592.5 298.7 C594.8 299.1 600.0 300.2 603.8 300.2 C607.6 300.1 613.3 299.0 616.3 298.3 C619.4 297.6 620.4 296.8 622.6 295.8 C624.8 294.8 627.7 292.9 630.1 292.0 C632.5 291.1 635.7 290.5 637.7 290.1 C639.7 289.7 641.1 290.3 642.7 289.5 C644.3 288.7 645.7 286.8 647.7 285.1 C649.7 283.4 652.8 280.9 655.2 278.8 C657.6 276.7 660.3 274.5 662.7 271.9 C665.2 269.4 667.9 265.8 670.3 263.2 C672.7 260.6 675.6 257.5 677.8 255.6 C680.0 253.8 681.7 252.6 683.8 251.5 C686.0 250.3 689.0 249.1 691.4 248.3 C693.8 247.5 696.3 246.6 698.9 246.5 C701.5 246.4 703.5 247.7 707.7 247.7 C711.9 247.7 721.2 247.1 725.2 246.5 C729.2 245.9 730.3 245.6 732.7 243.9 C735.2 242.3 737.9 238.4 740.3 236.4 C742.7 234.4 745.4 232.9 747.8 231.4 C750.2 229.9 753.1 228.6 755.3 227.0 C757.5 225.4 759.6 223.7 761.6 221.4 C763.6 219.1 765.6 215.6 767.9 212.6 C770.1 209.6 773.0 206.0 775.4 202.6 C777.8 199.2 780.7 193.9 782.9 191.3 C785.1 188.7 787.0 188.5 788.9 186.5 C790.9 184.5 793.2 181.0 795.2 179.0 C797.2 177.0 799.7 175.1 801.5 173.9 C803.3 172.8 804.7 173.5 806.5 172.1 C808.3 170.7 810.9 167.3 812.7 165.2 C814.5 163.1 816.0 161.0 817.8 158.9 C819.6 156.8 822.0 154.2 824.0 152.0 C826.0 149.8 828.5 147.8 830.3 145.1 C832.1 142.4 833.5 138.9 835.3 135.1 C837.1 131.3 840.0 124.7 841.6 121.3 C843.2 117.9 843.9 116.1 845.3 113.7 C846.7 111.3 848.8 108.6 850.4 106.2 C852.0 103.8 853.8 100.9 855.4 98.7 C857.0 96.5 858.8 94.6 860.4 92.4 C862.0 90.2 863.8 86.9 865.4 84.9 C867.0 82.9 868.9 80.9 870.4 79.9 C871.9 78.8 874.1 78.5 874.8 78.2" stroke="#00f000" stroke-width="1.7" fill="none" stroke-linejoin="round" stroke-linecap="round"/><path d="M589.4 297.4 C589.9 297.6 590.2 298.2 592.5 298.7 C594.8 299.1 600.0 300.2 603.8 300.2 C607.6 300.1 612.9 298.9 616.3 298.3 C619.8 297.7 622.5 297.2 625.1 296.4 C627.7 295.6 630.4 294.1 632.6 293.3 C634.9 292.5 637.1 292.0 638.9 291.4 C640.7 290.8 642.3 290.5 643.9 289.5 C645.5 288.5 646.9 286.7 648.9 285.1 C651.0 283.5 654.1 281.3 656.5 279.5 C658.9 277.7 661.6 275.9 664.0 273.8 C666.4 271.7 669.1 268.5 671.5 266.3 C673.9 264.1 676.5 262.2 679.0 260.0 C681.6 257.9 685.0 254.4 687.6 252.7 C690.2 251.1 692.7 250.4 695.1 249.6 C697.5 248.8 700.2 248.0 702.6 247.7 C705.1 247.4 706.6 247.8 710.2 247.7 C713.8 247.6 721.6 247.6 725.2 247.1 C728.8 246.6 730.3 245.9 732.7 244.6 C735.2 243.3 737.9 240.6 740.3 238.9 C742.7 237.2 745.4 235.4 747.8 233.9 C750.2 232.4 753.1 231.1 755.3 229.5 C757.5 227.9 759.6 226.0 761.6 223.9 C763.6 221.8 765.6 219.4 767.9 216.4 C770.1 213.4 772.6 208.9 775.4 205.1 C778.2 201.3 782.4 195.5 785.4 192.5 C788.4 189.6 791.6 188.6 793.9 186.5 C796.3 184.4 798.2 181.6 800.2 179.6 C802.2 177.6 804.7 175.8 806.5 173.9 C808.3 172.1 809.7 170.5 811.5 168.3 C813.3 166.1 815.8 162.5 817.8 160.2 C819.8 157.8 822.0 155.7 824.0 153.9 C826.0 152.1 828.5 150.9 830.3 148.9 C832.1 146.9 833.5 144.6 835.3 141.3 C837.1 138.1 839.6 132.6 841.6 128.8 C843.6 125.0 846.6 119.7 847.9 117.5 C849.1 115.3 848.1 116.8 849.1 115.0 C850.1 113.2 852.5 108.6 854.1 106.2 C855.7 103.8 857.5 101.9 859.1 99.9 C860.7 97.9 862.5 95.5 864.2 93.7 C865.8 91.9 867.8 90.3 869.2 88.6 C870.6 87.0 872.0 84.8 872.9 83.6 C873.8 82.5 874.5 81.7 874.8 81.4" stroke="#40e0d0" stroke-width="1.7" fill="none" stroke-linejoin="round" stroke-linecap="round"/><path d="M589.4 297.0 C589.9 297.2 589.6 298.1 592.5 298.3 C595.4 298.5 603.6 298.5 607.6 298.3 C611.6 298.1 614.4 297.5 617.6 297.0 C620.8 296.5 624.0 295.5 627.6 295.1 C631.2 294.7 637.6 294.8 640.2 294.5 C642.8 294.2 642.3 294.6 643.9 293.3 C645.5 292.0 648.0 288.5 650.2 286.4 C652.4 284.3 655.3 281.9 657.7 280.1 C660.1 278.3 662.8 276.7 665.3 275.1 C667.7 273.5 670.4 271.7 672.8 270.1 C675.2 268.5 677.9 266.8 680.3 265.0 C682.7 263.3 685.9 261.1 687.8 259.4 C689.8 257.7 690.8 256.0 692.6 254.6 C694.4 253.2 696.9 251.8 698.9 250.8 C700.9 249.8 702.9 248.8 705.2 248.3 C707.4 247.8 709.5 247.8 712.7 247.7 C715.9 247.6 722.0 248.1 725.2 247.7 C728.4 247.3 730.3 246.4 732.7 245.2 C735.2 244.0 737.9 241.7 740.3 240.2 C742.7 238.7 745.4 236.9 747.8 235.8 C750.2 234.7 753.1 234.4 755.3 233.3 C757.5 232.2 759.6 231.0 761.6 228.9 C763.6 226.8 765.6 223.3 767.9 220.1 C770.1 216.9 772.6 212.7 775.4 208.8 C778.2 205.0 781.6 199.7 785.4 196.3 C789.2 192.9 795.8 190.3 798.9 187.7 C802.1 185.2 803.2 182.8 805.2 180.2 C807.2 177.6 809.5 174.3 811.5 171.4 C813.5 168.6 816.0 164.8 817.8 162.7 C819.6 160.6 821.2 159.5 822.8 158.3 C824.4 157.1 826.0 156.6 827.8 155.1 C829.6 153.6 832.3 151.3 834.1 148.9 C835.9 146.5 837.3 143.5 839.1 140.1 C840.9 136.7 843.3 131.2 845.3 127.6 C847.4 123.9 850.4 119.5 851.6 117.5 C852.8 115.5 851.9 116.8 852.9 115.0 C853.9 113.2 856.3 108.6 857.9 106.2 C859.5 103.8 861.3 101.7 862.9 99.9 C864.5 98.1 866.5 96.2 867.9 94.9 C869.3 93.6 870.6 92.8 871.7 91.8 C872.8 90.7 874.3 88.9 874.8 88.4" stroke="#ffffff" stroke-width="1.7" fill="none" stroke-linejoin="round" stroke-linecap="round"/><g fill="#c0c0c0"><rect x="588.45" y="354.8" width="2.5" height="5.4"/><rect x="592.06" y="354.8" width="2.5" height="5.4"/><rect x="595.67" y="354.8" width="2.5" height="5.4"/><rect x="599.28" y="354.8" width="2.5" height="5.1"/><rect x="602.89" y="354.8" width="2.5" height="4.8"/><rect x="606.50" y="354.8" width="2.5" height="4.1"/><rect x="610.11" y="354.8" width="2.5" height="3.5"/><rect x="613.72" y="354.8" width="2.5" height="1.2"/><rect x="617.33" y="354.8" width="2.5" height="0.8"/><rect x="642.60" y="353.9" width="2.5" height="0.9"/><rect x="646.21" y="353.0" width="2.5" height="1.8"/><rect x="649.82" y="351.5" width="2.5" height="3.2"/><rect x="653.43" y="350.5" width="2.5" height="4.2"/><rect x="657.04" y="348.9" width="2.5" height="5.9"/><rect x="660.65" y="348.0" width="2.5" height="6.8"/><rect x="664.26" y="347.0" width="2.5" height="7.8"/><rect x="667.87" y="346.1" width="2.5" height="8.6"/><rect x="671.48" y="345.1" width="2.5" height="9.6"/><rect x="675.09" y="345.1" width="2.5" height="9.6"/><rect x="678.70" y="345.1" width="2.5" height="9.6"/><rect x="682.31" y="345.8" width="2.5" height="9.0"/><rect x="685.92" y="346.1" width="2.5" height="8.6"/><rect x="689.53" y="346.4" width="2.5" height="8.4"/><rect x="693.14" y="346.4" width="2.5" height="8.4"/><rect x="696.75" y="346.4" width="2.5" height="8.4"/><rect x="700.36" y="346.4" width="2.5" height="8.4"/><rect x="703.97" y="346.4" width="2.5" height="8.4"/><rect x="707.58" y="346.4" width="2.5" height="8.4"/><rect x="711.19" y="347.9" width="2.5" height="6.9"/><rect x="714.80" y="348.2" width="2.5" height="6.5"/><rect x="718.41" y="348.2" width="2.5" height="6.5"/><rect x="722.02" y="348.0" width="2.5" height="6.8"/><rect x="725.63" y="347.9" width="2.5" height="6.9"/><rect x="729.24" y="347.6" width="2.5" height="7.1"/><rect x="732.85" y="347.0" width="2.5" height="7.8"/><rect x="736.46" y="346.1" width="2.5" height="8.6"/><rect x="740.07" y="345.1" width="2.5" height="9.6"/><rect x="743.68" y="345.1" width="2.5" height="9.6"/><rect x="747.29" y="345.1" width="2.5" height="9.6"/><rect x="750.90" y="346.0" width="2.5" height="8.8"/><rect x="754.51" y="346.4" width="2.5" height="8.4"/><rect x="758.12" y="346.4" width="2.5" height="8.4"/><rect x="761.73" y="344.2" width="2.5" height="10.5"/><rect x="765.34" y="342.2" width="2.5" height="12.5"/><rect x="768.95" y="341.0" width="2.5" height="13.8"/><rect x="772.56" y="339.5" width="2.5" height="15.2"/><rect x="776.17" y="338.6" width="2.5" height="16.1"/><rect x="779.78" y="337.6" width="2.5" height="17.1"/><rect x="783.39" y="337.6" width="2.5" height="17.1"/><rect x="787.00" y="338.6" width="2.5" height="16.1"/><rect x="790.61" y="338.6" width="2.5" height="16.1"/><rect x="794.22" y="339.5" width="2.5" height="15.2"/><rect x="797.83" y="338.9" width="2.5" height="15.9"/><rect x="801.44" y="338.9" width="2.5" height="15.9"/><rect x="805.05" y="338.9" width="2.5" height="15.9"/><rect x="808.66" y="338.9" width="2.5" height="15.9"/><rect x="812.27" y="337.2" width="2.5" height="17.5"/><rect x="815.88" y="336.1" width="2.5" height="18.6"/><rect x="819.49" y="335.1" width="2.5" height="19.6"/><rect x="823.10" y="336.1" width="2.5" height="18.6"/><rect x="826.71" y="336.1" width="2.5" height="18.6"/><rect x="830.32" y="335.1" width="2.5" height="19.6"/><rect x="833.93" y="333.2" width="2.5" height="21.5"/><rect x="837.54" y="332.2" width="2.5" height="22.5"/><rect x="841.15" y="331.1" width="2.5" height="23.6"/><rect x="844.76" y="330.4" width="2.5" height="24.4"/><rect x="848.37" y="330.4" width="2.5" height="24.4"/><rect x="851.98" y="329.5" width="2.5" height="25.2"/><rect x="855.59" y="329.5" width="2.5" height="25.2"/><rect x="859.20" y="330.4" width="2.5" height="24.4"/><rect x="862.81" y="330.4" width="2.5" height="24.4"/><rect x="866.42" y="330.4" width="2.5" height="24.4"/><rect x="870.03" y="331.1" width="2.5" height="23.6"/><rect x="873.64" y="332.2" width="2.5" height="22.5"/></g><path d="M589.4 359.5 C592.3 359.5 602.2 359.6 607.5 359.2 C612.8 358.9 617.3 357.7 622.5 357.0 C627.7 356.3 634.8 355.8 640.0 355.1 C645.2 354.5 651.0 353.6 655.0 353.0 C659.0 352.4 662.4 351.9 665.0 351.4 C667.6 350.9 669.6 350.3 671.2 349.8 C672.9 349.2 673.4 348.3 675.0 348.0 C676.6 347.7 679.6 347.9 681.2 347.6 C682.9 347.4 680.4 346.6 685.0 346.4 C689.6 346.2 705.6 346.2 710.0 346.4 C714.4 346.6 710.5 347.3 712.5 347.6 C714.5 347.9 718.9 348.1 722.5 348.2 C726.1 348.4 732.4 348.2 735.0 348.2 C737.6 348.2 736.8 348.4 738.8 348.2 C740.8 348.1 744.9 347.9 747.5 347.6 C750.1 347.3 752.4 346.6 755.0 346.4 C757.6 346.2 761.8 346.7 763.8 346.4 C765.8 346.1 765.7 344.8 767.5 344.5 C769.3 344.2 773.0 344.6 775.0 344.2 C777.0 343.9 778.4 343.1 780.0 342.6 C781.6 342.1 783.4 341.5 785.0 341.0 C786.6 340.5 788.4 339.9 790.0 339.8 C791.6 339.6 793.6 340.3 795.0 340.1 C796.4 340.0 794.4 339.1 798.8 338.9 C803.1 338.6 817.9 338.8 822.5 338.6 C827.1 338.5 825.7 338.3 827.5 338.0 C829.3 337.7 831.8 337.3 833.8 336.8 C835.8 336.2 837.8 334.9 840.0 334.5 C842.2 334.1 845.5 334.6 847.5 334.2 C849.5 333.9 850.7 333.0 852.5 332.6 C854.3 332.3 857.1 332.3 858.8 332.0 C860.4 331.7 860.1 331.0 862.5 330.8 C864.9 330.5 872.0 330.5 873.8 330.5" stroke="#f00000" stroke-width="1" fill="none"/><g stroke="#b4b4b4" stroke-width="1" fill="none"><path d="M588.5 325.5 V44.5 H886 V325.5 Z"/><path d="M588.5 362.5 V327.5 H886 V362.5 Z"/></g><path d="M589.2 362 V365.5 M647.0 362 V365.5 M704.7 362 V365.5 M762.5 362 V365.5 M820.2 362 V365.5 " stroke="#c8c8c8" stroke-width="1"/></svg>
<span class="t" style="top:49.60px;font-size:8.5px;line-height:10.5px;color:#fff;letter-spacing:-0.19px;left:891.3px;">1.08270</span>
<span class="t" style="top:79.40px;font-size:8.5px;line-height:10.5px;color:#fff;letter-spacing:-0.19px;left:891.3px;">1.07745</span>
<span class="t" style="top:109.30px;font-size:8.5px;line-height:10.5px;color:#fff;letter-spacing:-0.19px;left:891.3px;">1.07220</span>
<span class="t" style="top:139.10px;font-size:8.5px;line-height:10.5px;color:#fff;letter-spacing:-0.19px;left:891.3px;">1.06695</span>
<span class="t" style="top:169.00px;font-size:8.5px;line-height:10.5px;color:#fff;letter-spacing:-0.19px;left:891.3px;">1.06155</span>
<span class="t" style="top:198.80px;font-size:8.5px;line-height:10.5px;color:#fff;letter-spacing:-0.19px;left:891.3px;">1.05630</span>
<span class="t" style="top:228.40px;font-size:8.5px;line-height:10.5px;color:#fff;letter-spacing:-0.19px;left:891.3px;">1.05105</span>
<span class="t" style="top:258.20px;font-size:8.5px;line-height:10.5px;color:#fff;letter-spacing:-0.19px;left:891.3px;">1.04565</span>
<span class="t" style="top:287.90px;font-size:8.5px;line-height:10.5px;color:#fff;letter-spacing:-0.19px;left:891.3px;">1.04040</span>
<span class="t" style="top:317.40px;font-size:8.5px;line-height:10.5px;color:#fff;letter-spacing:-0.19px;left:891.3px;">1.03515</span>
<span class="t" style="top:328.40px;font-size:8.5px;line-height:10.5px;color:#fff;letter-spacing:-0.19px;left:889px;">0.006001</span>
<span class="t" style="top:349.40px;font-size:8.5px;line-height:10.5px;color:#fff;letter-spacing:-0.18px;left:891.3px;">0.00</span>
<span class="t" style="top:350.60px;font-size:8.5px;line-height:10.5px;color:#fff;letter-spacing:-0.19px;left:891.3px;">0.00155</span>
<svg style="left:585px;top:41px" width="343" height="340" viewBox="585 41 343 340"><path d="M886 54.8 h3 M886 84.6 h3 M886 114.5 h3 M886 144.3 h3 M886 174.2 h3 M886 204.0 h3 M886 233.6 h3 M886 263.4 h3 M886 293.1 h3 M886 322.6 h3 M886 354.6 h3 M886 355.8 h3 " stroke="#c8c8c8" stroke-width="1"/></svg>
<div style="left:887px;top:57.3px;width:37.7px;height:9.8px;background:#fff;"></div>
<span class="t" style="top:57.30px;font-size:8.5px;line-height:10.5px;color:#000;letter-spacing:-0.19px;left:891.3px;">1.08152</span>
<span class="t" style="top:365.60px;font-size:8.5px;line-height:10.5px;color:#fff;left:588.2px;">28 Feb 2025</span>
<span class="t" style="top:365.60px;font-size:8.5px;line-height:10.5px;color:#fff;left:645.96px;">3 Mar 12:00</span>
<span class="t" style="top:365.60px;font-size:8.5px;line-height:10.5px;color:#fff;left:703.72px;">4 Mar 04:00</span>
<span class="t" style="top:365.60px;font-size:8.5px;line-height:10.5px;color:#fff;left:761.48px;">4 Mar 20:00</span>
<span class="t" style="top:365.60px;font-size:8.5px;line-height:10.5px;color:#fff;left:819.24px;">5 Mar 12:00</span>
<svg style="left:592px;top:50px" width="7" height="5" viewBox="0 0 7 5"><path d="M0.3 0.5 H6.3 L3.3 4 Z" fill="#fff"/></svg>
<span class="t" style="top:46.60px;font-size:8.5px;line-height:10.5px;color:#fff;left:603.4px;">EURUSD.s,H1  1.07940 1.08196 1.07890 1.08152</span>
<span class="t" style="top:48.91px;font-size:7.9px;line-height:9.9px;color:#fff;right:413.00px;">多功能挂单【无时间限制版本】</span>
<svg style="left:870.5px;top:47.5px" width="12" height="12" viewBox="0 0 12 12"><circle cx="6" cy="6" r="4.9" fill="none" stroke="#fff" stroke-width="1"/><circle cx="4.3" cy="4.6" r="0.8" fill="#fff"/><circle cx="7.7" cy="4.6" r="0.8" fill="#fff"/><path d="M3.4 7 Q6 9.6 8.6 7" stroke="#fff" stroke-width="1" fill="none"/></svg>
<div style="left:598.5px;top:54.5px;width:90px;height:23px;box-sizing:border-box;background:#f0f0f0;border:1px solid #c4c4c4;box-shadow:inset 1px 1px 0 #fcfcfc;"></div>
<span class="t" style="left:604.0px;top:57.0px;width:49.5px;overflow:hidden;font-size:13px;line-height:18px;letter-spacing:1.4px;color:#4a4a4a;">多功能挂</span>
<div style="left:655.5px;top:69.0px;width:9px;height:1px;background:#777;"></div>
<svg style="left:672.5px;top:61.5px" width="9" height="9" viewBox="0 0 9 9"><path d="M1.2 1.2 L7.8 7.8 M7.8 1.2 L1.2 7.8" stroke="#9a9a9a" stroke-width="1.8"/></svg>
<span class="t" style="top:330.30px;font-size:8.5px;line-height:10.5px;color:#fff;left:592.8px;">MACD(12,26,9) 0.005178 0.005462</span>
<div style="left:935px;top:12px;width:361px;height:378px;box-sizing:border-box;border:2px solid #6e6e6e;border-bottom-width:1px;border-top-width:1px;border-radius:7px 7px 0 0;background:linear-gradient(180deg,#bac9dc 0px,#bfcee0 7px,#c8d5e6 16px,#d6e1ef 24px,#dee8f4 29px,#d8e4f2 60px,#d6e3f1 100%);box-shadow:inset 1px 1px 0 #e6eef8,inset -1px 0 0 #e6eef8;"></div>
<svg style="left:946px;top:24px" width="15" height="14" viewBox="0 0 15 14"><rect x="0.7" y="0.7" width="10.5" height="8" rx="1" fill="#fff" stroke="#3c7fe6" stroke-width="1.3"/><path d="M2.5 3.5 L4.5 2.5 L6 4.5" stroke="#3c7fe6" fill="none" stroke-width="0.9"/>
<rect x="3.7" y="5.2" width="9.3" height="7" rx="0.8" fill="#fff" stroke="#3c7fe6" stroke-width="1.3"/><path d="M5.3 8.4 L6.8 10 L8.2 8 L9.6 10 L11 8" stroke="#3c7fe6" fill="none" stroke-width="0.9"/></svg>
<span class="t" style="top:24.47px;font-size:11.5px;line-height:13.5px;color:#a6a6a6;letter-spacing:-0.49px;left:964px;">AUDUSD.s,H1</span>
<div style="left:1196px;top:22px;width:28.2px;height:16px;box-sizing:border-box;border:1px solid #8b9cb6;border-radius:2px;background:linear-gradient(180deg,#dde7f3,#cbd8e9 50%,#c3d1e3);box-shadow:inset 0 0 0 1px rgba(255,255,255,.55);"></div>
<svg style="left:1204px;top:29px" width="12" height="6" viewBox="0 0 12 6"><rect x="1" y="1" width="9.5" height="3" rx="0.8" fill="#fff" stroke="#5a5a5a" stroke-width="0.9"/></svg>
<div style="left:1226.5px;top:22px;width:28.2px;height:16px;box-sizing:border-box;border:1px solid #8b9cb6;border-radius:2px;background:linear-gradient(180deg,#dde7f3,#cbd8e9 50%,#c3d1e3);box-shadow:inset 0 0 0 1px rgba(255,255,255,.55);"></div>
<svg style="left:1234.5px;top:25px" width="12" height="10" viewBox="0 0 12 10"><rect x="1.2" y="1.2" width="9.5" height="7.2" rx="1" fill="#fff" stroke="#5a5a5a" stroke-width="0.9"/><rect x="3.6" y="4" width="4.7" height="2" fill="#c9d6e8" stroke="#5a5a5a" stroke-width="0.8"/></svg>
<div style="left:1257px;top:22px;width:28.2px;height:16px;box-sizing:border-box;border:1px solid #8b9cb6;border-radius:2px;background:linear-gradient(180deg,#dde7f3,#cbd8e9 50%,#c3d1e3);box-shadow:inset 0 0 0 1px rgba(255,255,255,.55);"></div>
<svg style="left:1265px;top:25px" width="12" height="10" viewBox="0 0 12 10"><path d="M2.2 2 L9.8 8 M9.8 2 L2.2 8" stroke="#555" stroke-width="3.6" stroke-linecap="round"/><path d="M2.2 2 L9.8 8 M9.8 2 L2.2 8" stroke="#fff" stroke-width="2.1" stroke-linecap="round"/></svg>
<div style="left:944px;top:40px;width:344px;height:343px;background:#fff;"></div>
<div style="left:943px;top:40px;width:1px;height:342px;background:#6a7078;"></div>
<div style="left:944px;top:40px;width:342px;height:341px;background:#000;"></div>
<div style="left:944px;top:40px;width:342px;height:1px;background:#50555c;"></div>
<svg style="left:944px;top:41px" width="343" height="340" viewBox="944 41 343 340">
</svg>
<svg style="left:944px;top:41px" width="343" height="340" viewBox="944 41 343 340"><g stroke-width="1" fill="none"><path d="M948.7 227.2 V242.2" stroke="#ffffff"/><path d="M952.3 234.1 V244.7" stroke="#ff0000"/><path d="M955.9 225.9 V239.1" stroke="#ff0000"/><path d="M959.5 225.9 V232.8" stroke="#ff0000"/><path d="M963.1 214.0 V222.8" stroke="#ffffff"/><path d="M966.8 206.5 V222.2" stroke="#ff0000"/><path d="M970.4 205.9 V218.4" stroke="#ffffff"/><path d="M974.0 198.3 V214.0" stroke="#ff0000"/><path d="M977.6 198.3 V212.8" stroke="#ffffff"/><path d="M981.2 209.6 V217.1" stroke="#ffffff"/><path d="M984.8 207.7 V215.9" stroke="#ff0000"/><path d="M988.4 209.0 V214.0" stroke="#ffffff"/><path d="M992.0 213.4 V225.9" stroke="#9a9a9a"/><path d="M995.6 214.6 V219.6" stroke="#ffffff"/><path d="M999.2 212.8 V222.8" stroke="#ff0000"/><path d="M1002.9 205.2 V212.8" stroke="#ff0000"/><path d="M1006.5 202.7 V210.9" stroke="#ffffff"/><path d="M1010.1 204.0 V210.9" stroke="#ffffff"/><path d="M1013.7 199.6 V209.6" stroke="#ff0000"/><path d="M1017.3 195.2 V206.5" stroke="#ff0000"/><path d="M1020.9 177.6 V197.7" stroke="#ff0000"/><path d="M1024.5 172.0 V192.1" stroke="#ffffff"/><path d="M1028.1 177.6 V188.9" stroke="#ff0000"/><path d="M1031.7 175.8 V182.7" stroke="#ff0000"/><path d="M1035.3 173.9 V193.3" stroke="#ffffff"/><path d="M1039.0 189.6 V212.1" stroke="#ffffff"/><path d="M1042.6 204.0 V230.9" stroke="#9a9a9a"/><path d="M1046.2 202.7 V212.8" stroke="#ff0000"/><path d="M1049.8 205.9 V212.8" stroke="#ffffff"/><path d="M1053.4 205.9 V220.3" stroke="#ffffff"/><path d="M1057.0 212.8 V229.7" stroke="#ff0000"/><path d="M1060.6 212.1 V225.9" stroke="#ffffff"/><path d="M1064.2 220.3 V235.9" stroke="#ffffff"/><path d="M1067.8 224.0 V238.5" stroke="#ffffff"/><path d="M1071.4 233.4 V247.9" stroke="#ffffff"/><path d="M1075.0 232.2 V251.0" stroke="#ff0000"/><path d="M1078.7 224.0 V234.7" stroke="#ff0000"/><path d="M1082.3 220.3 V230.9" stroke="#ffffff"/><path d="M1085.9 223.4 V237.8" stroke="#ff0000"/><path d="M1089.5 199.0 V222.8" stroke="#ff0000"/><path d="M1093.1 204.0 V215.9" stroke="#ff0000"/><path d="M1096.7 190.2 V210.3" stroke="#ff0000"/><path d="M1100.3 183.3 V196.5" stroke="#ff0000"/><path d="M1103.9 187.1 V206.5" stroke="#ffffff"/><path d="M1107.5 199.6 V229.1" stroke="#ffffff"/><path d="M1111.2 224.1 V237.3" stroke="#ff0000"/><path d="M1114.8 220.3 V237.3" stroke="#ff0000"/><path d="M1118.4 219.1 V224.1" stroke="#ff0000"/><path d="M1122.0 199.0 V212.8" stroke="#ff0000"/><path d="M1125.6 180.2 V200.9" stroke="#ff0000"/><path d="M1129.2 161.4 V182.1" stroke="#ff0000"/><path d="M1132.8 150.2 V179.0" stroke="#ff0000"/><path d="M1136.4 150.7 V165.8" stroke="#ffffff"/><path d="M1140.0 142.0 V157.0" stroke="#ffffff"/><path d="M1143.6 154.5 V170.8" stroke="#ffffff"/><path d="M1147.2 157.6 V175.8" stroke="#ffffff"/><path d="M1150.9 174.6 V188.4" stroke="#ffffff"/><path d="M1154.5 178.3 V195.9" stroke="#ff0000"/><path d="M1158.1 170.8 V179.6" stroke="#ffffff"/><path d="M1161.7 170.8 V180.8" stroke="#ff0000"/><path d="M1165.3 158.9 V171.4" stroke="#ff0000"/><path d="M1168.9 142.0 V162.7" stroke="#ff0000"/><path d="M1172.5 135.8 V155.8" stroke="#ff0000"/><path d="M1176.1 128.2 V138.9" stroke="#ff0000"/><path d="M1179.7 135.8 V147.1" stroke="#ffffff"/><path d="M1183.4 134.5 V145.2" stroke="#ffffff"/><path d="M1187.0 127.6 V145.8" stroke="#ffffff"/><path d="M1190.6 123.2 V143.9" stroke="#ff0000"/><path d="M1194.2 95.5 V127.5" stroke="#ff0000"/><path d="M1197.8 93.0 V117.5" stroke="#ffffff"/><path d="M1201.4 94.9 V116.9" stroke="#ff0000"/><path d="M1205.0 88.6 V109.3" stroke="#ff0000"/><path d="M1208.6 86.1 V102.4" stroke="#ff0000"/><path d="M1212.2 69.2 V90.5" stroke="#ff0000"/><path d="M1215.8 68.0 V76.1" stroke="#ff0000"/><path d="M1219.5 69.8 V78.0" stroke="#ffffff"/><path d="M1223.1 73.0 V85.5" stroke="#ffffff"/><path d="M1226.7 71.1 V81.8" stroke="#ff0000"/><path d="M1230.3 71.7 V84.3" stroke="#ffffff"/><path d="M1233.9 55.4 V83.0" stroke="#ff0000"/></g><rect x="947.35" y="227.2" width="2.7" height="15.0" fill="#ffffff"/><rect x="950.96" y="237.2" width="2.7" height="3.8" fill="#ff0000"/><rect x="954.57" y="227.2" width="2.7" height="11.3" fill="#ff0000"/><rect x="958.18" y="226.5" width="2.7" height="1.9" fill="#ff0000"/><rect x="961.79" y="219.0" width="2.7" height="3.1" fill="#ffffff"/><rect x="965.40" y="210.9" width="2.7" height="10.7" fill="#ff0000"/><rect x="969.01" y="211.5" width="2.7" height="1.9" fill="#ffffff"/><rect x="972.62" y="203.3" width="2.7" height="10.0" fill="#ff0000"/><rect x="976.23" y="202.7" width="2.7" height="8.8" fill="#ffffff"/><rect x="979.84" y="210.9" width="2.7" height="3.8" fill="#ffffff"/><rect x="983.45" y="211.5" width="2.7" height="3.8" fill="#ff0000"/><rect x="987.06" y="211.5" width="2.7" height="1.9" fill="#ffffff"/><rect x="990.67" y="217.1" width="2.7" height="1.9" fill="#fff"/><rect x="994.28" y="215.9" width="2.7" height="2.5" fill="#ffffff"/><rect x="997.89" y="213.4" width="2.7" height="1.9" fill="#ff0000"/><rect x="1001.50" y="206.5" width="2.7" height="5.6" fill="#ff0000"/><rect x="1005.11" y="207.1" width="2.7" height="2.5" fill="#ffffff"/><rect x="1008.72" y="207.7" width="2.7" height="1.9" fill="#ffffff"/><rect x="1012.33" y="202.7" width="2.7" height="6.3" fill="#ff0000"/><rect x="1015.94" y="195.8" width="2.7" height="10.0" fill="#ff0000"/><rect x="1019.55" y="184.5" width="2.7" height="12.5" fill="#ff0000"/><rect x="1023.16" y="184.5" width="2.7" height="3.1" fill="#ffffff"/><rect x="1026.77" y="178.9" width="2.7" height="9.4" fill="#ff0000"/><rect x="1030.38" y="178.3" width="2.7" height="1.9" fill="#ff0000"/><rect x="1033.99" y="178.9" width="2.7" height="13.8" fill="#ffffff"/><rect x="1037.60" y="200.8" width="2.7" height="8.2" fill="#ffffff"/><rect x="1041.21" y="209.0" width="2.7" height="2.5" fill="#fff"/><rect x="1044.82" y="205.9" width="2.7" height="6.3" fill="#ff0000"/><rect x="1048.43" y="208.4" width="2.7" height="3.8" fill="#ffffff"/><rect x="1052.04" y="210.9" width="2.7" height="6.9" fill="#ffffff"/><rect x="1055.65" y="215.3" width="2.7" height="2.5" fill="#ff0000"/><rect x="1059.26" y="215.3" width="2.7" height="8.8" fill="#ffffff"/><rect x="1062.87" y="222.8" width="2.7" height="11.9" fill="#ffffff"/><rect x="1066.48" y="233.4" width="2.7" height="2.5" fill="#ffffff"/><rect x="1070.09" y="234.7" width="2.7" height="6.3" fill="#ffffff"/><rect x="1073.70" y="233.4" width="2.7" height="8.8" fill="#ff0000"/><rect x="1077.31" y="225.3" width="2.7" height="8.8" fill="#ff0000"/><rect x="1080.92" y="228.4" width="2.7" height="1.9" fill="#ffffff"/><rect x="1084.53" y="224.7" width="2.7" height="3.8" fill="#ff0000"/><rect x="1088.14" y="209.0" width="2.7" height="13.2" fill="#ff0000"/><rect x="1091.75" y="207.8" width="2.7" height="2.5" fill="#ff0000"/><rect x="1095.36" y="190.9" width="2.7" height="18.8" fill="#ff0000"/><rect x="1098.97" y="190.2" width="2.7" height="2.5" fill="#ff0000"/><rect x="1102.58" y="189.6" width="2.7" height="16.3" fill="#ffffff"/><rect x="1106.19" y="205.3" width="2.7" height="23.2" fill="#ffffff"/><rect x="1109.80" y="227.2" width="2.7" height="1.9" fill="#ff0000"/><rect x="1113.41" y="223.5" width="2.7" height="3.1" fill="#ff0000"/><rect x="1117.02" y="219.7" width="2.7" height="3.8" fill="#ff0000"/><rect x="1120.63" y="199.6" width="2.7" height="12.5" fill="#ff0000"/><rect x="1124.24" y="180.8" width="2.7" height="19.4" fill="#ff0000"/><rect x="1127.85" y="176.5" width="2.7" height="5.0" fill="#ff0000"/><rect x="1131.46" y="150.2" width="2.7" height="26.8" fill="#ff0000"/><rect x="1135.07" y="151.4" width="2.7" height="3.1" fill="#ffffff"/><rect x="1138.68" y="153.9" width="2.7" height="2.5" fill="#ffffff"/><rect x="1142.29" y="155.1" width="2.7" height="14.4" fill="#ffffff"/><rect x="1145.90" y="168.9" width="2.7" height="6.3" fill="#ffffff"/><rect x="1149.51" y="175.8" width="2.7" height="11.9" fill="#ffffff"/><rect x="1153.12" y="179.0" width="2.7" height="9.4" fill="#ff0000"/><rect x="1156.73" y="175.8" width="2.7" height="3.1" fill="#ffffff"/><rect x="1160.34" y="172.1" width="2.7" height="8.2" fill="#ff0000"/><rect x="1163.95" y="160.2" width="2.7" height="10.7" fill="#ff0000"/><rect x="1167.56" y="150.2" width="2.7" height="11.9" fill="#ff0000"/><rect x="1171.17" y="136.4" width="2.7" height="14.4" fill="#ff0000"/><rect x="1174.78" y="135.8" width="2.7" height="1.9" fill="#ff0000"/><rect x="1178.39" y="136.4" width="2.7" height="1.9" fill="#ffffff"/><rect x="1182.00" y="135.8" width="2.7" height="6.9" fill="#ffffff"/><rect x="1185.61" y="142.0" width="2.7" height="3.1" fill="#ffffff"/><rect x="1189.22" y="123.9" width="2.7" height="19.4" fill="#ff0000"/><rect x="1192.83" y="96.8" width="2.7" height="28.2" fill="#ff0000"/><rect x="1196.44" y="97.4" width="2.7" height="14.4" fill="#ffffff"/><rect x="1200.05" y="106.2" width="2.7" height="5.6" fill="#ff0000"/><rect x="1203.66" y="89.9" width="2.7" height="17.6" fill="#ff0000"/><rect x="1207.27" y="89.3" width="2.7" height="1.9" fill="#ff0000"/><rect x="1210.88" y="71.7" width="2.7" height="18.2" fill="#ff0000"/><rect x="1214.49" y="69.8" width="2.7" height="2.5" fill="#ff0000"/><rect x="1218.10" y="70.5" width="2.7" height="6.9" fill="#ffffff"/><rect x="1221.71" y="76.7" width="2.7" height="4.4" fill="#ffffff"/><rect x="1225.32" y="74.9" width="2.7" height="6.3" fill="#ff0000"/><rect x="1228.93" y="74.9" width="2.7" height="6.3" fill="#ffffff"/><rect x="1232.54" y="57.9" width="2.7" height="24.5" fill="#ff0000"/><path d="M947.8 222.2 C948.8 222.7 951.6 224.6 954.0 225.3 C956.4 226.0 960.0 226.6 962.8 226.5 C965.6 226.4 969.0 225.8 971.6 224.7 C974.2 223.6 976.7 221.3 979.1 219.6 C981.5 218.0 984.2 215.8 986.6 214.6 C989.0 213.4 991.7 212.5 994.2 212.1 C996.6 211.7 999.3 212.4 1001.7 212.1 C1004.1 211.8 1006.6 211.2 1009.2 210.2 C1011.8 209.2 1015.4 207.7 1018.0 205.9 C1020.6 204.1 1023.1 200.9 1025.5 199.0 C1027.9 197.1 1030.8 194.9 1033.0 193.9 C1035.2 192.9 1037.1 192.6 1039.3 192.7 C1041.5 192.8 1044.4 193.5 1046.8 194.6 C1049.2 195.7 1052.1 197.7 1054.3 199.6 C1056.6 201.5 1058.6 203.9 1060.6 206.5 C1062.6 209.1 1064.7 213.2 1066.9 215.9 C1069.1 218.6 1072.0 221.6 1074.4 223.4 C1076.8 225.2 1079.5 226.5 1081.9 227.2 C1084.3 227.9 1087.4 228.6 1089.5 227.8 C1091.5 227.0 1093.3 224.1 1095.0 222.2 C1096.7 220.3 1098.6 217.6 1100.0 215.9 C1101.4 214.3 1101.4 212.9 1103.8 212.2 C1106.2 211.5 1112.5 212.0 1115.1 211.6 C1117.7 211.2 1118.3 210.8 1120.1 209.7 C1121.9 208.6 1124.2 206.9 1126.4 204.7 C1128.6 202.5 1131.7 199.1 1133.9 195.9 C1136.1 192.7 1138.4 187.7 1140.2 184.6 C1142.0 181.5 1143.6 178.5 1145.2 176.5 C1146.8 174.4 1148.6 173.2 1150.2 172.1 C1151.8 171.0 1152.8 170.0 1155.2 169.6 C1157.6 169.2 1163.0 170.1 1165.2 169.6 C1167.4 169.1 1167.6 167.3 1169.0 166.4 C1170.4 165.5 1172.1 165.3 1173.9 164.0 C1175.7 162.7 1178.0 160.3 1180.2 158.3 C1182.4 156.3 1185.7 154.4 1187.7 151.4 C1189.7 148.5 1190.7 143.8 1192.7 140.2 C1194.7 136.5 1197.8 132.5 1200.3 128.9 C1202.7 125.3 1205.4 122.0 1207.8 117.6 C1210.2 113.2 1213.7 104.9 1215.3 101.3 C1216.9 97.7 1216.6 96.8 1217.8 94.9 C1219.0 93.0 1221.2 90.7 1222.8 89.3 C1224.4 87.9 1226.1 87.3 1227.8 86.1 C1229.6 84.9 1232.8 82.5 1233.7 81.8" stroke="#ff0000" stroke-width="1.7" fill="none" stroke-linejoin="round" stroke-linecap="round"/><path d="M947.8 222.2 C949.2 222.7 953.5 224.8 956.5 225.3 C959.5 225.8 963.4 225.8 966.6 225.3 C969.8 224.8 973.6 223.4 976.6 222.2 C979.6 221.0 982.6 219.1 985.4 217.8 C988.2 216.5 991.3 214.9 994.2 214.0 C997.0 213.1 1000.1 212.7 1002.9 212.1 C1005.7 211.5 1009.1 211.1 1011.7 210.2 C1014.3 209.3 1016.8 208.0 1019.2 206.5 C1021.6 205.0 1024.6 202.4 1026.8 200.8 C1029.0 199.2 1031.0 197.4 1033.0 196.5 C1035.0 195.5 1037.1 195.3 1039.3 195.2 C1041.5 195.1 1044.4 195.2 1046.8 195.8 C1049.2 196.4 1051.9 197.5 1054.3 199.0 C1056.8 200.5 1059.5 202.7 1061.9 205.2 C1064.3 207.7 1067.2 212.0 1069.4 214.6 C1071.6 217.2 1073.5 219.8 1075.7 221.5 C1077.9 223.2 1080.8 224.6 1083.2 225.3 C1085.6 226.0 1088.6 226.7 1090.7 225.9 C1092.8 225.1 1094.4 221.8 1096.3 220.3 C1098.2 218.8 1100.3 217.5 1102.5 216.6 C1104.7 215.7 1107.7 215.2 1110.1 214.7 C1112.5 214.2 1115.4 214.4 1117.6 213.4 C1119.8 212.4 1121.8 210.2 1123.9 208.4 C1125.9 206.6 1127.9 204.6 1130.1 202.2 C1132.3 199.7 1135.2 196.0 1137.6 193.4 C1140.1 190.8 1142.8 188.5 1145.2 185.9 C1147.6 183.2 1150.3 179.5 1152.7 177.1 C1155.1 174.7 1157.8 172.5 1160.2 170.8 C1162.6 169.1 1164.9 167.9 1167.7 166.4 C1170.5 164.9 1174.9 162.9 1177.7 161.5 C1180.5 160.1 1183.0 160.1 1185.2 157.7 C1187.4 155.3 1189.5 149.8 1191.5 146.4 C1193.5 143.0 1195.5 140.0 1197.7 136.4 C1199.9 132.8 1203.1 127.5 1205.3 123.9 C1207.5 120.2 1209.5 117.0 1211.5 113.8 C1213.5 110.6 1215.8 107.2 1217.8 103.8 C1219.8 100.4 1222.3 95.0 1224.1 92.4 C1225.9 89.8 1227.5 88.8 1229.1 87.4 C1230.6 86.0 1233.0 84.2 1233.7 83.6" stroke="#00f000" stroke-width="1.7" fill="none" stroke-linejoin="round" stroke-linecap="round"/><path d="M947.8 221.5 C949.2 221.9 953.1 223.6 956.5 224.0 C959.9 224.4 965.5 224.4 969.1 224.0 C972.7 223.6 976.1 222.3 979.1 221.5 C982.1 220.7 985.1 219.9 987.9 219.0 C990.7 218.1 994.1 216.9 996.7 215.9 C999.3 214.9 1001.6 213.7 1004.2 212.8 C1006.8 211.8 1010.4 211.1 1013.0 210.2 C1015.6 209.3 1018.1 208.3 1020.5 207.1 C1022.9 205.9 1025.8 204.0 1028.0 202.7 C1030.2 201.4 1032.3 199.8 1034.3 199.0 C1036.3 198.2 1038.3 197.9 1040.6 197.7 C1042.8 197.5 1045.7 197.3 1048.1 197.7 C1050.5 198.1 1053.2 199.1 1055.6 200.2 C1058.0 201.3 1060.7 202.7 1063.1 204.6 C1065.5 206.5 1068.4 209.8 1070.6 212.1 C1072.9 214.4 1074.9 217.2 1076.9 219.0 C1078.9 220.8 1080.8 222.6 1083.2 223.4 C1085.6 224.2 1089.7 224.6 1092.0 224.0 C1094.3 223.4 1095.4 220.7 1097.5 219.7 C1099.6 218.7 1102.2 218.2 1105.0 217.8 C1107.9 217.4 1112.5 217.9 1115.1 217.2 C1117.7 216.5 1119.3 215.2 1121.3 213.4 C1123.4 211.6 1125.4 208.5 1127.6 205.9 C1129.8 203.3 1132.7 199.5 1135.1 197.1 C1137.5 194.7 1140.3 192.3 1142.7 190.9 C1145.1 189.5 1148.2 189.4 1150.2 188.4 C1152.2 187.4 1153.4 186.4 1155.2 184.6 C1157.0 182.8 1159.5 179.5 1161.5 177.1 C1163.5 174.7 1165.6 172.0 1167.7 169.6 C1169.9 167.2 1173.0 163.7 1175.2 162.1 C1177.4 160.5 1179.6 160.2 1181.4 159.6 C1183.2 159.0 1184.7 159.8 1186.5 158.3 C1188.3 156.8 1190.7 153.1 1192.7 150.2 C1194.7 147.3 1196.8 143.8 1199.0 140.2 C1201.2 136.5 1204.3 131.2 1206.5 127.6 C1208.7 124.0 1210.8 120.8 1212.8 117.6 C1214.8 114.4 1217.9 109.4 1219.1 107.6 C1220.3 105.7 1219.1 107.5 1220.3 106.2 C1221.5 104.9 1225.0 101.2 1226.6 99.3 C1228.2 97.4 1229.2 96.1 1230.3 94.3 C1231.5 92.5 1233.2 89.0 1233.7 88.0" stroke="#40e0d0" stroke-width="1.7" fill="none" stroke-linejoin="round" stroke-linecap="round"/><path d="M947.8 220.3 C949.2 220.6 953.1 221.8 956.5 222.2 C959.9 222.6 965.1 223.0 969.1 222.8 C973.1 222.6 977.6 221.3 981.6 220.9 C985.6 220.5 991.3 220.7 994.2 220.3 C997.0 219.9 997.2 219.3 999.2 218.4 C1001.2 217.5 1004.3 215.8 1006.7 214.6 C1009.1 213.4 1011.8 212.0 1014.2 210.9 C1016.6 209.8 1019.3 208.7 1021.7 207.7 C1024.2 206.7 1026.9 205.7 1029.3 204.6 C1031.7 203.5 1034.4 201.6 1036.8 200.8 C1039.2 200.0 1041.9 199.7 1044.3 199.6 C1046.7 199.5 1049.4 199.8 1051.8 200.2 C1054.2 200.6 1057.0 201.3 1059.4 202.1 C1061.8 202.9 1064.5 203.8 1066.9 205.2 C1069.3 206.6 1072.2 209.1 1074.4 210.9 C1076.6 212.7 1078.9 215.0 1080.7 216.5 C1082.5 218.0 1083.9 219.5 1085.7 220.3 C1087.5 221.1 1090.1 221.7 1092.0 221.5 C1093.9 221.3 1095.2 219.5 1097.5 219.1 C1099.8 218.7 1103.1 219.1 1106.3 219.1 C1109.5 219.1 1115.0 219.6 1117.6 219.1 C1120.2 218.6 1120.8 217.5 1122.6 215.9 C1124.4 214.4 1126.7 212.1 1128.9 209.7 C1131.1 207.3 1134.2 203.5 1136.4 200.9 C1138.6 198.3 1140.7 195.1 1142.7 193.4 C1144.7 191.7 1146.9 190.9 1148.9 190.2 C1150.9 189.5 1153.2 189.9 1155.2 189.0 C1157.2 188.1 1159.5 186.7 1161.5 184.6 C1163.5 182.5 1166.0 178.5 1167.7 175.8 C1169.5 173.1 1170.9 170.0 1172.7 167.7 C1174.5 165.4 1176.9 162.9 1178.9 161.5 C1180.9 160.1 1183.4 159.8 1185.2 159.0 C1187.0 158.2 1188.4 157.9 1190.2 156.5 C1192.0 155.1 1194.5 152.6 1196.5 150.2 C1198.5 147.8 1200.8 144.8 1202.8 141.4 C1204.8 138.0 1207.0 132.5 1209.0 128.9 C1211.0 125.3 1213.9 121.1 1215.3 118.8 C1216.7 116.6 1216.4 116.8 1217.8 115.0 C1219.2 113.2 1222.3 109.7 1224.1 107.5 C1225.9 105.3 1227.5 103.2 1229.1 101.2 C1230.6 99.2 1233.0 96.1 1233.7 95.2" stroke="#ffffff" stroke-width="1.7" fill="none" stroke-linejoin="round" stroke-linecap="round"/><g fill="#c0c0c0"><rect x="947.45" y="320.5" width="2.5" height="34.6"/><rect x="951.06" y="320.5" width="2.5" height="33.8"/><rect x="954.67" y="320.5" width="2.5" height="32.1"/><rect x="958.28" y="320.5" width="2.5" height="29.6"/><rect x="961.89" y="320.5" width="2.5" height="27.1"/><rect x="965.50" y="320.5" width="2.5" height="23.7"/><rect x="969.11" y="320.5" width="2.5" height="20.4"/><rect x="972.72" y="320.5" width="2.5" height="16.2"/><rect x="976.33" y="320.5" width="2.5" height="13.7"/><rect x="979.94" y="320.5" width="2.5" height="12.0"/><rect x="983.55" y="320.5" width="2.5" height="10.9"/><rect x="987.16" y="320.5" width="2.5" height="10.0"/><rect x="990.77" y="320.5" width="2.5" height="9.5"/><rect x="994.38" y="320.5" width="2.5" height="8.7"/><rect x="997.99" y="320.5" width="2.5" height="7.9"/><rect x="1001.60" y="320.5" width="2.5" height="6.2"/><rect x="1005.21" y="320.5" width="2.5" height="4.5"/><rect x="1008.82" y="320.5" width="2.5" height="3.3"/><rect x="1012.43" y="320.5" width="2.5" height="1.7"/><rect x="1019.65" y="316.2" width="2.5" height="4.3"/><rect x="1023.26" y="313.4" width="2.5" height="7.2"/><rect x="1026.87" y="310.0" width="2.5" height="10.5"/><rect x="1030.48" y="308.0" width="2.5" height="12.5"/><rect x="1034.09" y="308.0" width="2.5" height="12.5"/><rect x="1037.70" y="311.7" width="2.5" height="8.9"/><rect x="1041.31" y="314.5" width="2.5" height="6.0"/><rect x="1044.92" y="316.7" width="2.5" height="3.8"/><rect x="1048.53" y="318.4" width="2.5" height="2.2"/><rect x="1052.14" y="320.5" width="2.5" height="0.8"/><rect x="1055.75" y="320.5" width="2.5" height="2.3"/><rect x="1059.36" y="320.5" width="2.5" height="5.0"/><rect x="1062.97" y="320.5" width="2.5" height="8.7"/><rect x="1066.58" y="320.5" width="2.5" height="11.7"/><rect x="1070.19" y="320.5" width="2.5" height="15.0"/><rect x="1073.80" y="320.5" width="2.5" height="16.2"/><rect x="1077.41" y="320.5" width="2.5" height="15.4"/><rect x="1081.02" y="320.5" width="2.5" height="14.9"/><rect x="1084.63" y="320.5" width="2.5" height="14.0"/><rect x="1088.24" y="320.5" width="2.5" height="10.4"/><rect x="1091.85" y="320.5" width="2.5" height="7.9"/><rect x="1095.46" y="320.5" width="2.5" height="3.3"/><rect x="1099.07" y="318.9" width="2.5" height="1.7"/><rect x="1102.68" y="317.9" width="2.5" height="2.7"/><rect x="1106.29" y="320.5" width="2.5" height="1.2"/><rect x="1109.90" y="320.5" width="2.5" height="2.8"/><rect x="1113.51" y="320.5" width="2.5" height="3.7"/><rect x="1117.12" y="320.5" width="2.5" height="2.3"/><rect x="1120.73" y="320.5" width="2.5" height="1.2"/><rect x="1124.34" y="316.2" width="2.5" height="4.3"/><rect x="1127.95" y="311.7" width="2.5" height="8.9"/><rect x="1131.56" y="303.3" width="2.5" height="17.2"/><rect x="1135.17" y="298.3" width="2.5" height="22.2"/><rect x="1138.78" y="294.1" width="2.5" height="26.4"/><rect x="1142.39" y="293.6" width="2.5" height="26.9"/><rect x="1146.00" y="295.5" width="2.5" height="25.1"/><rect x="1149.61" y="298.3" width="2.5" height="22.2"/><rect x="1153.22" y="299.1" width="2.5" height="21.4"/><rect x="1156.83" y="298.8" width="2.5" height="21.7"/><rect x="1160.44" y="300.0" width="2.5" height="20.6"/><rect x="1164.05" y="298.3" width="2.5" height="22.2"/><rect x="1167.66" y="296.6" width="2.5" height="23.9"/><rect x="1171.27" y="292.8" width="2.5" height="27.8"/><rect x="1174.88" y="289.1" width="2.5" height="31.4"/><rect x="1178.49" y="288.3" width="2.5" height="32.3"/><rect x="1182.10" y="287.4" width="2.5" height="33.1"/><rect x="1185.71" y="288.3" width="2.5" height="32.3"/><rect x="1189.32" y="285.4" width="2.5" height="35.1"/><rect x="1192.93" y="280.2" width="2.5" height="40.3"/><rect x="1196.54" y="278.2" width="2.5" height="42.3"/><rect x="1200.15" y="276.6" width="2.5" height="44.0"/><rect x="1203.76" y="272.9" width="2.5" height="47.7"/><rect x="1207.37" y="271.2" width="2.5" height="49.3"/><rect x="1210.98" y="266.5" width="2.5" height="54.0"/><rect x="1214.59" y="264.0" width="2.5" height="56.5"/><rect x="1218.20" y="264.0" width="2.5" height="56.5"/><rect x="1221.81" y="264.9" width="2.5" height="55.7"/><rect x="1225.42" y="264.9" width="2.5" height="55.7"/><rect x="1229.03" y="266.2" width="2.5" height="54.3"/><rect x="1232.64" y="265.4" width="2.5" height="55.2"/></g><path d="M947.7 357.3 C949.8 356.4 956.0 353.9 960.7 351.8 C965.5 349.7 972.6 346.8 977.4 344.3 C982.3 341.7 986.8 338.2 990.8 335.9 C994.8 333.7 998.5 331.7 1002.5 330.1 C1006.5 328.5 1011.9 327.5 1015.9 325.9 C1019.9 324.3 1024.4 321.8 1027.6 320.0 C1030.8 318.3 1033.3 316.2 1036.0 315.0 C1038.6 313.8 1041.6 312.9 1044.3 312.5 C1047.0 312.2 1050.0 312.2 1052.7 312.9 C1055.4 313.5 1058.1 314.9 1061.0 316.7 C1064.0 318.5 1067.9 322.1 1071.1 324.2 C1074.3 326.4 1078.2 328.7 1081.1 330.1 C1084.0 331.4 1087.0 332.2 1089.5 332.6 C1092.0 332.9 1093.9 333.1 1096.7 332.2 C1099.4 331.4 1103.2 328.6 1106.7 327.2 C1110.2 325.8 1114.4 324.7 1118.4 323.4 C1122.4 322.1 1128.3 320.9 1131.8 319.2 C1135.3 317.5 1137.5 314.9 1140.2 312.5 C1142.8 310.1 1145.8 306.3 1148.5 304.2 C1151.2 302.0 1154.2 300.1 1156.9 299.1 C1159.6 298.2 1161.8 298.4 1165.2 298.0 C1168.7 297.5 1175.1 297.0 1178.6 296.3 C1182.1 295.6 1184.3 294.4 1187.0 293.3 C1189.6 292.1 1192.1 291.0 1195.3 289.1 C1198.5 287.2 1203.6 284.0 1207.0 281.6 C1210.5 279.1 1213.9 275.9 1217.1 273.7 C1220.3 271.6 1224.4 269.5 1227.1 268.2 C1229.8 266.9 1232.7 266.1 1233.8 265.7" stroke="#f00000" stroke-width="1" fill="none"/><g stroke="#b4b4b4" stroke-width="1" fill="none"><path d="M947.5 255.5 V44.5 H1244.5 V255.5 Z"/><path d="M947.5 362.5 V258.5 H1244.5 V362.5 Z"/></g><path d="M948.2 362 V365.5 M1006.0 362 V365.5 M1063.7 362 V365.5 M1121.5 362 V365.5 M1179.2 362 V365.5 " stroke="#c8c8c8" stroke-width="1"/></svg>
<span class="t" style="top:69.40px;font-size:8.5px;line-height:10.5px;color:#fff;letter-spacing:-0.19px;left:1249.8px;">0.63365</span>
<span class="t" style="top:99.20px;font-size:8.5px;line-height:10.5px;color:#fff;letter-spacing:-0.18px;left:1249.8px;">0.63110</span>
<span class="t" style="top:128.90px;font-size:8.5px;line-height:10.5px;color:#fff;letter-spacing:-0.19px;left:1249.8px;">0.62855</span>
<span class="t" style="top:158.80px;font-size:8.5px;line-height:10.5px;color:#fff;letter-spacing:-0.19px;left:1249.8px;">0.62600</span>
<span class="t" style="top:188.60px;font-size:8.5px;line-height:10.5px;color:#fff;letter-spacing:-0.19px;left:1249.8px;">0.62345</span>
<span class="t" style="top:218.30px;font-size:8.5px;line-height:10.5px;color:#fff;letter-spacing:-0.19px;left:1249.8px;">0.62095</span>
<span class="t" style="top:248.10px;font-size:8.5px;line-height:10.5px;color:#fff;letter-spacing:-0.19px;left:1249.8px;">0.61840</span>
<span class="t" style="top:258.30px;font-size:8.5px;line-height:10.5px;color:#fff;letter-spacing:-0.19px;left:1247.5px;">0.002631</span>
<span class="t" style="top:315.80px;font-size:8.5px;line-height:10.5px;color:#fff;letter-spacing:-0.18px;left:1249.8px;">0.00</span>
<span class="t" style="top:351.00px;font-size:8.5px;line-height:10.5px;color:#fff;letter-spacing:-0.18px;left:1247.8px;">-0.00172</span>
<svg style="left:944px;top:41px" width="343" height="340" viewBox="944 41 343 340"><path d="M1244.5 74.6 h3 M1244.5 104.4 h3 M1244.5 134.1 h3 M1244.5 164.0 h3 M1244.5 193.8 h3 M1244.5 223.5 h3 M1244.5 253.3 h3 M1244.5 321.0 h3 " stroke="#c8c8c8" stroke-width="1"/></svg>
<div style="left:1245.5px;top:53.4px;width:37.7px;height:9.8px;background:#fff;"></div>
<span class="t" style="top:53.40px;font-size:8.5px;line-height:10.5px;color:#000;letter-spacing:-0.19px;left:1249.8px;">0.63509</span>
<span class="t" style="top:365.60px;font-size:8.5px;line-height:10.5px;color:#fff;left:947.2px;">28 Feb 2025</span>
<span class="t" style="top:365.60px;font-size:8.5px;line-height:10.5px;color:#fff;left:1004.96px;">3 Mar 12:00</span>
<span class="t" style="top:365.60px;font-size:8.5px;line-height:10.5px;color:#fff;left:1062.72px;">4 Mar 04:00</span>
<span class="t" style="top:365.60px;font-size:8.5px;line-height:10.5px;color:#fff;left:1120.48px;">4 Mar 20:00</span>
<span class="t" style="top:365.60px;font-size:8.5px;line-height:10.5px;color:#fff;left:1178.24px;">5 Mar 12:00</span>
<svg style="left:951px;top:50px" width="7" height="5" viewBox="0 0 7 5"><path d="M0.3 0.5 H6.3 L3.3 4 Z" fill="#fff"/></svg>
<span class="t" style="top:46.60px;font-size:8.5px;line-height:10.5px;color:#fff;left:961.6px;">AUDUSD.s,H1  0.63296 0.63526 0.63294 0.63509</span>
<span class="t" style="top:260.80px;font-size:8.5px;line-height:10.5px;color:#fff;left:951.5px;">MACD(12,26,9) 0.002360 0.002302</span>
<div style="left:217px;top:390px;width:1063px;height:1px;background:#e4e9f0;"></div>
<div style="left:217px;top:391px;width:1063px;height:1px;background:#444;"></div>
<div style="left:217px;top:392px;width:1063px;height:18px;background:#f0f0f0;"></div>
<div style="left:217px;top:392px;width:1px;height:17px;background:#8a8a8a;"></div>
<span class="t" style="top:394.69px;font-size:11px;line-height:13px;color:#8a8a8a;letter-spacing:-0.04px;left:231px;">GBPUSD.s,M30</span>
<div style="left:320px;top:395px;width:1px;height:13px;background:#777;"></div>
<span class="t" style="top:394.69px;font-size:11px;line-height:13px;color:#8a8a8a;letter-spacing:-0.28px;left:330px;">EURUSD.s,H1</span>
<div style="left:410px;top:391px;width:91px;height:18px;background:#fff;border:1px solid #222;border-top:none;box-sizing:border-box;border-right:2px solid #222;border-bottom:2px solid #222;"></div>
<span class="t" style="top:394.69px;font-size:11px;line-height:13px;color:#000;letter-spacing:-0.19px;left:419.5px;">AUDUSD.s,H1</span>
<svg style="left:1266px;top:397px" width="5" height="7" viewBox="0 0 5 7"><path d="M4.5 0.5 V6.5 L0.5 3.5 Z" fill="#999"/></svg>
<div style="left:0px;top:409px;width:217px;height:1px;background:#a0a0a0;"></div>
<div style="left:0px;top:410px;width:1280px;height:3px;background:#f0f0f0;"></div>
<div style="left:0px;top:413px;width:10px;height:257px;background:#f0f0f0;"></div>
<div style="left:0px;top:426px;width:9px;height:226px;background:linear-gradient(90deg,#b8c8db,#c7d5e6);"></div>
<svg style="left:0px;top:414px" width="9" height="9" viewBox="0 0 9 9"><path d="M0 2 L5 7 M5 2 L0 7" stroke="#000" stroke-width="1.6"/></svg>
<div style="left:10px;top:413px;width:1268px;height:241px;background:#fff;"></div>
<div style="left:10px;top:413px;width:1268px;height:1px;background:#c0c0c0;"></div>
<div style="left:10px;top:414px;width:1268px;height:1px;background:#ececec;"></div>
<div style="left:10px;top:413px;width:1px;height:231px;background:#c8c8c8;"></div>
<span class="t" style="top:418.57px;font-size:10.9px;line-height:12.9px;color:#222;left:15px;">订单</span>
<span class="t" style="top:418.57px;font-size:10.9px;line-height:12.9px;color:#222;right:1033.00px;">时间</span>
<span class="t" style="top:418.57px;font-size:10.9px;line-height:12.9px;color:#222;right:963.00px;">类型</span>
<span class="t" style="top:418.57px;font-size:10.9px;line-height:12.9px;color:#222;right:908.00px;">手数</span>
<span class="t" style="top:418.57px;font-size:10.9px;line-height:12.9px;color:#222;right:837.00px;">交易品种</span>
<span class="t" style="top:418.57px;font-size:10.9px;line-height:12.9px;color:#222;right:759.00px;">价格</span>
<span class="t" style="top:418.57px;font-size:10.9px;line-height:12.9px;color:#222;right:680.00px;">止损</span>
<span class="t" style="top:418.57px;font-size:10.9px;line-height:12.9px;color:#222;right:601.00px;">止盈</span>
<span class="t" style="top:418.57px;font-size:10.9px;line-height:12.9px;color:#222;right:523.00px;">价格</span>
<span class="t" style="top:418.57px;font-size:10.9px;line-height:12.9px;color:#222;right:444.00px;">手续费</span>
<span class="t" style="top:418.57px;font-size:10.9px;line-height:12.9px;color:#222;right:365.00px;">库存费</span>
<span class="t" style="top:418.57px;font-size:10.9px;line-height:12.9px;color:#222;right:249.00px;">获利</span>
<span class="t" style="top:418.57px;font-size:10.9px;line-height:12.9px;color:#222;right:8.00px;">注释</span>
<svg style="left:47px;top:424px" width="5" height="7" viewBox="0 0 5 7"><path d="M0.8 6.5 L4 0.8" stroke="#888" stroke-width="1"/></svg>
<div style="left:111px;top:414px;width:1px;height:22px;background:#e2e2e2;"></div>
<div style="left:252px;top:414px;width:1px;height:22px;background:#e2e2e2;"></div>
<div style="left:322px;top:414px;width:1px;height:22px;background:#e2e2e2;"></div>
<div style="left:377px;top:414px;width:1px;height:22px;background:#e2e2e2;"></div>
<div style="left:448px;top:414px;width:1px;height:22px;background:#e2e2e2;"></div>
<div style="left:526px;top:414px;width:1px;height:22px;background:#e2e2e2;"></div>
<div style="left:605px;top:414px;width:1px;height:22px;background:#e2e2e2;"></div>
<div style="left:684px;top:414px;width:1px;height:22px;background:#e2e2e2;"></div>
<div style="left:762px;top:414px;width:1px;height:22px;background:#e2e2e2;"></div>
<div style="left:841px;top:414px;width:1px;height:22px;background:#e2e2e2;"></div>
<div style="left:920px;top:414px;width:1px;height:22px;background:#e2e2e2;"></div>
<div style="left:1036px;top:414px;width:1px;height:22px;background:#e2e2e2;"></div>
<div style="left:10px;top:436px;width:1268px;height:1px;background:#d4d4d4;"></div>
<div style="left:11px;top:436.9px;width:1266px;height:19.5px;background:#fff;"></div>
<div style="left:11px;top:455.83px;width:1266px;height:19.5px;background:#ebebeb;"></div>
<div style="left:11px;top:474.76px;width:1266px;height:19.5px;background:#fff;"></div>
<div style="left:11px;top:493.69px;width:1266px;height:19.5px;background:#ebebeb;"></div>
<div style="left:11px;top:512.62px;width:1266px;height:19.5px;background:#fff;"></div>
<div style="left:11px;top:531.55px;width:1266px;height:19.5px;background:#ebebeb;"></div>
<div style="left:11px;top:550.48px;width:1266px;height:19.5px;background:#fff;"></div>
<div style="left:11px;top:569.41px;width:1266px;height:19.5px;background:#ebebeb;"></div>
<div style="left:11px;top:588.34px;width:1266px;height:19.5px;background:#fff;"></div>
<div style="left:11px;top:607.27px;width:1266px;height:19.5px;background:#ebebeb;"></div>
<div style="left:11px;top:454.84999999999997px;width:1266px;height:1px;background:#d4d4d4;"></div>
<div style="left:110px;top:436.9px;width:1px;height:18.93px;background:#d2d2d2;"></div>
<div style="left:251px;top:436.9px;width:1px;height:18.93px;background:#d2d2d2;"></div>
<div style="left:321px;top:436.9px;width:1px;height:18.93px;background:#d2d2d2;"></div>
<div style="left:376px;top:436.9px;width:1px;height:18.93px;background:#d2d2d2;"></div>
<div style="left:447px;top:436.9px;width:1px;height:18.93px;background:#d2d2d2;"></div>
<div style="left:525px;top:436.9px;width:1px;height:18.93px;background:#d2d2d2;"></div>
<div style="left:604px;top:436.9px;width:1px;height:18.93px;background:#d2d2d2;"></div>
<div style="left:683px;top:436.9px;width:1px;height:18.93px;background:#d2d2d2;"></div>
<div style="left:761px;top:436.9px;width:1px;height:18.93px;background:#d2d2d2;"></div>
<div style="left:840px;top:436.9px;width:1px;height:18.93px;background:#d2d2d2;"></div>
<div style="left:919px;top:436.9px;width:1px;height:18.93px;background:#d2d2d2;"></div>
<div style="left:1035px;top:436.9px;width:1px;height:18.93px;background:#d2d2d2;"></div>
<svg style="left:12px;top:438.9px" width="13" height="14" viewBox="0 0 13 14"><path d="M1.5 1 H6.5 L9.5 4 V12 H1.5 Z" fill="#fff" stroke="#8a8a8a" stroke-width="1"/><path d="M6.5 1 V4 H9.5" fill="none" stroke="#8a8a8a" stroke-width="1"/><path d="M1 12.6 H9" stroke="#bbb" stroke-width="1"/><circle cx="9" cy="10.5" r="2.8" fill="#2f9bf0" stroke="#1873c8" stroke-width="0.8"/></svg>
<span class="t" style="top:439.39px;font-size:11px;line-height:13px;color:#222;letter-spacing:0.19px;left:30px;">37552540</span>
<span class="t" style="top:439.39px;font-size:11px;line-height:13px;color:#222;letter-spacing:0.11px;right:1030.39px;">2025.03.05 06:38:20</span>
<span class="t" style="top:439.39px;font-size:11px;line-height:13px;color:#222;letter-spacing:0.42px;right:959.58px;">buy</span>
<span class="t" style="top:439.39px;font-size:11px;line-height:13px;color:#222;letter-spacing:0.15px;right:904.85px;">1.00</span>
<span class="t" style="top:439.39px;font-size:11px;line-height:13px;color:#222;letter-spacing:0.23px;right:834.27px;">eurusd.s</span>
<span class="t" style="top:439.39px;font-size:11px;line-height:13px;color:#222;letter-spacing:0.11px;right:755.89px;">1.06256</span>
<span class="t" style="top:439.39px;font-size:11px;line-height:13px;color:#222;letter-spacing:0.11px;right:677.39px;">0.00000</span>
<span class="t" style="top:439.39px;font-size:11px;line-height:13px;color:#222;letter-spacing:0.11px;right:598.39px;">0.00000</span>
<span class="t" style="top:439.39px;font-size:11px;line-height:13px;color:#222;letter-spacing:0.11px;right:519.89px;">1.08152</span>
<span class="t" style="top:439.39px;font-size:11px;line-height:13px;color:#222;letter-spacing:0.15px;right:440.85px;">0.00</span>
<span class="t" style="top:439.39px;font-size:11px;line-height:13px;color:#222;letter-spacing:0.13px;right:362.87px;">-19.85</span>
<span class="t" style="top:439.39px;font-size:11px;line-height:13px;color:#222;letter-spacing:0.15px;right:264.35px;">1 896.00</span>
<svg style="left:1023px;top:441.9px" width="9" height="9" viewBox="0 0 9 9"><path d="M1.2 1.2 L7.8 7.8 M7.8 1.2 L1.2 7.8" stroke="#8c8c8c" stroke-width="1.5"/></svg>
<span class="t" style="top:439.39px;font-size:11px;line-height:13px;color:#222;letter-spacing:0.53px;right:5.47px;">M60</span>
<div style="left:11px;top:473.78px;width:1266px;height:1px;background:#d4d4d4;"></div>
<div style="left:110px;top:455.83px;width:1px;height:18.93px;background:#d2d2d2;"></div>
<div style="left:251px;top:455.83px;width:1px;height:18.93px;background:#d2d2d2;"></div>
<div style="left:321px;top:455.83px;width:1px;height:18.93px;background:#d2d2d2;"></div>
<div style="left:376px;top:455.83px;width:1px;height:18.93px;background:#d2d2d2;"></div>
<div style="left:447px;top:455.83px;width:1px;height:18.93px;background:#d2d2d2;"></div>
<div style="left:525px;top:455.83px;width:1px;height:18.93px;background:#d2d2d2;"></div>
<div style="left:604px;top:455.83px;width:1px;height:18.93px;background:#d2d2d2;"></div>
<div style="left:683px;top:455.83px;width:1px;height:18.93px;background:#d2d2d2;"></div>
<div style="left:761px;top:455.83px;width:1px;height:18.93px;background:#d2d2d2;"></div>
<div style="left:840px;top:455.83px;width:1px;height:18.93px;background:#d2d2d2;"></div>
<div style="left:919px;top:455.83px;width:1px;height:18.93px;background:#d2d2d2;"></div>
<div style="left:1035px;top:455.83px;width:1px;height:18.93px;background:#d2d2d2;"></div>
<svg style="left:12px;top:457.83px" width="13" height="14" viewBox="0 0 13 14"><path d="M1.5 1 H6.5 L9.5 4 V12 H1.5 Z" fill="#fff" stroke="#8a8a8a" stroke-width="1"/><path d="M6.5 1 V4 H9.5" fill="none" stroke="#8a8a8a" stroke-width="1"/><path d="M1 12.6 H9" stroke="#bbb" stroke-width="1"/><circle cx="9" cy="10.5" r="2.8" fill="#2f9bf0" stroke="#1873c8" stroke-width="0.8"/></svg>
<span class="t" style="top:458.32px;font-size:11px;line-height:13px;color:#222;letter-spacing:0.19px;left:30px;">37552541</span>
<span class="t" style="top:458.32px;font-size:11px;line-height:13px;color:#222;letter-spacing:0.11px;right:1030.39px;">2025.03.05 08:02:59</span>
<span class="t" style="top:458.32px;font-size:11px;line-height:13px;color:#222;letter-spacing:0.42px;right:959.58px;">buy</span>
<span class="t" style="top:458.32px;font-size:11px;line-height:13px;color:#222;letter-spacing:0.15px;right:904.85px;">1.00</span>
<span class="t" style="top:458.32px;font-size:11px;line-height:13px;color:#222;letter-spacing:0.23px;right:834.27px;">eurusd.s</span>
<span class="t" style="top:458.32px;font-size:11px;line-height:13px;color:#222;letter-spacing:0.11px;right:755.89px;">1.06356</span>
<span class="t" style="top:458.32px;font-size:11px;line-height:13px;color:#222;letter-spacing:0.11px;right:677.39px;">0.00000</span>
<span class="t" style="top:458.32px;font-size:11px;line-height:13px;color:#222;letter-spacing:0.11px;right:598.39px;">0.00000</span>
<span class="t" style="top:458.32px;font-size:11px;line-height:13px;color:#222;letter-spacing:0.11px;right:519.89px;">1.08152</span>
<span class="t" style="top:458.32px;font-size:11px;line-height:13px;color:#222;letter-spacing:0.15px;right:440.85px;">0.00</span>
<span class="t" style="top:458.32px;font-size:11px;line-height:13px;color:#222;letter-spacing:0.13px;right:362.87px;">-19.85</span>
<span class="t" style="top:458.32px;font-size:11px;line-height:13px;color:#222;letter-spacing:0.15px;right:264.35px;">1 796.00</span>
<svg style="left:1023px;top:460.83px" width="9" height="9" viewBox="0 0 9 9"><path d="M1.2 1.2 L7.8 7.8 M7.8 1.2 L1.2 7.8" stroke="#8c8c8c" stroke-width="1.5"/></svg>
<span class="t" style="top:458.32px;font-size:11px;line-height:13px;color:#222;letter-spacing:0.53px;right:5.47px;">M60</span>
<div style="left:11px;top:492.71px;width:1266px;height:1px;background:#d4d4d4;"></div>
<div style="left:110px;top:474.76px;width:1px;height:18.93px;background:#d2d2d2;"></div>
<div style="left:251px;top:474.76px;width:1px;height:18.93px;background:#d2d2d2;"></div>
<div style="left:321px;top:474.76px;width:1px;height:18.93px;background:#d2d2d2;"></div>
<div style="left:376px;top:474.76px;width:1px;height:18.93px;background:#d2d2d2;"></div>
<div style="left:447px;top:474.76px;width:1px;height:18.93px;background:#d2d2d2;"></div>
<div style="left:525px;top:474.76px;width:1px;height:18.93px;background:#d2d2d2;"></div>
<div style="left:604px;top:474.76px;width:1px;height:18.93px;background:#d2d2d2;"></div>
<div style="left:683px;top:474.76px;width:1px;height:18.93px;background:#d2d2d2;"></div>
<div style="left:761px;top:474.76px;width:1px;height:18.93px;background:#d2d2d2;"></div>
<div style="left:840px;top:474.76px;width:1px;height:18.93px;background:#d2d2d2;"></div>
<div style="left:919px;top:474.76px;width:1px;height:18.93px;background:#d2d2d2;"></div>
<div style="left:1035px;top:474.76px;width:1px;height:18.93px;background:#d2d2d2;"></div>
<svg style="left:12px;top:476.76px" width="13" height="14" viewBox="0 0 13 14"><path d="M1.5 1 H6.5 L9.5 4 V12 H1.5 Z" fill="#fff" stroke="#8a8a8a" stroke-width="1"/><path d="M6.5 1 V4 H9.5" fill="none" stroke="#8a8a8a" stroke-width="1"/><path d="M1 12.6 H9" stroke="#bbb" stroke-width="1"/><circle cx="9" cy="10.5" r="2.8" fill="#2f9bf0" stroke="#1873c8" stroke-width="0.8"/></svg>
<span class="t" style="top:477.25px;font-size:11px;line-height:13px;color:#222;letter-spacing:0.19px;left:30px;">37552542</span>
<span class="t" style="top:477.25px;font-size:11px;line-height:13px;color:#222;letter-spacing:0.11px;right:1030.39px;">2025.03.05 09:25:50</span>
<span class="t" style="top:477.25px;font-size:11px;line-height:13px;color:#222;letter-spacing:0.42px;right:959.58px;">buy</span>
<span class="t" style="top:477.25px;font-size:11px;line-height:13px;color:#222;letter-spacing:0.15px;right:904.85px;">1.00</span>
<span class="t" style="top:477.25px;font-size:11px;line-height:13px;color:#222;letter-spacing:0.23px;right:834.27px;">eurusd.s</span>
<span class="t" style="top:477.25px;font-size:11px;line-height:13px;color:#222;letter-spacing:0.11px;right:755.89px;">1.06455</span>
<span class="t" style="top:477.25px;font-size:11px;line-height:13px;color:#222;letter-spacing:0.11px;right:677.39px;">0.00000</span>
<span class="t" style="top:477.25px;font-size:11px;line-height:13px;color:#222;letter-spacing:0.11px;right:598.39px;">0.00000</span>
<span class="t" style="top:477.25px;font-size:11px;line-height:13px;color:#222;letter-spacing:0.11px;right:519.89px;">1.08152</span>
<span class="t" style="top:477.25px;font-size:11px;line-height:13px;color:#222;letter-spacing:0.15px;right:440.85px;">0.00</span>
<span class="t" style="top:477.25px;font-size:11px;line-height:13px;color:#222;letter-spacing:0.13px;right:362.87px;">-19.85</span>
<span class="t" style="top:477.25px;font-size:11px;line-height:13px;color:#222;letter-spacing:0.15px;right:264.35px;">1 697.00</span>
<svg style="left:1023px;top:479.76px" width="9" height="9" viewBox="0 0 9 9"><path d="M1.2 1.2 L7.8 7.8 M7.8 1.2 L1.2 7.8" stroke="#8c8c8c" stroke-width="1.5"/></svg>
<span class="t" style="top:477.25px;font-size:11px;line-height:13px;color:#222;letter-spacing:0.53px;right:5.47px;">M60</span>
<div style="left:11px;top:511.64px;width:1266px;height:1px;background:#d4d4d4;"></div>
<div style="left:110px;top:493.69px;width:1px;height:18.93px;background:#d2d2d2;"></div>
<div style="left:251px;top:493.69px;width:1px;height:18.93px;background:#d2d2d2;"></div>
<div style="left:321px;top:493.69px;width:1px;height:18.93px;background:#d2d2d2;"></div>
<div style="left:376px;top:493.69px;width:1px;height:18.93px;background:#d2d2d2;"></div>
<div style="left:447px;top:493.69px;width:1px;height:18.93px;background:#d2d2d2;"></div>
<div style="left:525px;top:493.69px;width:1px;height:18.93px;background:#d2d2d2;"></div>
<div style="left:604px;top:493.69px;width:1px;height:18.93px;background:#d2d2d2;"></div>
<div style="left:683px;top:493.69px;width:1px;height:18.93px;background:#d2d2d2;"></div>
<div style="left:761px;top:493.69px;width:1px;height:18.93px;background:#d2d2d2;"></div>
<div style="left:840px;top:493.69px;width:1px;height:18.93px;background:#d2d2d2;"></div>
<div style="left:919px;top:493.69px;width:1px;height:18.93px;background:#d2d2d2;"></div>
<div style="left:1035px;top:493.69px;width:1px;height:18.93px;background:#d2d2d2;"></div>
<svg style="left:12px;top:495.69px" width="13" height="14" viewBox="0 0 13 14"><path d="M1.5 1 H6.5 L9.5 4 V12 H1.5 Z" fill="#fff" stroke="#8a8a8a" stroke-width="1"/><path d="M6.5 1 V4 H9.5" fill="none" stroke="#8a8a8a" stroke-width="1"/><path d="M1 12.6 H9" stroke="#bbb" stroke-width="1"/><circle cx="9" cy="10.5" r="2.8" fill="#2f9bf0" stroke="#1873c8" stroke-width="0.8"/></svg>
<span class="t" style="top:496.18px;font-size:11px;line-height:13px;color:#222;letter-spacing:0.19px;left:30px;">37552543</span>
<span class="t" style="top:496.18px;font-size:11px;line-height:13px;color:#222;letter-spacing:0.11px;right:1030.39px;">2025.03.05 09:27:15</span>
<span class="t" style="top:496.18px;font-size:11px;line-height:13px;color:#222;letter-spacing:0.42px;right:959.58px;">buy</span>
<span class="t" style="top:496.18px;font-size:11px;line-height:13px;color:#222;letter-spacing:0.15px;right:904.85px;">1.00</span>
<span class="t" style="top:496.18px;font-size:11px;line-height:13px;color:#222;letter-spacing:0.23px;right:834.27px;">eurusd.s</span>
<span class="t" style="top:496.18px;font-size:11px;line-height:13px;color:#222;letter-spacing:0.11px;right:755.89px;">1.06555</span>
<span class="t" style="top:496.18px;font-size:11px;line-height:13px;color:#222;letter-spacing:0.11px;right:677.39px;">0.00000</span>
<span class="t" style="top:496.18px;font-size:11px;line-height:13px;color:#222;letter-spacing:0.11px;right:598.39px;">0.00000</span>
<span class="t" style="top:496.18px;font-size:11px;line-height:13px;color:#222;letter-spacing:0.11px;right:519.89px;">1.08152</span>
<span class="t" style="top:496.18px;font-size:11px;line-height:13px;color:#222;letter-spacing:0.15px;right:440.85px;">0.00</span>
<span class="t" style="top:496.18px;font-size:11px;line-height:13px;color:#222;letter-spacing:0.13px;right:362.87px;">-19.85</span>
<span class="t" style="top:496.18px;font-size:11px;line-height:13px;color:#222;letter-spacing:0.15px;right:264.35px;">1 597.00</span>
<svg style="left:1023px;top:498.69px" width="9" height="9" viewBox="0 0 9 9"><path d="M1.2 1.2 L7.8 7.8 M7.8 1.2 L1.2 7.8" stroke="#8c8c8c" stroke-width="1.5"/></svg>
<span class="t" style="top:496.18px;font-size:11px;line-height:13px;color:#222;letter-spacing:0.53px;right:5.47px;">M60</span>
<div style="left:11px;top:530.57px;width:1266px;height:1px;background:#d4d4d4;"></div>
<div style="left:110px;top:512.62px;width:1px;height:18.93px;background:#d2d2d2;"></div>
<div style="left:251px;top:512.62px;width:1px;height:18.93px;background:#d2d2d2;"></div>
<div style="left:321px;top:512.62px;width:1px;height:18.93px;background:#d2d2d2;"></div>
<div style="left:376px;top:512.62px;width:1px;height:18.93px;background:#d2d2d2;"></div>
<div style="left:447px;top:512.62px;width:1px;height:18.93px;background:#d2d2d2;"></div>
<div style="left:525px;top:512.62px;width:1px;height:18.93px;background:#d2d2d2;"></div>
<div style="left:604px;top:512.62px;width:1px;height:18.93px;background:#d2d2d2;"></div>
<div style="left:683px;top:512.62px;width:1px;height:18.93px;background:#d2d2d2;"></div>
<div style="left:761px;top:512.62px;width:1px;height:18.93px;background:#d2d2d2;"></div>
<div style="left:840px;top:512.62px;width:1px;height:18.93px;background:#d2d2d2;"></div>
<div style="left:919px;top:512.62px;width:1px;height:18.93px;background:#d2d2d2;"></div>
<div style="left:1035px;top:512.62px;width:1px;height:18.93px;background:#d2d2d2;"></div>
<svg style="left:12px;top:514.62px" width="13" height="14" viewBox="0 0 13 14"><path d="M1.5 1 H6.5 L9.5 4 V12 H1.5 Z" fill="#fff" stroke="#8a8a8a" stroke-width="1"/><path d="M6.5 1 V4 H9.5" fill="none" stroke="#8a8a8a" stroke-width="1"/><path d="M1 12.6 H9" stroke="#bbb" stroke-width="1"/><circle cx="9" cy="10.5" r="2.8" fill="#2f9bf0" stroke="#1873c8" stroke-width="0.8"/></svg>
<span class="t" style="top:515.11px;font-size:11px;line-height:13px;color:#222;letter-spacing:0.19px;left:30px;">37552544</span>
<span class="t" style="top:515.11px;font-size:11px;line-height:13px;color:#222;letter-spacing:0.11px;right:1030.39px;">2025.03.05 09:38:27</span>
<span class="t" style="top:515.11px;font-size:11px;line-height:13px;color:#222;letter-spacing:0.42px;right:959.58px;">buy</span>
<span class="t" style="top:515.11px;font-size:11px;line-height:13px;color:#222;letter-spacing:0.15px;right:904.85px;">1.00</span>
<span class="t" style="top:515.11px;font-size:11px;line-height:13px;color:#222;letter-spacing:0.23px;right:834.27px;">eurusd.s</span>
<span class="t" style="top:515.11px;font-size:11px;line-height:13px;color:#222;letter-spacing:0.11px;right:755.89px;">1.06655</span>
<span class="t" style="top:515.11px;font-size:11px;line-height:13px;color:#222;letter-spacing:0.11px;right:677.39px;">0.00000</span>
<span class="t" style="top:515.11px;font-size:11px;line-height:13px;color:#222;letter-spacing:0.11px;right:598.39px;">0.00000</span>
<span class="t" style="top:515.11px;font-size:11px;line-height:13px;color:#222;letter-spacing:0.11px;right:519.89px;">1.08152</span>
<span class="t" style="top:515.11px;font-size:11px;line-height:13px;color:#222;letter-spacing:0.15px;right:440.85px;">0.00</span>
<span class="t" style="top:515.11px;font-size:11px;line-height:13px;color:#222;letter-spacing:0.13px;right:362.87px;">-19.85</span>
<span class="t" style="top:515.11px;font-size:11px;line-height:13px;color:#222;letter-spacing:0.15px;right:264.35px;">1 497.00</span>
<svg style="left:1023px;top:517.62px" width="9" height="9" viewBox="0 0 9 9"><path d="M1.2 1.2 L7.8 7.8 M7.8 1.2 L1.2 7.8" stroke="#8c8c8c" stroke-width="1.5"/></svg>
<span class="t" style="top:515.11px;font-size:11px;line-height:13px;color:#222;letter-spacing:0.53px;right:5.47px;">M60</span>
<div style="left:11px;top:549.5px;width:1266px;height:1px;background:#d4d4d4;"></div>
<div style="left:110px;top:531.55px;width:1px;height:18.93px;background:#d2d2d2;"></div>
<div style="left:251px;top:531.55px;width:1px;height:18.93px;background:#d2d2d2;"></div>
<div style="left:321px;top:531.55px;width:1px;height:18.93px;background:#d2d2d2;"></div>
<div style="left:376px;top:531.55px;width:1px;height:18.93px;background:#d2d2d2;"></div>
<div style="left:447px;top:531.55px;width:1px;height:18.93px;background:#d2d2d2;"></div>
<div style="left:525px;top:531.55px;width:1px;height:18.93px;background:#d2d2d2;"></div>
<div style="left:604px;top:531.55px;width:1px;height:18.93px;background:#d2d2d2;"></div>
<div style="left:683px;top:531.55px;width:1px;height:18.93px;background:#d2d2d2;"></div>
<div style="left:761px;top:531.55px;width:1px;height:18.93px;background:#d2d2d2;"></div>
<div style="left:840px;top:531.55px;width:1px;height:18.93px;background:#d2d2d2;"></div>
<div style="left:919px;top:531.55px;width:1px;height:18.93px;background:#d2d2d2;"></div>
<div style="left:1035px;top:531.55px;width:1px;height:18.93px;background:#d2d2d2;"></div>
<svg style="left:12px;top:533.55px" width="13" height="14" viewBox="0 0 13 14"><path d="M1.5 1 H6.5 L9.5 4 V12 H1.5 Z" fill="#fff" stroke="#8a8a8a" stroke-width="1"/><path d="M6.5 1 V4 H9.5" fill="none" stroke="#8a8a8a" stroke-width="1"/><path d="M1 12.6 H9" stroke="#bbb" stroke-width="1"/><circle cx="9" cy="10.5" r="2.8" fill="#2f9bf0" stroke="#1873c8" stroke-width="0.8"/></svg>
<span class="t" style="top:534.04px;font-size:11px;line-height:13px;color:#222;letter-spacing:0.19px;left:30px;">37552545</span>
<span class="t" style="top:534.04px;font-size:11px;line-height:13px;color:#222;letter-spacing:0.11px;right:1030.39px;">2025.03.05 09:58:23</span>
<span class="t" style="top:534.04px;font-size:11px;line-height:13px;color:#222;letter-spacing:0.42px;right:959.58px;">buy</span>
<span class="t" style="top:534.04px;font-size:11px;line-height:13px;color:#222;letter-spacing:0.15px;right:904.85px;">1.00</span>
<span class="t" style="top:534.04px;font-size:11px;line-height:13px;color:#222;letter-spacing:0.23px;right:834.27px;">eurusd.s</span>
<span class="t" style="top:534.04px;font-size:11px;line-height:13px;color:#222;letter-spacing:0.11px;right:755.89px;">1.06756</span>
<span class="t" style="top:534.04px;font-size:11px;line-height:13px;color:#222;letter-spacing:0.11px;right:677.39px;">0.00000</span>
<span class="t" style="top:534.04px;font-size:11px;line-height:13px;color:#222;letter-spacing:0.11px;right:598.39px;">0.00000</span>
<span class="t" style="top:534.04px;font-size:11px;line-height:13px;color:#222;letter-spacing:0.11px;right:519.89px;">1.08152</span>
<span class="t" style="top:534.04px;font-size:11px;line-height:13px;color:#222;letter-spacing:0.15px;right:440.85px;">0.00</span>
<span class="t" style="top:534.04px;font-size:11px;line-height:13px;color:#222;letter-spacing:0.13px;right:362.87px;">-19.85</span>
<span class="t" style="top:534.04px;font-size:11px;line-height:13px;color:#222;letter-spacing:0.15px;right:264.35px;">1 396.00</span>
<svg style="left:1023px;top:536.55px" width="9" height="9" viewBox="0 0 9 9"><path d="M1.2 1.2 L7.8 7.8 M7.8 1.2 L1.2 7.8" stroke="#8c8c8c" stroke-width="1.5"/></svg>
<span class="t" style="top:534.04px;font-size:11px;line-height:13px;color:#222;letter-spacing:0.53px;right:5.47px;">M60</span>
<div style="left:11px;top:568.4300000000001px;width:1266px;height:1px;background:#d4d4d4;"></div>
<div style="left:110px;top:550.48px;width:1px;height:18.93px;background:#d2d2d2;"></div>
<div style="left:251px;top:550.48px;width:1px;height:18.93px;background:#d2d2d2;"></div>
<div style="left:321px;top:550.48px;width:1px;height:18.93px;background:#d2d2d2;"></div>
<div style="left:376px;top:550.48px;width:1px;height:18.93px;background:#d2d2d2;"></div>
<div style="left:447px;top:550.48px;width:1px;height:18.93px;background:#d2d2d2;"></div>
<div style="left:525px;top:550.48px;width:1px;height:18.93px;background:#d2d2d2;"></div>
<div style="left:604px;top:550.48px;width:1px;height:18.93px;background:#d2d2d2;"></div>
<div style="left:683px;top:550.48px;width:1px;height:18.93px;background:#d2d2d2;"></div>
<div style="left:761px;top:550.48px;width:1px;height:18.93px;background:#d2d2d2;"></div>
<div style="left:840px;top:550.48px;width:1px;height:18.93px;background:#d2d2d2;"></div>
<div style="left:919px;top:550.48px;width:1px;height:18.93px;background:#d2d2d2;"></div>
<div style="left:1035px;top:550.48px;width:1px;height:18.93px;background:#d2d2d2;"></div>
<svg style="left:12px;top:552.48px" width="13" height="14" viewBox="0 0 13 14"><path d="M1.5 1 H6.5 L9.5 4 V12 H1.5 Z" fill="#fff" stroke="#8a8a8a" stroke-width="1"/><path d="M6.5 1 V4 H9.5" fill="none" stroke="#8a8a8a" stroke-width="1"/><path d="M1 12.6 H9" stroke="#bbb" stroke-width="1"/><circle cx="9" cy="10.5" r="2.8" fill="#2f9bf0" stroke="#1873c8" stroke-width="0.8"/></svg>
<span class="t" style="top:552.97px;font-size:11px;line-height:13px;color:#222;letter-spacing:0.19px;left:30px;">37552546</span>
<span class="t" style="top:552.97px;font-size:11px;line-height:13px;color:#222;letter-spacing:0.11px;right:1030.39px;">2025.03.05 10:16:29</span>
<span class="t" style="top:552.97px;font-size:11px;line-height:13px;color:#222;letter-spacing:0.42px;right:959.58px;">buy</span>
<span class="t" style="top:552.97px;font-size:11px;line-height:13px;color:#222;letter-spacing:0.15px;right:904.85px;">1.00</span>
<span class="t" style="top:552.97px;font-size:11px;line-height:13px;color:#222;letter-spacing:0.23px;right:834.27px;">eurusd.s</span>
<span class="t" style="top:552.97px;font-size:11px;line-height:13px;color:#222;letter-spacing:0.11px;right:755.89px;">1.06856</span>
<span class="t" style="top:552.97px;font-size:11px;line-height:13px;color:#222;letter-spacing:0.11px;right:677.39px;">0.00000</span>
<span class="t" style="top:552.97px;font-size:11px;line-height:13px;color:#222;letter-spacing:0.11px;right:598.39px;">0.00000</span>
<span class="t" style="top:552.97px;font-size:11px;line-height:13px;color:#222;letter-spacing:0.11px;right:519.89px;">1.08152</span>
<span class="t" style="top:552.97px;font-size:11px;line-height:13px;color:#222;letter-spacing:0.15px;right:440.85px;">0.00</span>
<span class="t" style="top:552.97px;font-size:11px;line-height:13px;color:#222;letter-spacing:0.13px;right:362.87px;">-19.85</span>
<span class="t" style="top:552.97px;font-size:11px;line-height:13px;color:#222;letter-spacing:0.15px;right:264.35px;">1 296.00</span>
<svg style="left:1023px;top:555.48px" width="9" height="9" viewBox="0 0 9 9"><path d="M1.2 1.2 L7.8 7.8 M7.8 1.2 L1.2 7.8" stroke="#8c8c8c" stroke-width="1.5"/></svg>
<span class="t" style="top:552.97px;font-size:11px;line-height:13px;color:#222;letter-spacing:0.53px;right:5.47px;">M60</span>
<div style="left:11px;top:587.36px;width:1266px;height:1px;background:#d4d4d4;"></div>
<div style="left:110px;top:569.41px;width:1px;height:18.93px;background:#d2d2d2;"></div>
<div style="left:251px;top:569.41px;width:1px;height:18.93px;background:#d2d2d2;"></div>
<div style="left:321px;top:569.41px;width:1px;height:18.93px;background:#d2d2d2;"></div>
<div style="left:376px;top:569.41px;width:1px;height:18.93px;background:#d2d2d2;"></div>
<div style="left:447px;top:569.41px;width:1px;height:18.93px;background:#d2d2d2;"></div>
<div style="left:525px;top:569.41px;width:1px;height:18.93px;background:#d2d2d2;"></div>
<div style="left:604px;top:569.41px;width:1px;height:18.93px;background:#d2d2d2;"></div>
<div style="left:683px;top:569.41px;width:1px;height:18.93px;background:#d2d2d2;"></div>
<div style="left:761px;top:569.41px;width:1px;height:18.93px;background:#d2d2d2;"></div>
<div style="left:840px;top:569.41px;width:1px;height:18.93px;background:#d2d2d2;"></div>
<div style="left:919px;top:569.41px;width:1px;height:18.93px;background:#d2d2d2;"></div>
<div style="left:1035px;top:569.41px;width:1px;height:18.93px;background:#d2d2d2;"></div>
<svg style="left:12px;top:571.41px" width="13" height="14" viewBox="0 0 13 14"><path d="M1.5 1 H6.5 L9.5 4 V12 H1.5 Z" fill="#fff" stroke="#8a8a8a" stroke-width="1"/><path d="M6.5 1 V4 H9.5" fill="none" stroke="#8a8a8a" stroke-width="1"/><path d="M1 12.6 H9" stroke="#bbb" stroke-width="1"/><circle cx="9" cy="10.5" r="2.8" fill="#2f9bf0" stroke="#1873c8" stroke-width="0.8"/></svg>
<span class="t" style="top:571.90px;font-size:11px;line-height:13px;color:#222;letter-spacing:0.19px;left:30px;">37552547</span>
<span class="t" style="top:571.90px;font-size:11px;line-height:13px;color:#222;letter-spacing:0.11px;right:1030.39px;">2025.03.05 10:45:58</span>
<span class="t" style="top:571.90px;font-size:11px;line-height:13px;color:#222;letter-spacing:0.42px;right:959.58px;">buy</span>
<span class="t" style="top:571.90px;font-size:11px;line-height:13px;color:#222;letter-spacing:0.15px;right:904.85px;">1.00</span>
<span class="t" style="top:571.90px;font-size:11px;line-height:13px;color:#222;letter-spacing:0.23px;right:834.27px;">eurusd.s</span>
<span class="t" style="top:571.90px;font-size:11px;line-height:13px;color:#222;letter-spacing:0.11px;right:755.89px;">1.06956</span>
<span class="t" style="top:571.90px;font-size:11px;line-height:13px;color:#222;letter-spacing:0.11px;right:677.39px;">0.00000</span>
<span class="t" style="top:571.90px;font-size:11px;line-height:13px;color:#222;letter-spacing:0.11px;right:598.39px;">0.00000</span>
<span class="t" style="top:571.90px;font-size:11px;line-height:13px;color:#222;letter-spacing:0.11px;right:519.89px;">1.08152</span>
<span class="t" style="top:571.90px;font-size:11px;line-height:13px;color:#222;letter-spacing:0.15px;right:440.85px;">0.00</span>
<span class="t" style="top:571.90px;font-size:11px;line-height:13px;color:#222;letter-spacing:0.13px;right:362.87px;">-19.85</span>
<span class="t" style="top:571.90px;font-size:11px;line-height:13px;color:#222;letter-spacing:0.15px;right:264.35px;">1 196.00</span>
<svg style="left:1023px;top:574.41px" width="9" height="9" viewBox="0 0 9 9"><path d="M1.2 1.2 L7.8 7.8 M7.8 1.2 L1.2 7.8" stroke="#8c8c8c" stroke-width="1.5"/></svg>
<span class="t" style="top:571.90px;font-size:11px;line-height:13px;color:#222;letter-spacing:0.53px;right:5.47px;">M60</span>
<div style="left:11px;top:606.2900000000001px;width:1266px;height:1px;background:#d4d4d4;"></div>
<div style="left:110px;top:588.34px;width:1px;height:18.93px;background:#d2d2d2;"></div>
<div style="left:251px;top:588.34px;width:1px;height:18.93px;background:#d2d2d2;"></div>
<div style="left:321px;top:588.34px;width:1px;height:18.93px;background:#d2d2d2;"></div>
<div style="left:376px;top:588.34px;width:1px;height:18.93px;background:#d2d2d2;"></div>
<div style="left:447px;top:588.34px;width:1px;height:18.93px;background:#d2d2d2;"></div>
<div style="left:525px;top:588.34px;width:1px;height:18.93px;background:#d2d2d2;"></div>
<div style="left:604px;top:588.34px;width:1px;height:18.93px;background:#d2d2d2;"></div>
<div style="left:683px;top:588.34px;width:1px;height:18.93px;background:#d2d2d2;"></div>
<div style="left:761px;top:588.34px;width:1px;height:18.93px;background:#d2d2d2;"></div>
<div style="left:840px;top:588.34px;width:1px;height:18.93px;background:#d2d2d2;"></div>
<div style="left:919px;top:588.34px;width:1px;height:18.93px;background:#d2d2d2;"></div>
<div style="left:1035px;top:588.34px;width:1px;height:18.93px;background:#d2d2d2;"></div>
<svg style="left:12px;top:590.34px" width="13" height="14" viewBox="0 0 13 14"><path d="M1.5 1 H6.5 L9.5 4 V12 H1.5 Z" fill="#fff" stroke="#8a8a8a" stroke-width="1"/><path d="M6.5 1 V4 H9.5" fill="none" stroke="#8a8a8a" stroke-width="1"/><path d="M1 12.6 H9" stroke="#bbb" stroke-width="1"/><circle cx="9" cy="10.5" r="2.8" fill="#2f9bf0" stroke="#1873c8" stroke-width="0.8"/></svg>
<span class="t" style="top:590.83px;font-size:11px;line-height:13px;color:#222;letter-spacing:0.19px;left:30px;">37552548</span>
<span class="t" style="top:590.83px;font-size:11px;line-height:13px;color:#222;letter-spacing:0.15px;right:1030.35px;">2025.03.05 11:03:16</span>
<span class="t" style="top:590.83px;font-size:11px;line-height:13px;color:#222;letter-spacing:0.42px;right:959.58px;">buy</span>
<span class="t" style="top:590.83px;font-size:11px;line-height:13px;color:#222;letter-spacing:0.15px;right:904.85px;">1.00</span>
<span class="t" style="top:590.83px;font-size:11px;line-height:13px;color:#222;letter-spacing:0.23px;right:834.27px;">eurusd.s</span>
<span class="t" style="top:590.83px;font-size:11px;line-height:13px;color:#222;letter-spacing:0.11px;right:755.89px;">1.07056</span>
<span class="t" style="top:590.83px;font-size:11px;line-height:13px;color:#222;letter-spacing:0.11px;right:677.39px;">0.00000</span>
<span class="t" style="top:590.83px;font-size:11px;line-height:13px;color:#222;letter-spacing:0.11px;right:598.39px;">0.00000</span>
<span class="t" style="top:590.83px;font-size:11px;line-height:13px;color:#222;letter-spacing:0.11px;right:519.89px;">1.08152</span>
<span class="t" style="top:590.83px;font-size:11px;line-height:13px;color:#222;letter-spacing:0.15px;right:440.85px;">0.00</span>
<span class="t" style="top:590.83px;font-size:11px;line-height:13px;color:#222;letter-spacing:0.13px;right:362.87px;">-19.85</span>
<span class="t" style="top:590.83px;font-size:11px;line-height:13px;color:#222;letter-spacing:0.15px;right:264.35px;">1 096.00</span>
<svg style="left:1023px;top:593.34px" width="9" height="9" viewBox="0 0 9 9"><path d="M1.2 1.2 L7.8 7.8 M7.8 1.2 L1.2 7.8" stroke="#8c8c8c" stroke-width="1.5"/></svg>
<span class="t" style="top:590.83px;font-size:11px;line-height:13px;color:#222;letter-spacing:0.53px;right:5.47px;">M60</span>
<div style="left:11px;top:625.22px;width:1266px;height:1px;background:#d4d4d4;"></div>
<div style="left:110px;top:607.27px;width:1px;height:18.93px;background:#d2d2d2;"></div>
<div style="left:251px;top:607.27px;width:1px;height:18.93px;background:#d2d2d2;"></div>
<div style="left:321px;top:607.27px;width:1px;height:18.93px;background:#d2d2d2;"></div>
<div style="left:376px;top:607.27px;width:1px;height:18.93px;background:#d2d2d2;"></div>
<div style="left:447px;top:607.27px;width:1px;height:18.93px;background:#d2d2d2;"></div>
<div style="left:525px;top:607.27px;width:1px;height:18.93px;background:#d2d2d2;"></div>
<div style="left:604px;top:607.27px;width:1px;height:18.93px;background:#d2d2d2;"></div>
<div style="left:683px;top:607.27px;width:1px;height:18.93px;background:#d2d2d2;"></div>
<div style="left:761px;top:607.27px;width:1px;height:18.93px;background:#d2d2d2;"></div>
<div style="left:840px;top:607.27px;width:1px;height:18.93px;background:#d2d2d2;"></div>
<div style="left:919px;top:607.27px;width:1px;height:18.93px;background:#d2d2d2;"></div>
<div style="left:1035px;top:607.27px;width:1px;height:18.93px;background:#d2d2d2;"></div>
<svg style="left:12px;top:609.27px" width="13" height="14" viewBox="0 0 13 14"><path d="M1.5 1 H6.5 L9.5 4 V12 H1.5 Z" fill="#fff" stroke="#8a8a8a" stroke-width="1"/><path d="M6.5 1 V4 H9.5" fill="none" stroke="#8a8a8a" stroke-width="1"/><path d="M1 12.6 H9" stroke="#bbb" stroke-width="1"/><circle cx="9" cy="10.5" r="2.8" fill="#2f9bf0" stroke="#1873c8" stroke-width="0.8"/></svg>
<span class="t" style="top:609.76px;font-size:11px;line-height:13px;color:#222;letter-spacing:0.19px;left:30px;">37552549</span>
<span class="t" style="top:609.76px;font-size:11px;line-height:13px;color:#222;letter-spacing:0.15px;right:1030.35px;">2025.03.05 11:30:03</span>
<span class="t" style="top:609.76px;font-size:11px;line-height:13px;color:#222;letter-spacing:0.42px;right:959.58px;">buy</span>
<span class="t" style="top:609.76px;font-size:11px;line-height:13px;color:#222;letter-spacing:0.15px;right:904.85px;">1.00</span>
<span class="t" style="top:609.76px;font-size:11px;line-height:13px;color:#222;letter-spacing:0.23px;right:834.27px;">eurusd.s</span>
<span class="t" style="top:609.76px;font-size:11px;line-height:13px;color:#222;letter-spacing:0.11px;right:755.89px;">1.07157</span>
<span class="t" style="top:609.76px;font-size:11px;line-height:13px;color:#222;letter-spacing:0.11px;right:677.39px;">0.00000</span>
<span class="t" style="top:609.76px;font-size:11px;line-height:13px;color:#222;letter-spacing:0.11px;right:598.39px;">0.00000</span>
<span class="t" style="top:609.76px;font-size:11px;line-height:13px;color:#222;letter-spacing:0.11px;right:519.89px;">1.08152</span>
<span class="t" style="top:609.76px;font-size:11px;line-height:13px;color:#222;letter-spacing:0.15px;right:440.85px;">0.00</span>
<span class="t" style="top:609.76px;font-size:11px;line-height:13px;color:#222;letter-spacing:0.13px;right:362.87px;">-19.85</span>
<span class="t" style="top:609.76px;font-size:11px;line-height:13px;color:#222;letter-spacing:0.06px;right:264.44px;">995.00</span>
<svg style="left:1023px;top:612.27px" width="9" height="9" viewBox="0 0 9 9"><path d="M1.2 1.2 L7.8 7.8 M7.8 1.2 L1.2 7.8" stroke="#8c8c8c" stroke-width="1.5"/></svg>
<span class="t" style="top:609.76px;font-size:11px;line-height:13px;color:#222;letter-spacing:0.53px;right:5.47px;">M60</span>
<div style="left:11px;top:626.2px;width:1266px;height:18px;background:#c9c9c9;"></div>
<svg style="left:13px;top:629px" width="11" height="13" viewBox="0 0 11 13"><rect x="0.5" y="0.5" width="9.5" height="11.5" fill="#fff" stroke="#9a9a9a"/><path d="M0.5 12.3 H10.3 V0.8" stroke="#777" stroke-width="0.8" fill="none"/><path d="M5.2 3.2 L8.4 6.6 H6.8 V9.6 H3.6 V6.6 H2 Z" fill="#2cc02c" stroke="#128a12" stroke-width="0.8"/></svg>
<span class="t" style="top:629.27px;font-size:10.9px;line-height:12.9px;color:#111;font-weight:bold;left:30px;">余额:</span>
<span class="t" style="top:629.19px;font-size:11px;line-height:13px;color:#111;font-weight:bold;letter-spacing:0.12px;left:59px;">324 209.62 USD</span>
<span class="t" style="top:629.27px;font-size:10.9px;line-height:12.9px;color:#111;font-weight:bold;left:150px;">净值:</span>
<span class="t" style="top:629.19px;font-size:11px;line-height:13px;color:#111;font-weight:bold;letter-spacing:0.09px;left:178.5px;">348 261.74</span>
<span class="t" style="top:629.27px;font-size:10.9px;line-height:12.9px;color:#111;font-weight:bold;left:242px;">已用预付款:</span>
<span class="t" style="top:629.19px;font-size:11px;line-height:13px;color:#111;font-weight:bold;letter-spacing:0.15px;left:302px;">5 169.77</span>
<span class="t" style="top:629.27px;font-size:10.9px;line-height:12.9px;color:#111;font-weight:bold;left:353.5px;">可用预付款:</span>
<span class="t" style="top:629.19px;font-size:11px;line-height:13px;color:#111;font-weight:bold;letter-spacing:0.14px;left:414px;">343 091.97</span>
<span class="t" style="top:629.27px;font-size:10.9px;line-height:12.9px;color:#111;font-weight:bold;left:478px;">预付款比例:</span>
<span class="t" style="top:629.19px;font-size:11px;line-height:13px;color:#111;font-weight:bold;letter-spacing:0.18px;left:538.5px;">6736.51%</span>
<span class="t" style="top:629.19px;font-size:11px;line-height:13px;color:#111;font-weight:bold;letter-spacing:0.12px;right:264.38px;">24 052.12</span>
<div style="left:10px;top:644px;width:1268px;height:1px;background:#d0d0d0;"></div>
<div style="left:0px;top:654px;width:1280px;height:16px;background:#f0f0f0;"></div>
<div style="left:51px;top:653px;width:1229px;height:2px;background:#555;"></div>
<div style="left:12px;top:653px;width:39.5px;height:17px;background:#fff;border-left:1px solid #444;border-right:2px solid #444;box-sizing:border-box;"></div>
<span class="t" style="top:656.77px;font-size:10.9px;line-height:12.9px;color:#000;left:20px;">交易</span>
<span class="t" style="top:656.77px;font-size:10.9px;line-height:12.9px;color:#7a7a7a;left:60px;">展示</span>
<span class="t" style="top:656.77px;font-size:10.9px;line-height:12.9px;color:#7a7a7a;left:100px;">账户历史</span>
<span class="t" style="top:656.77px;font-size:10.9px;line-height:12.9px;color:#7a7a7a;left:162px;">新闻</span>
<span class="t" style="top:656.77px;font-size:10.9px;line-height:12.9px;color:#7a7a7a;left:201px;">警报</span>
<span class="t" style="top:656.77px;font-size:10.9px;line-height:12.9px;color:#7a7a7a;left:241px;">邮箱</span>
<span class="t" style="top:656.77px;font-size:10.9px;line-height:12.9px;color:#7a7a7a;left:293px;">市场</span>
<span class="t" style="top:656.77px;font-size:10.9px;line-height:12.9px;color:#7a7a7a;left:352px;">文章</span>
<span class="t" style="top:656.77px;font-size:10.9px;line-height:12.9px;color:#7a7a7a;left:391px;">代码库</span>
<span class="t" style="top:656.69px;font-size:11px;line-height:13px;color:#7a7a7a;letter-spacing:-0.34px;left:442px;">EA</span>
<span class="t" style="top:656.77px;font-size:10.9px;line-height:12.9px;color:#7a7a7a;left:473px;">日志</span>
<div style="left:90px;top:657px;width:1px;height:12px;background:#777;"></div>
<div style="left:152.5px;top:657px;width:1px;height:12px;background:#777;"></div>
<div style="left:192.5px;top:657px;width:1px;height:12px;background:#777;"></div>
<div style="left:232.5px;top:657px;width:1px;height:12px;background:#777;"></div>
<div style="left:284.5px;top:657px;width:1px;height:12px;background:#777;"></div>
<div style="left:342px;top:657px;width:1px;height:12px;background:#777;"></div>
<div style="left:382.5px;top:657px;width:1px;height:12px;background:#777;"></div>
<div style="left:433.5px;top:657px;width:1px;height:12px;background:#777;"></div>
<div style="left:464px;top:657px;width:1px;height:12px;background:#777;"></div>
<div style="left:504px;top:657px;width:1px;height:12px;background:#777;"></div>
<span class="t" style="top:661.53px;font-size:10px;line-height:12px;color:#f01818;font-weight:bold;letter-spacing:-0.56px;left:265px;">15</span>
<span class="t" style="top:661.53px;font-size:10px;line-height:12px;color:#f01818;font-weight:bold;letter-spacing:-0.53px;left:317.5px;">111</span>
<svg style="left:1086px;top:617px" width="28" height="30" viewBox="0 0 28 30"><path d="M10 2.3 H16.5 A8 8 0 0 1 24.6 10.3 V16.4 A8 8 0 0 1 16.5 24.4 H14.5 L10.3 28.2 L10 24.4 A8 8 0 0 1 2 16.4 V10.3 A8 8 0 0 1 10 2.3 Z" fill="#fff" fill-opacity="0.95" stroke="#999" stroke-opacity="0.45" stroke-width="0.8"/>
<path d="M18.8 7.4 C15.8 6 13.6 7.4 12.9 10.4 L10.2 22.6 M8.2 13.4 H17.2" stroke="#555" stroke-width="2" fill="none" stroke-linecap="round"/></svg>
<svg style="left:1116px;top:617px" width="154" height="30" viewBox="0 0 154 30" fill="none" stroke-linecap="round" stroke-linejoin="round"><g stroke="rgba(70,70,70,.7)" stroke-width="1.7"><path transform="translate(4.4,4.5)" d="M15.2 6.6 V13 C15.2 15.2 17 15.8 18.6 14.6 C20.6 13 21.2 11 21.2 9.6 C21.2 4.6 17 0.9 11 0.9 C5 0.9 0.9 5 0.9 10.9 C0.9 17 5 21 11 21 C13.6 21 15.6 20.5 17.2 19.4 M15.2 10.6 A4.3 4.3 0 1 1 6.6 10.6 A4.3 4.3 0 1 1 15.2 10.6"/><path transform="translate(28.7,4.5)" d="M0.6 0.9 H11.4 L4.6 18"/><path transform="translate(43.2,4.5)" d="M6 8.7 A4.1 3.95 0 1 1 6.01 8.7 M6 8.7 A5.2 4.6 0 1 0 6.01 8.7"/><path transform="translate(57.7,4.5)" d="M9.2 18 V0.9 L0.8 12.9 H12.6"/><path transform="translate(74.1,4.5)" d="M1 3.3 C2 1.4 4 0.7 6 0.7 C9 0.7 10.7 2.4 10.7 4.7 C10.7 7.3 8.8 8.7 5.6 8.7 C9 8.7 11.2 10.4 11.2 13.2 C11.2 16.1 9 17.5 6 17.5 C3.5 17.5 1.5 16.5 0.6 14.5"/><path transform="translate(87.9,4.5)" d="M6 8.7 A4.1 3.95 0 1 1 6.01 8.7 M6 8.7 A5.2 4.6 0 1 0 6.01 8.7"/><path transform="translate(102.9,4.5)" d="M0.6 0.9 H11.4 L4.6 18"/><path transform="translate(117.3,4.5)" d="M0.8 4.2 L5 0.9 V18"/><path transform="translate(124.9,4.5)" d="M9.2 18 V0.9 L0.8 12.9 H12.6"/><path transform="translate(139.3,4.5)" d="M6 8.7 A4.1 3.95 0 1 1 6.01 8.7 M6 8.7 A5.2 4.6 0 1 0 6.01 8.7"/></g><g stroke="#fff" stroke-width="1.75"><path transform="translate(3.5,3.6)" d="M15.2 6.6 V13 C15.2 15.2 17 15.8 18.6 14.6 C20.6 13 21.2 11 21.2 9.6 C21.2 4.6 17 0.9 11 0.9 C5 0.9 0.9 5 0.9 10.9 C0.9 17 5 21 11 21 C13.6 21 15.6 20.5 17.2 19.4 M15.2 10.6 A4.3 4.3 0 1 1 6.6 10.6 A4.3 4.3 0 1 1 15.2 10.6"/><path transform="translate(27.8,3.6)" d="M0.6 0.9 H11.4 L4.6 18"/><path transform="translate(42.3,3.6)" d="M6 8.7 A4.1 3.95 0 1 1 6.01 8.7 M6 8.7 A5.2 4.6 0 1 0 6.01 8.7"/><path transform="translate(56.8,3.6)" d="M9.2 18 V0.9 L0.8 12.9 H12.6"/><path transform="translate(73.2,3.6)" d="M1 3.3 C2 1.4 4 0.7 6 0.7 C9 0.7 10.7 2.4 10.7 4.7 C10.7 7.3 8.8 8.7 5.6 8.7 C9 8.7 11.2 10.4 11.2 13.2 C11.2 16.1 9 17.5 6 17.5 C3.5 17.5 1.5 16.5 0.6 14.5"/><path transform="translate(87.0,3.6)" d="M6 8.7 A4.1 3.95 0 1 1 6.01 8.7 M6 8.7 A5.2 4.6 0 1 0 6.01 8.7"/><path transform="translate(102.0,3.6)" d="M0.6 0.9 H11.4 L4.6 18"/><path transform="translate(116.4,3.6)" d="M0.8 4.2 L5 0.9 V18"/><path transform="translate(124.0,3.6)" d="M9.2 18 V0.9 L0.8 12.9 H12.6"/><path transform="translate(138.4,3.6)" d="M6 8.7 A4.1 3.95 0 1 1 6.01 8.7 M6 8.7 A5.2 4.6 0 1 0 6.01 8.7"/></g></svg>
<svg style="left:0px;top:651px" width="9" height="19" viewBox="0 0 9 19" fill="#222"><rect x="0" y="2" width="8" height="1"/><rect x="0" y="4" width="3" height="1"/><rect x="4" y="4" width="4" height="1"/><rect x="1" y="6" width="2" height="2"/><rect x="5" y="6" width="3" height="1"/><rect x="0" y="9" width="8" height="1"/><rect x="3" y="2" width="1" height="9"/><rect x="6" y="8" width="1" height="3"/><rect x="0" y="12" width="3" height="1"/><rect x="4" y="12" width="4" height="1"/><rect x="1" y="14" width="6" height="1"/><rect x="0" y="16" width="2" height="3"/><rect x="3" y="16" width="2" height="3"/><rect x="6" y="16" width="2" height="3"/></svg>
</div></body></html>
